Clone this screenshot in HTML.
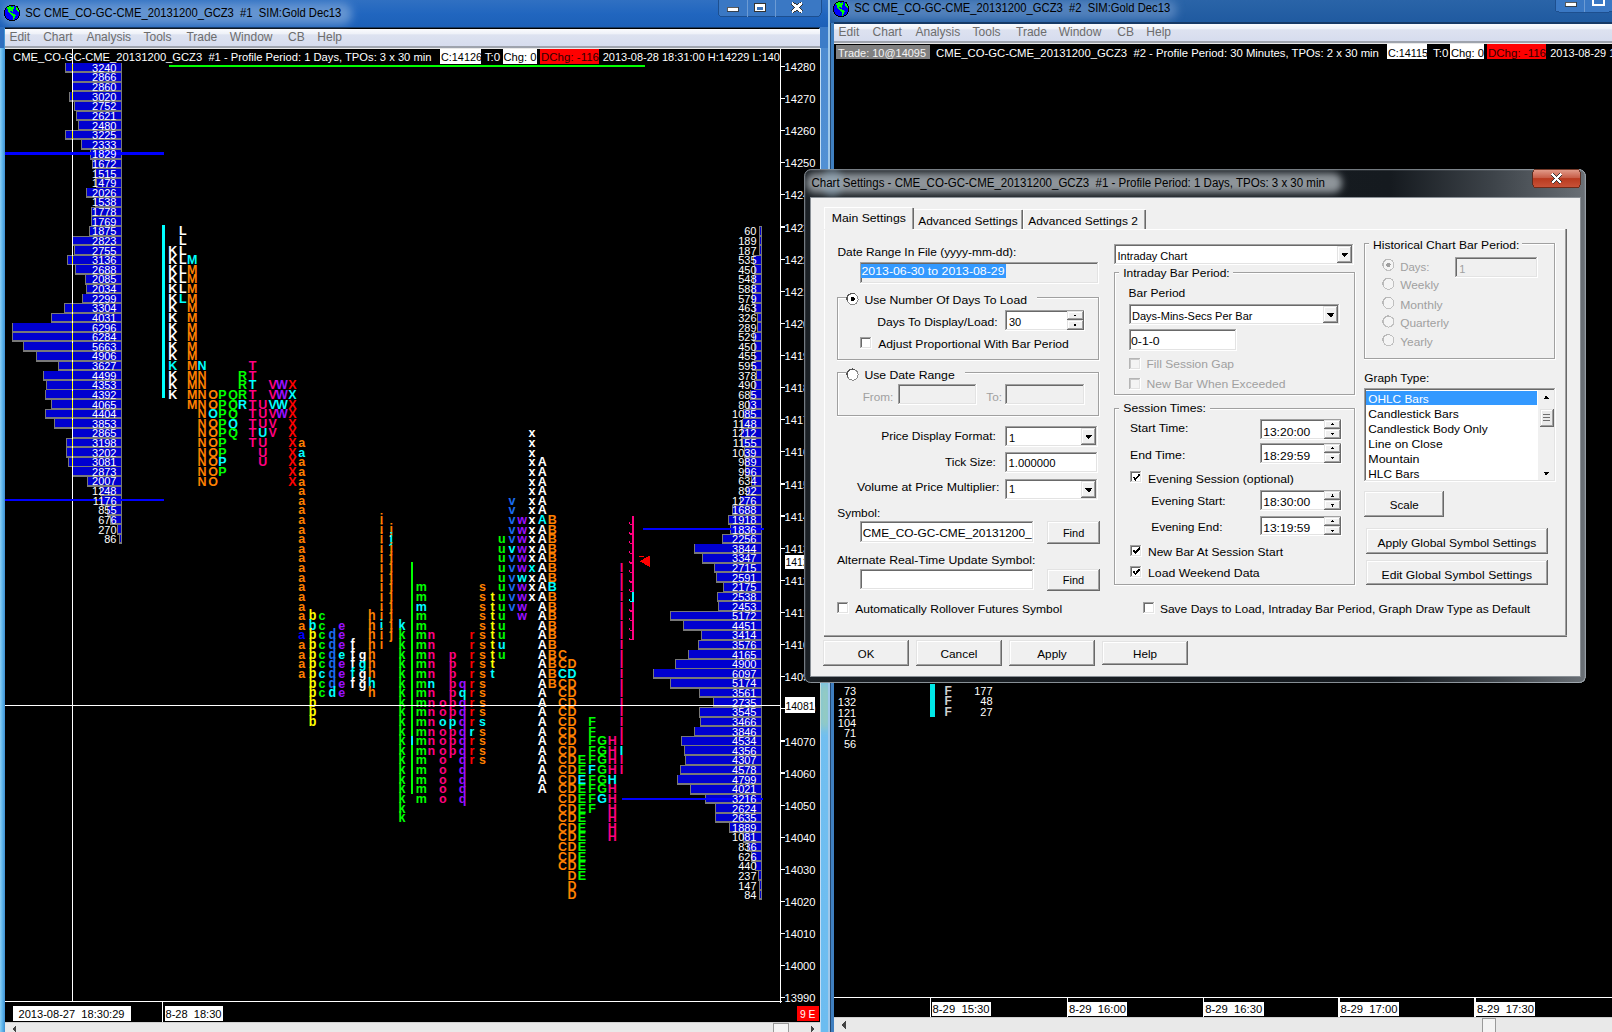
<!DOCTYPE html><html><head><meta charset="utf-8"><title>SC</title><style>
html,body{margin:0;padding:0;background:#000;overflow:hidden;width:1612px;height:1032px}
svg{display:block;font-family:"Liberation Sans",sans-serif}
</style></head><body>
<svg width="1612" height="1032" viewBox="0 0 1612 1032" shape-rendering="crispEdges">
<defs>
<linearGradient id="tb1" x1="0" y1="0" x2="0" y2="1"><stop offset="0" stop-color="#3070c2"/><stop offset="0.5" stop-color="#2166bf"/><stop offset="1" stop-color="#1c60b8"/></linearGradient>
<linearGradient id="tb2" x1="0" y1="0" x2="0" y2="1"><stop offset="0" stop-color="#2a64a8"/><stop offset="1" stop-color="#1f5aa0"/></linearGradient>
<radialGradient id="glow" cx="0.5" cy="0.5" r="0.5"><stop offset="0" stop-color="#9cc3ea" stop-opacity="0.9"/><stop offset="0.7" stop-color="#7fb0e4" stop-opacity="0.5"/><stop offset="1" stop-color="#6aa0dc" stop-opacity="0"/></radialGradient>
<linearGradient id="menu" x1="0" y1="0" x2="0" y2="1"><stop offset="0" stop-color="#fbfcfe"/><stop offset="0.3" stop-color="#eef1f8"/><stop offset="0.35" stop-color="#dde2f0"/><stop offset="1" stop-color="#d6dcee"/></linearGradient>
<linearGradient id="frameL" x1="0" y1="0" x2="1" y2="0"><stop offset="0" stop-color="#8ccff5"/><stop offset="0.5" stop-color="#5cb3ea"/><stop offset="1" stop-color="#3f8fd0"/></linearGradient>
<linearGradient id="frameM" x1="0" y1="0" x2="0" y2="1"><stop offset="0" stop-color="#4c8ad0"/><stop offset="0.45" stop-color="#5c9edc"/><stop offset="0.65" stop-color="#72bff0"/><stop offset="1" stop-color="#6cbcf0"/></linearGradient>
<linearGradient id="dlgframe" x1="0" y1="0" x2="0" y2="1"><stop offset="0" stop-color="#5d6369"/><stop offset="0.05" stop-color="#4b5157"/><stop offset="1" stop-color="#2f3439"/></linearGradient>
<linearGradient id="closebtn" x1="0" y1="0" x2="0" y2="1"><stop offset="0" stop-color="#e3a08f"/><stop offset="0.45" stop-color="#c85e48"/><stop offset="0.5" stop-color="#b93a1f"/><stop offset="1" stop-color="#c9543a"/></linearGradient>
<linearGradient id="globe" x1="0" y1="0" x2="1" y2="1"><stop offset="0" stop-color="#0000ff"/><stop offset="1" stop-color="#0000c0"/></linearGradient>
<filter id="blurT" x="-10%" y="-50%" width="120%" height="200%"><feGaussianBlur stdDeviation="4"/></filter>
</defs>
<rect x="0.00" y="0.00" width="1612.00" height="1032.00" fill="#000" />
<rect x="0.00" y="0.00" width="829.00" height="28.00" fill="url(#tb1)" />
<rect x="2" y="3" width="350" height="22" rx="10" fill="#7aa4d8" opacity="0.75" filter="url(#blurT)" shape-rendering="auto"/>
<rect x="0.00" y="28.00" width="5.00" height="1004.00" fill="url(#frameL)" />
<rect x="819.00" y="28.00" width="10.00" height="1004.00" fill="url(#frameM)" />
<rect x="820.00" y="28.00" width="1.00" height="1004.00" fill="#c0dcf4" />
<rect x="821" y="684" width="8" height="45" fill="#b8d890" opacity="0.7" filter="url(#blurT)" shape-rendering="auto"/>
<rect x="0.00" y="27.00" width="4.00" height="21.00" fill="#2f6fbf" />
<rect x="820.00" y="27.00" width="9.00" height="21.00" fill="#3c7cc8" />
<rect x="829.00" y="0.00" width="783.00" height="23.00" fill="url(#tb2)" />
<rect x="832" y="0" width="345" height="20" rx="9" fill="#6f98cc" opacity="0.6" filter="url(#blurT)" shape-rendering="auto"/>
<rect x="829.00" y="23.00" width="5.00" height="1009.00" fill="#3f7fc0" />
<rect x="828.00" y="0.00" width="1.50" height="1032.00" fill="#9fc8ea" />
<rect x="829.50" y="23.00" width="1.50" height="1009.00" fill="#23466d" />
<rect x="9.00" y="5.00" width="6.00" height="1.00" fill="#000" />
<rect x="7.00" y="6.00" width="2.00" height="1.00" fill="#000" />
<rect x="9.00" y="6.00" width="2.00" height="1.00" fill="#00ff00" />
<rect x="11.00" y="6.00" width="2.00" height="1.00" fill="#0000ff" />
<rect x="13.00" y="6.00" width="1.00" height="1.00" fill="#00ff00" />
<rect x="14.00" y="6.00" width="2.00" height="1.00" fill="#0000ff" />
<rect x="16.00" y="6.00" width="2.00" height="1.00" fill="#000" />
<rect x="6.00" y="7.00" width="1.00" height="1.00" fill="#000" />
<rect x="7.00" y="7.00" width="7.00" height="1.00" fill="#00ff00" />
<rect x="14.00" y="7.00" width="2.00" height="1.00" fill="#0000ff" />
<rect x="16.00" y="7.00" width="1.00" height="1.00" fill="#00ff00" />
<rect x="17.00" y="7.00" width="1.00" height="1.00" fill="#000" />
<rect x="5.00" y="8.00" width="1.00" height="1.00" fill="#000" />
<rect x="6.00" y="8.00" width="1.00" height="1.00" fill="#0000ff" />
<rect x="7.00" y="8.00" width="7.00" height="1.00" fill="#00ff00" />
<rect x="14.00" y="8.00" width="2.00" height="1.00" fill="#0000ff" />
<rect x="16.00" y="8.00" width="2.00" height="1.00" fill="#00ff00" />
<rect x="18.00" y="8.00" width="1.00" height="1.00" fill="#000" />
<rect x="5.00" y="9.00" width="1.00" height="1.00" fill="#000" />
<rect x="6.00" y="9.00" width="2.00" height="1.00" fill="#0000ff" />
<rect x="8.00" y="9.00" width="5.00" height="1.00" fill="#00ff00" />
<rect x="13.00" y="9.00" width="3.00" height="1.00" fill="#0000ff" />
<rect x="16.00" y="9.00" width="2.00" height="1.00" fill="#00ff00" />
<rect x="18.00" y="9.00" width="1.00" height="1.00" fill="#000" />
<rect x="4.00" y="10.00" width="1.00" height="1.00" fill="#000" />
<rect x="5.00" y="10.00" width="3.00" height="1.00" fill="#0000ff" />
<rect x="8.00" y="10.00" width="5.00" height="1.00" fill="#00ff00" />
<rect x="13.00" y="10.00" width="4.00" height="1.00" fill="#0000ff" />
<rect x="17.00" y="10.00" width="2.00" height="1.00" fill="#00ff00" />
<rect x="19.00" y="10.00" width="1.00" height="1.00" fill="#000" />
<rect x="4.00" y="11.00" width="1.00" height="1.00" fill="#000" />
<rect x="5.00" y="11.00" width="3.00" height="1.00" fill="#0000ff" />
<rect x="8.00" y="11.00" width="2.00" height="1.00" fill="#00ff00" />
<rect x="10.00" y="11.00" width="2.00" height="1.00" fill="#0000ff" />
<rect x="12.00" y="11.00" width="1.00" height="1.00" fill="#00ff00" />
<rect x="13.00" y="11.00" width="5.00" height="1.00" fill="#0000ff" />
<rect x="18.00" y="11.00" width="1.00" height="1.00" fill="#00ff00" />
<rect x="19.00" y="11.00" width="1.00" height="1.00" fill="#000" />
<rect x="4.00" y="12.00" width="1.00" height="1.00" fill="#000" />
<rect x="5.00" y="12.00" width="4.00" height="1.00" fill="#0000ff" />
<rect x="9.00" y="12.00" width="2.00" height="1.00" fill="#00ff00" />
<rect x="11.00" y="12.00" width="8.00" height="1.00" fill="#0000ff" />
<rect x="19.00" y="12.00" width="1.00" height="1.00" fill="#000" />
<rect x="4.00" y="13.00" width="1.00" height="1.00" fill="#000" />
<rect x="5.00" y="13.00" width="5.00" height="1.00" fill="#0000ff" />
<rect x="10.00" y="13.00" width="3.00" height="1.00" fill="#00ff00" />
<rect x="13.00" y="13.00" width="6.00" height="1.00" fill="#0000ff" />
<rect x="19.00" y="13.00" width="1.00" height="1.00" fill="#000" />
<rect x="4.00" y="14.00" width="1.00" height="1.00" fill="#000" />
<rect x="5.00" y="14.00" width="6.00" height="1.00" fill="#0000ff" />
<rect x="11.00" y="14.00" width="4.00" height="1.00" fill="#00ff00" />
<rect x="15.00" y="14.00" width="4.00" height="1.00" fill="#0000ff" />
<rect x="19.00" y="14.00" width="1.00" height="1.00" fill="#000" />
<rect x="4.00" y="15.00" width="1.00" height="1.00" fill="#000" />
<rect x="5.00" y="15.00" width="7.00" height="1.00" fill="#0000ff" />
<rect x="12.00" y="15.00" width="4.00" height="1.00" fill="#00ff00" />
<rect x="16.00" y="15.00" width="3.00" height="1.00" fill="#0000ff" />
<rect x="19.00" y="15.00" width="1.00" height="1.00" fill="#000" />
<rect x="5.00" y="16.00" width="1.00" height="1.00" fill="#000" />
<rect x="6.00" y="16.00" width="7.00" height="1.00" fill="#0000ff" />
<rect x="13.00" y="16.00" width="2.00" height="1.00" fill="#00ff00" />
<rect x="15.00" y="16.00" width="3.00" height="1.00" fill="#0000ff" />
<rect x="18.00" y="16.00" width="1.00" height="1.00" fill="#000" />
<rect x="5.00" y="17.00" width="1.00" height="1.00" fill="#000" />
<rect x="6.00" y="17.00" width="7.00" height="1.00" fill="#0000ff" />
<rect x="13.00" y="17.00" width="2.00" height="1.00" fill="#00ff00" />
<rect x="15.00" y="17.00" width="3.00" height="1.00" fill="#0000ff" />
<rect x="18.00" y="17.00" width="1.00" height="1.00" fill="#000" />
<rect x="6.00" y="18.00" width="1.00" height="1.00" fill="#000" />
<rect x="7.00" y="18.00" width="6.00" height="1.00" fill="#0000ff" />
<rect x="13.00" y="18.00" width="1.00" height="1.00" fill="#00ff00" />
<rect x="14.00" y="18.00" width="3.00" height="1.00" fill="#0000ff" />
<rect x="17.00" y="18.00" width="1.00" height="1.00" fill="#000" />
<rect x="7.00" y="19.00" width="2.00" height="1.00" fill="#000" />
<rect x="9.00" y="19.00" width="4.00" height="1.00" fill="#0000ff" />
<rect x="13.00" y="19.00" width="1.00" height="1.00" fill="#00ff00" />
<rect x="14.00" y="19.00" width="1.00" height="1.00" fill="#0000ff" />
<rect x="15.00" y="19.00" width="2.00" height="1.00" fill="#000" />
<rect x="9.00" y="20.00" width="6.00" height="1.00" fill="#000" />
<text x="25.30" y="16.60" font-size="12" fill="#000" textLength="316" lengthAdjust="spacingAndGlyphs" xml:space="preserve">SC CME_CO-GC-CME_20131200_GCZ3  #1  SIM:Gold Dec13</text>
<rect x="838.00" y="1.00" width="6.00" height="1.00" fill="#000" />
<rect x="836.00" y="2.00" width="2.00" height="1.00" fill="#000" />
<rect x="838.00" y="2.00" width="2.00" height="1.00" fill="#00ff00" />
<rect x="840.00" y="2.00" width="2.00" height="1.00" fill="#0000ff" />
<rect x="842.00" y="2.00" width="1.00" height="1.00" fill="#00ff00" />
<rect x="843.00" y="2.00" width="2.00" height="1.00" fill="#0000ff" />
<rect x="845.00" y="2.00" width="2.00" height="1.00" fill="#000" />
<rect x="835.00" y="3.00" width="1.00" height="1.00" fill="#000" />
<rect x="836.00" y="3.00" width="7.00" height="1.00" fill="#00ff00" />
<rect x="843.00" y="3.00" width="2.00" height="1.00" fill="#0000ff" />
<rect x="845.00" y="3.00" width="1.00" height="1.00" fill="#00ff00" />
<rect x="846.00" y="3.00" width="1.00" height="1.00" fill="#000" />
<rect x="834.00" y="4.00" width="1.00" height="1.00" fill="#000" />
<rect x="835.00" y="4.00" width="1.00" height="1.00" fill="#0000ff" />
<rect x="836.00" y="4.00" width="7.00" height="1.00" fill="#00ff00" />
<rect x="843.00" y="4.00" width="2.00" height="1.00" fill="#0000ff" />
<rect x="845.00" y="4.00" width="2.00" height="1.00" fill="#00ff00" />
<rect x="847.00" y="4.00" width="1.00" height="1.00" fill="#000" />
<rect x="834.00" y="5.00" width="1.00" height="1.00" fill="#000" />
<rect x="835.00" y="5.00" width="2.00" height="1.00" fill="#0000ff" />
<rect x="837.00" y="5.00" width="5.00" height="1.00" fill="#00ff00" />
<rect x="842.00" y="5.00" width="3.00" height="1.00" fill="#0000ff" />
<rect x="845.00" y="5.00" width="2.00" height="1.00" fill="#00ff00" />
<rect x="847.00" y="5.00" width="1.00" height="1.00" fill="#000" />
<rect x="833.00" y="6.00" width="1.00" height="1.00" fill="#000" />
<rect x="834.00" y="6.00" width="3.00" height="1.00" fill="#0000ff" />
<rect x="837.00" y="6.00" width="5.00" height="1.00" fill="#00ff00" />
<rect x="842.00" y="6.00" width="4.00" height="1.00" fill="#0000ff" />
<rect x="846.00" y="6.00" width="2.00" height="1.00" fill="#00ff00" />
<rect x="848.00" y="6.00" width="1.00" height="1.00" fill="#000" />
<rect x="833.00" y="7.00" width="1.00" height="1.00" fill="#000" />
<rect x="834.00" y="7.00" width="3.00" height="1.00" fill="#0000ff" />
<rect x="837.00" y="7.00" width="2.00" height="1.00" fill="#00ff00" />
<rect x="839.00" y="7.00" width="2.00" height="1.00" fill="#0000ff" />
<rect x="841.00" y="7.00" width="1.00" height="1.00" fill="#00ff00" />
<rect x="842.00" y="7.00" width="5.00" height="1.00" fill="#0000ff" />
<rect x="847.00" y="7.00" width="1.00" height="1.00" fill="#00ff00" />
<rect x="848.00" y="7.00" width="1.00" height="1.00" fill="#000" />
<rect x="833.00" y="8.00" width="1.00" height="1.00" fill="#000" />
<rect x="834.00" y="8.00" width="4.00" height="1.00" fill="#0000ff" />
<rect x="838.00" y="8.00" width="2.00" height="1.00" fill="#00ff00" />
<rect x="840.00" y="8.00" width="8.00" height="1.00" fill="#0000ff" />
<rect x="848.00" y="8.00" width="1.00" height="1.00" fill="#000" />
<rect x="833.00" y="9.00" width="1.00" height="1.00" fill="#000" />
<rect x="834.00" y="9.00" width="5.00" height="1.00" fill="#0000ff" />
<rect x="839.00" y="9.00" width="3.00" height="1.00" fill="#00ff00" />
<rect x="842.00" y="9.00" width="6.00" height="1.00" fill="#0000ff" />
<rect x="848.00" y="9.00" width="1.00" height="1.00" fill="#000" />
<rect x="833.00" y="10.00" width="1.00" height="1.00" fill="#000" />
<rect x="834.00" y="10.00" width="6.00" height="1.00" fill="#0000ff" />
<rect x="840.00" y="10.00" width="4.00" height="1.00" fill="#00ff00" />
<rect x="844.00" y="10.00" width="4.00" height="1.00" fill="#0000ff" />
<rect x="848.00" y="10.00" width="1.00" height="1.00" fill="#000" />
<rect x="833.00" y="11.00" width="1.00" height="1.00" fill="#000" />
<rect x="834.00" y="11.00" width="7.00" height="1.00" fill="#0000ff" />
<rect x="841.00" y="11.00" width="4.00" height="1.00" fill="#00ff00" />
<rect x="845.00" y="11.00" width="3.00" height="1.00" fill="#0000ff" />
<rect x="848.00" y="11.00" width="1.00" height="1.00" fill="#000" />
<rect x="834.00" y="12.00" width="1.00" height="1.00" fill="#000" />
<rect x="835.00" y="12.00" width="7.00" height="1.00" fill="#0000ff" />
<rect x="842.00" y="12.00" width="2.00" height="1.00" fill="#00ff00" />
<rect x="844.00" y="12.00" width="3.00" height="1.00" fill="#0000ff" />
<rect x="847.00" y="12.00" width="1.00" height="1.00" fill="#000" />
<rect x="834.00" y="13.00" width="1.00" height="1.00" fill="#000" />
<rect x="835.00" y="13.00" width="7.00" height="1.00" fill="#0000ff" />
<rect x="842.00" y="13.00" width="2.00" height="1.00" fill="#00ff00" />
<rect x="844.00" y="13.00" width="3.00" height="1.00" fill="#0000ff" />
<rect x="847.00" y="13.00" width="1.00" height="1.00" fill="#000" />
<rect x="835.00" y="14.00" width="1.00" height="1.00" fill="#000" />
<rect x="836.00" y="14.00" width="6.00" height="1.00" fill="#0000ff" />
<rect x="842.00" y="14.00" width="1.00" height="1.00" fill="#00ff00" />
<rect x="843.00" y="14.00" width="3.00" height="1.00" fill="#0000ff" />
<rect x="846.00" y="14.00" width="1.00" height="1.00" fill="#000" />
<rect x="836.00" y="15.00" width="2.00" height="1.00" fill="#000" />
<rect x="838.00" y="15.00" width="4.00" height="1.00" fill="#0000ff" />
<rect x="842.00" y="15.00" width="1.00" height="1.00" fill="#00ff00" />
<rect x="843.00" y="15.00" width="1.00" height="1.00" fill="#0000ff" />
<rect x="844.00" y="15.00" width="2.00" height="1.00" fill="#000" />
<rect x="838.00" y="16.00" width="6.00" height="1.00" fill="#000" />
<text x="854.20" y="12.40" font-size="12" fill="#000" textLength="316" lengthAdjust="spacingAndGlyphs" xml:space="preserve">SC CME_CO-GC-CME_20131200_GCZ3  #2  SIM:Gold Dec13</text>
<rect x="718" y="-4" width="103" height="20.5" rx="4" fill="#3a78c4" stroke="#1d4f8f" stroke-width="1"/>
<line x1="747" y1="0" x2="747" y2="16.5" stroke="#6c9bd4" stroke-width="1" />
<line x1="775" y1="0" x2="775" y2="16.5" stroke="#6c9bd4" stroke-width="1" />
<rect x="727.00" y="7.00" width="11.00" height="4.00" fill="#fff" stroke="#333" stroke-width="0.8"/>
<rect x="754.00" y="3.00" width="12.00" height="9.00" fill="#333" />
<rect x="755.00" y="4.00" width="10.00" height="7.00" fill="#fff" />
<rect x="757.00" y="7.00" width="6.00" height="2.50" fill="#3a72b8" />
<path d="M792 3 L802 12 M802 3 L792 12" stroke="#333" stroke-width="4"/><path d="M792 3 L802 12 M802 3 L792 12" stroke="#fff" stroke-width="2.6"/>
<rect x="1555" y="-4" width="58" height="16" rx="4" fill="#3a78c4" stroke="#1d4f8f" stroke-width="1"/>
<line x1="1584" y1="0" x2="1584" y2="12" stroke="#6c9bd4" stroke-width="1" />
<rect x="1565.00" y="2.00" width="11.00" height="4.00" fill="#fff" stroke="#333" stroke-width="0.8"/>
<rect x="1593" y="-2" width="11" height="7" fill="none" stroke="#fff" stroke-width="2.4"/>
<rect x="5.00" y="27.00" width="815.00" height="1.20" fill="#163a66" />
<rect x="5.00" y="28.50" width="815.00" height="18.00" fill="url(#menu)" />
<rect x="5.00" y="46.00" width="815.00" height="2.00" fill="#9ea3ad" />
<rect x="5.00" y="47.50" width="815.00" height="1.00" fill="#e8e8e8" />
<text x="9.40" y="40.80" font-size="12" fill="#6d6d6d" >Edit</text>
<text x="43.20" y="40.80" font-size="12" fill="#6d6d6d" >Chart</text>
<text x="86.40" y="40.80" font-size="12" fill="#6d6d6d" >Analysis</text>
<text x="143.50" y="40.80" font-size="12" fill="#6d6d6d" >Tools</text>
<text x="186.40" y="40.80" font-size="12" fill="#6d6d6d" >Trade</text>
<text x="229.80" y="40.80" font-size="12" fill="#6d6d6d" >Window</text>
<text x="288.00" y="40.80" font-size="12" fill="#6d6d6d" >CB</text>
<text x="317.30" y="40.80" font-size="12" fill="#6d6d6d" >Help</text>
<rect x="834.00" y="22.30" width="778.00" height="1.20" fill="#163a66" />
<rect x="834.00" y="23.50" width="778.00" height="18.00" fill="url(#menu)" />
<rect x="834.00" y="41.00" width="778.00" height="2.00" fill="#9ea3ad" />
<rect x="834.00" y="42.50" width="778.00" height="1.00" fill="#e8e8e8" />
<text x="838.60" y="36.00" font-size="12" fill="#6d6d6d" >Edit</text>
<text x="872.60" y="36.00" font-size="12" fill="#6d6d6d" >Chart</text>
<text x="915.50" y="36.00" font-size="12" fill="#6d6d6d" >Analysis</text>
<text x="972.60" y="36.00" font-size="12" fill="#6d6d6d" >Tools</text>
<text x="1016.00" y="36.00" font-size="12" fill="#6d6d6d" >Trade</text>
<text x="1058.70" y="36.00" font-size="12" fill="#6d6d6d" >Window</text>
<text x="1117.30" y="36.00" font-size="12" fill="#6d6d6d" >CB</text>
<text x="1146.30" y="36.00" font-size="12" fill="#6d6d6d" >Help</text>
<rect x="5.00" y="48.50" width="815.00" height="974.00" fill="#000" />
<rect x="834.00" y="43.50" width="778.00" height="974.00" fill="#000" />
<text x="13.10" y="61.00" font-size="11.5" fill="#fff" textLength="418.4" lengthAdjust="spacingAndGlyphs" xml:space="preserve">CME_CO-GC-CME_20131200_GCZ3  #1 - Profile Period: 1 Days, TPOs: 3 x 30 min</text>
<rect x="440.00" y="48.80" width="40.80" height="14.70" fill="#fff" />
<text x="441.00" y="61.00" font-size="11.5" fill="#000" textLength="41" lengthAdjust="spacingAndGlyphs" >C:14126</text>
<text x="484.80" y="61.00" font-size="11.5" fill="#fff" textLength="15.5" lengthAdjust="spacingAndGlyphs" >T:0</text>
<rect x="502.70" y="48.80" width="34.10" height="14.70" fill="#fff" />
<text x="503.50" y="61.00" font-size="11.5" fill="#000" textLength="33" lengthAdjust="spacingAndGlyphs" >Chg: 0</text>
<rect x="540.00" y="48.80" width="58.70" height="14.70" fill="#ff0000" />
<text x="541.00" y="61.00" font-size="11.5" fill="#300" textLength="58" lengthAdjust="spacingAndGlyphs" >DChg: -116</text>
<text x="602.70" y="61.00" font-size="11.5" fill="#fff" textLength="177.3" lengthAdjust="spacingAndGlyphs" >2013-08-28 18:31:00 H:14229 L:140</text>
<rect x="169.00" y="64.80" width="476.00" height="2.00" fill="#00ff00" />
<rect x="780.00" y="48.50" width="1.20" height="954.00" fill="#fff" />
<rect x="5.00" y="1001.30" width="776.50" height="1.10" fill="#fff" />
<rect x="781.00" y="65.80" width="3.50" height="1.20" fill="#fff" />
<text x="784.50" y="71.00" font-size="11.5" fill="#fff" textLength="31" lengthAdjust="spacingAndGlyphs" >14280</text>
<rect x="781.00" y="97.92" width="3.50" height="1.20" fill="#fff" />
<text x="784.50" y="103.12" font-size="11.5" fill="#fff" textLength="31" lengthAdjust="spacingAndGlyphs" >14270</text>
<rect x="781.00" y="130.04" width="3.50" height="1.20" fill="#fff" />
<text x="784.50" y="135.24" font-size="11.5" fill="#fff" textLength="31" lengthAdjust="spacingAndGlyphs" >14260</text>
<rect x="781.00" y="162.16" width="3.50" height="1.20" fill="#fff" />
<text x="784.50" y="167.36" font-size="11.5" fill="#fff" textLength="31" lengthAdjust="spacingAndGlyphs" >14250</text>
<rect x="781.00" y="194.28" width="3.50" height="1.20" fill="#fff" />
<text x="784.50" y="199.48" font-size="11.5" fill="#fff" textLength="31" lengthAdjust="spacingAndGlyphs" >14240</text>
<rect x="781.00" y="226.40" width="3.50" height="1.20" fill="#fff" />
<text x="784.50" y="231.60" font-size="11.5" fill="#fff" textLength="31" lengthAdjust="spacingAndGlyphs" >14230</text>
<rect x="781.00" y="258.52" width="3.50" height="1.20" fill="#fff" />
<text x="784.50" y="263.72" font-size="11.5" fill="#fff" textLength="31" lengthAdjust="spacingAndGlyphs" >14220</text>
<rect x="781.00" y="290.64" width="3.50" height="1.20" fill="#fff" />
<text x="784.50" y="295.84" font-size="11.5" fill="#fff" textLength="31" lengthAdjust="spacingAndGlyphs" >14210</text>
<rect x="781.00" y="322.76" width="3.50" height="1.20" fill="#fff" />
<text x="784.50" y="327.96" font-size="11.5" fill="#fff" textLength="31" lengthAdjust="spacingAndGlyphs" >14200</text>
<rect x="781.00" y="354.88" width="3.50" height="1.20" fill="#fff" />
<text x="784.50" y="360.08" font-size="11.5" fill="#fff" textLength="31" lengthAdjust="spacingAndGlyphs" >14190</text>
<rect x="781.00" y="387.00" width="3.50" height="1.20" fill="#fff" />
<text x="784.50" y="392.20" font-size="11.5" fill="#fff" textLength="31" lengthAdjust="spacingAndGlyphs" >14180</text>
<rect x="781.00" y="419.12" width="3.50" height="1.20" fill="#fff" />
<text x="784.50" y="424.32" font-size="11.5" fill="#fff" textLength="31" lengthAdjust="spacingAndGlyphs" >14170</text>
<rect x="781.00" y="451.24" width="3.50" height="1.20" fill="#fff" />
<text x="784.50" y="456.44" font-size="11.5" fill="#fff" textLength="31" lengthAdjust="spacingAndGlyphs" >14160</text>
<rect x="781.00" y="483.36" width="3.50" height="1.20" fill="#fff" />
<text x="784.50" y="488.56" font-size="11.5" fill="#fff" textLength="31" lengthAdjust="spacingAndGlyphs" >14150</text>
<rect x="781.00" y="515.48" width="3.50" height="1.20" fill="#fff" />
<text x="784.50" y="520.68" font-size="11.5" fill="#fff" textLength="31" lengthAdjust="spacingAndGlyphs" >14140</text>
<rect x="781.00" y="547.60" width="3.50" height="1.20" fill="#fff" />
<text x="784.50" y="552.80" font-size="11.5" fill="#fff" textLength="31" lengthAdjust="spacingAndGlyphs" >14130</text>
<rect x="781.00" y="579.72" width="3.50" height="1.20" fill="#fff" />
<text x="784.50" y="584.92" font-size="11.5" fill="#fff" textLength="31" lengthAdjust="spacingAndGlyphs" >14120</text>
<rect x="781.00" y="611.84" width="3.50" height="1.20" fill="#fff" />
<text x="784.50" y="617.04" font-size="11.5" fill="#fff" textLength="31" lengthAdjust="spacingAndGlyphs" >14110</text>
<rect x="781.00" y="643.96" width="3.50" height="1.20" fill="#fff" />
<text x="784.50" y="649.16" font-size="11.5" fill="#fff" textLength="31" lengthAdjust="spacingAndGlyphs" >14100</text>
<rect x="781.00" y="676.08" width="3.50" height="1.20" fill="#fff" />
<text x="784.50" y="681.28" font-size="11.5" fill="#fff" textLength="31" lengthAdjust="spacingAndGlyphs" >14090</text>
<rect x="781.00" y="708.20" width="3.50" height="1.20" fill="#fff" />
<text x="784.50" y="713.40" font-size="11.5" fill="#fff" textLength="31" lengthAdjust="spacingAndGlyphs" >14080</text>
<rect x="781.00" y="740.32" width="3.50" height="1.20" fill="#fff" />
<text x="784.50" y="745.52" font-size="11.5" fill="#fff" textLength="31" lengthAdjust="spacingAndGlyphs" >14070</text>
<rect x="781.00" y="772.44" width="3.50" height="1.20" fill="#fff" />
<text x="784.50" y="777.64" font-size="11.5" fill="#fff" textLength="31" lengthAdjust="spacingAndGlyphs" >14060</text>
<rect x="781.00" y="804.56" width="3.50" height="1.20" fill="#fff" />
<text x="784.50" y="809.76" font-size="11.5" fill="#fff" textLength="31" lengthAdjust="spacingAndGlyphs" >14050</text>
<rect x="781.00" y="836.68" width="3.50" height="1.20" fill="#fff" />
<text x="784.50" y="841.88" font-size="11.5" fill="#fff" textLength="31" lengthAdjust="spacingAndGlyphs" >14040</text>
<rect x="781.00" y="868.80" width="3.50" height="1.20" fill="#fff" />
<text x="784.50" y="874.00" font-size="11.5" fill="#fff" textLength="31" lengthAdjust="spacingAndGlyphs" >14030</text>
<rect x="781.00" y="900.92" width="3.50" height="1.20" fill="#fff" />
<text x="784.50" y="906.12" font-size="11.5" fill="#fff" textLength="31" lengthAdjust="spacingAndGlyphs" >14020</text>
<rect x="781.00" y="933.04" width="3.50" height="1.20" fill="#fff" />
<text x="784.50" y="938.24" font-size="11.5" fill="#fff" textLength="31" lengthAdjust="spacingAndGlyphs" >14010</text>
<rect x="781.00" y="965.16" width="3.50" height="1.20" fill="#fff" />
<text x="784.50" y="970.36" font-size="11.5" fill="#fff" textLength="31" lengthAdjust="spacingAndGlyphs" >14000</text>
<rect x="781.00" y="997.28" width="3.50" height="1.20" fill="#fff" />
<text x="784.50" y="1002.48" font-size="11.5" fill="#fff" textLength="31" lengthAdjust="spacingAndGlyphs" >13990</text>
<rect x="65.12" y="62.90" width="56.68" height="10.10" fill="#787878" />
<rect x="71.63" y="72.52" width="50.17" height="10.10" fill="#787878" />
<rect x="71.74" y="82.14" width="50.06" height="10.10" fill="#787878" />
<rect x="68.95" y="91.76" width="52.85" height="10.10" fill="#787878" />
<rect x="73.62" y="101.38" width="48.18" height="10.10" fill="#787878" />
<rect x="75.89" y="111.00" width="45.91" height="10.10" fill="#787878" />
<rect x="78.35" y="120.62" width="43.45" height="10.10" fill="#787878" />
<rect x="65.39" y="130.24" width="56.41" height="10.10" fill="#787878" />
<rect x="80.91" y="139.86" width="40.89" height="10.10" fill="#787878" />
<rect x="89.68" y="149.48" width="32.12" height="10.10" fill="#787878" />
<rect x="92.41" y="159.10" width="29.39" height="10.10" fill="#787878" />
<rect x="95.14" y="168.72" width="26.66" height="10.10" fill="#787878" />
<rect x="95.77" y="178.34" width="26.03" height="10.10" fill="#787878" />
<rect x="86.25" y="187.96" width="35.55" height="10.10" fill="#787878" />
<rect x="94.74" y="197.58" width="27.06" height="10.10" fill="#787878" />
<rect x="90.56" y="207.20" width="31.24" height="10.10" fill="#787878" />
<rect x="90.72" y="216.82" width="31.08" height="10.10" fill="#787878" />
<rect x="88.88" y="226.44" width="32.92" height="10.10" fill="#787878" />
<rect x="72.38" y="236.06" width="49.42" height="10.10" fill="#787878" />
<rect x="73.56" y="245.68" width="48.24" height="10.10" fill="#787878" />
<rect x="66.93" y="255.30" width="54.87" height="10.10" fill="#787878" />
<rect x="74.73" y="264.92" width="47.07" height="10.10" fill="#787878" />
<rect x="85.22" y="274.54" width="36.58" height="10.10" fill="#787878" />
<rect x="86.11" y="284.16" width="35.69" height="10.10" fill="#787878" />
<rect x="81.50" y="293.78" width="40.30" height="10.10" fill="#787878" />
<rect x="64.01" y="303.40" width="57.79" height="10.10" fill="#787878" />
<rect x="51.36" y="313.02" width="70.44" height="10.10" fill="#787878" />
<rect x="11.95" y="322.64" width="109.85" height="10.10" fill="#787878" />
<rect x="12.16" y="332.26" width="109.64" height="10.10" fill="#787878" />
<rect x="22.96" y="341.88" width="98.84" height="10.10" fill="#787878" />
<rect x="36.14" y="351.50" width="85.66" height="10.10" fill="#787878" />
<rect x="58.39" y="361.12" width="63.41" height="10.10" fill="#787878" />
<rect x="43.22" y="370.74" width="78.58" height="10.10" fill="#787878" />
<rect x="45.76" y="380.36" width="76.04" height="10.10" fill="#787878" />
<rect x="45.08" y="389.98" width="76.72" height="10.10" fill="#787878" />
<rect x="50.77" y="399.60" width="71.03" height="10.10" fill="#787878" />
<rect x="44.87" y="409.22" width="76.93" height="10.10" fill="#787878" />
<rect x="54.46" y="418.84" width="67.34" height="10.10" fill="#787878" />
<rect x="71.65" y="428.46" width="50.15" height="10.10" fill="#787878" />
<rect x="65.85" y="438.08" width="55.95" height="10.10" fill="#787878" />
<rect x="65.79" y="447.70" width="56.01" height="10.10" fill="#787878" />
<rect x="67.89" y="457.32" width="53.91" height="10.10" fill="#787878" />
<rect x="71.51" y="466.94" width="50.29" height="10.10" fill="#787878" />
<rect x="86.58" y="476.56" width="35.22" height="10.10" fill="#787878" />
<rect x="99.78" y="486.18" width="22.02" height="10.10" fill="#787878" />
<rect x="101.04" y="495.80" width="20.76" height="10.10" fill="#787878" />
<rect x="106.62" y="505.42" width="15.18" height="10.10" fill="#787878" />
<rect x="109.74" y="515.04" width="12.06" height="10.10" fill="#787878" />
<rect x="116.80" y="524.66" width="5.00" height="10.10" fill="#787878" />
<rect x="118.80" y="534.28" width="3.00" height="10.10" fill="#787878" />
<rect x="66.12" y="63.40" width="54.68" height="7.70" fill="#0000d0" />
<rect x="72.63" y="73.02" width="48.17" height="7.70" fill="#0000d0" />
<rect x="72.74" y="82.64" width="48.06" height="7.70" fill="#0000d0" />
<rect x="69.95" y="92.26" width="50.85" height="7.70" fill="#0000d0" />
<rect x="74.62" y="101.88" width="46.18" height="7.70" fill="#0000d0" />
<rect x="76.89" y="111.50" width="43.91" height="7.70" fill="#0000d0" />
<rect x="79.35" y="121.12" width="41.45" height="7.70" fill="#0000d0" />
<rect x="66.39" y="130.74" width="54.41" height="7.70" fill="#0000d0" />
<rect x="81.91" y="140.36" width="38.89" height="7.70" fill="#0000d0" />
<rect x="90.68" y="149.98" width="30.12" height="7.70" fill="#0000d0" />
<rect x="93.41" y="159.60" width="27.39" height="7.70" fill="#0000d0" />
<rect x="96.14" y="169.22" width="24.66" height="7.70" fill="#0000d0" />
<rect x="96.77" y="178.84" width="24.03" height="7.70" fill="#0000d0" />
<rect x="87.25" y="188.46" width="33.55" height="7.70" fill="#0000d0" />
<rect x="95.74" y="198.08" width="25.06" height="7.70" fill="#0000d0" />
<rect x="91.56" y="207.70" width="29.24" height="7.70" fill="#0000d0" />
<rect x="91.72" y="217.32" width="29.08" height="7.70" fill="#0000d0" />
<rect x="89.88" y="226.94" width="30.92" height="7.70" fill="#0000d0" />
<rect x="73.38" y="236.56" width="47.42" height="7.70" fill="#0000d0" />
<rect x="74.56" y="246.18" width="46.24" height="7.70" fill="#0000d0" />
<rect x="67.93" y="255.80" width="52.87" height="7.70" fill="#0000d0" />
<rect x="75.73" y="265.42" width="45.07" height="7.70" fill="#0000d0" />
<rect x="86.22" y="275.04" width="34.58" height="7.70" fill="#0000d0" />
<rect x="87.11" y="284.66" width="33.69" height="7.70" fill="#0000d0" />
<rect x="82.50" y="294.28" width="38.30" height="7.70" fill="#0000d0" />
<rect x="65.01" y="303.90" width="55.79" height="7.70" fill="#0000d0" />
<rect x="52.36" y="313.52" width="68.44" height="7.70" fill="#0000d0" />
<rect x="12.95" y="323.14" width="107.85" height="7.70" fill="#0000d0" />
<rect x="13.16" y="332.76" width="107.64" height="7.70" fill="#0000d0" />
<rect x="23.96" y="342.38" width="96.84" height="7.70" fill="#0000d0" />
<rect x="37.14" y="352.00" width="83.66" height="7.70" fill="#0000d0" />
<rect x="59.39" y="361.62" width="61.41" height="7.70" fill="#0000d0" />
<rect x="44.22" y="371.24" width="76.58" height="7.70" fill="#0000d0" />
<rect x="46.76" y="380.86" width="74.04" height="7.70" fill="#0000d0" />
<rect x="46.08" y="390.48" width="74.72" height="7.70" fill="#0000d0" />
<rect x="51.77" y="400.10" width="69.03" height="7.70" fill="#0000d0" />
<rect x="45.87" y="409.72" width="74.93" height="7.70" fill="#0000d0" />
<rect x="55.46" y="419.34" width="65.34" height="7.70" fill="#0000d0" />
<rect x="72.65" y="428.96" width="48.15" height="7.70" fill="#0000d0" />
<rect x="66.85" y="438.58" width="53.95" height="7.70" fill="#0000d0" />
<rect x="66.79" y="448.20" width="54.01" height="7.70" fill="#0000d0" />
<rect x="68.89" y="457.82" width="51.91" height="7.70" fill="#0000d0" />
<rect x="72.51" y="467.44" width="48.29" height="7.70" fill="#0000d0" />
<rect x="87.58" y="477.06" width="33.22" height="7.70" fill="#0000d0" />
<rect x="100.78" y="486.68" width="20.02" height="7.70" fill="#0000d0" />
<rect x="102.04" y="496.30" width="18.76" height="7.70" fill="#0000d0" />
<rect x="107.62" y="505.92" width="13.18" height="7.70" fill="#0000d0" />
<rect x="110.74" y="515.54" width="10.06" height="7.70" fill="#0000d0" />
<rect x="117.80" y="525.16" width="3.00" height="7.70" fill="#0000d0" />
<rect x="119.80" y="534.78" width="1.00" height="7.70" fill="#0000d0" />
<rect x="72.00" y="48.50" width="1.00" height="953.00" fill="#fff" />
<rect x="72.00" y="63.60" width="1.00" height="7.60" fill="#ffff00" />
<rect x="72.00" y="92.46" width="1.00" height="7.60" fill="#ffff00" />
<rect x="72.00" y="130.94" width="1.00" height="7.60" fill="#ffff00" />
<rect x="72.00" y="256.00" width="1.00" height="7.60" fill="#ffff00" />
<rect x="72.00" y="304.10" width="1.00" height="7.60" fill="#ffff00" />
<rect x="72.00" y="313.72" width="1.00" height="7.60" fill="#ffff00" />
<rect x="72.00" y="323.34" width="1.00" height="7.60" fill="#ffff00" />
<rect x="72.00" y="332.96" width="1.00" height="7.60" fill="#ffff00" />
<rect x="72.00" y="342.58" width="1.00" height="7.60" fill="#ffff00" />
<rect x="72.00" y="352.20" width="1.00" height="7.60" fill="#ffff00" />
<rect x="72.00" y="361.82" width="1.00" height="7.60" fill="#ffff00" />
<rect x="72.00" y="371.44" width="1.00" height="7.60" fill="#ffff00" />
<rect x="72.00" y="381.06" width="1.00" height="7.60" fill="#ffff00" />
<rect x="72.00" y="390.68" width="1.00" height="7.60" fill="#ffff00" />
<rect x="72.00" y="400.30" width="1.00" height="7.60" fill="#ffff00" />
<rect x="72.00" y="409.92" width="1.00" height="7.60" fill="#ffff00" />
<rect x="72.00" y="419.54" width="1.00" height="7.60" fill="#ffff00" />
<rect x="72.00" y="438.78" width="1.00" height="7.60" fill="#ffff00" />
<rect x="72.00" y="448.40" width="1.00" height="7.60" fill="#ffff00" />
<rect x="72.00" y="458.02" width="1.00" height="7.60" fill="#ffff00" />
<rect x="5.00" y="152.30" width="159.00" height="2.20" fill="#0000ff" />
<rect x="5.00" y="498.80" width="159.00" height="2.20" fill="#0000ff" />
<text x="116.50" y="71.80" font-size="11" fill="#fff" text-anchor="end" >3240</text>
<text x="116.50" y="81.42" font-size="11" fill="#fff" text-anchor="end" >2866</text>
<text x="116.50" y="91.04" font-size="11" fill="#fff" text-anchor="end" >2860</text>
<text x="116.50" y="100.66" font-size="11" fill="#fff" text-anchor="end" >3020</text>
<text x="116.50" y="110.28" font-size="11" fill="#fff" text-anchor="end" >2752</text>
<text x="116.50" y="119.90" font-size="11" fill="#fff" text-anchor="end" >2621</text>
<text x="116.50" y="129.52" font-size="11" fill="#fff" text-anchor="end" >2480</text>
<text x="116.50" y="139.14" font-size="11" fill="#fff" text-anchor="end" >3225</text>
<text x="116.50" y="148.76" font-size="11" fill="#fff" text-anchor="end" >2333</text>
<text x="116.50" y="158.38" font-size="11" fill="#fff" text-anchor="end" >1829</text>
<text x="116.50" y="168.00" font-size="11" fill="#fff" text-anchor="end" >1672</text>
<text x="116.50" y="177.62" font-size="11" fill="#fff" text-anchor="end" >1515</text>
<text x="116.50" y="187.24" font-size="11" fill="#fff" text-anchor="end" >1479</text>
<text x="116.50" y="196.86" font-size="11" fill="#fff" text-anchor="end" >2026</text>
<text x="116.50" y="206.48" font-size="11" fill="#fff" text-anchor="end" >1538</text>
<text x="116.50" y="216.10" font-size="11" fill="#fff" text-anchor="end" >1778</text>
<text x="116.50" y="225.72" font-size="11" fill="#fff" text-anchor="end" >1769</text>
<text x="116.50" y="235.34" font-size="11" fill="#fff" text-anchor="end" >1875</text>
<text x="116.50" y="244.96" font-size="11" fill="#fff" text-anchor="end" >2823</text>
<text x="116.50" y="254.58" font-size="11" fill="#fff" text-anchor="end" >2755</text>
<text x="116.50" y="264.20" font-size="11" fill="#fff" text-anchor="end" >3136</text>
<text x="116.50" y="273.82" font-size="11" fill="#fff" text-anchor="end" >2688</text>
<text x="116.50" y="283.44" font-size="11" fill="#fff" text-anchor="end" >2085</text>
<text x="116.50" y="293.06" font-size="11" fill="#fff" text-anchor="end" >2034</text>
<text x="116.50" y="302.68" font-size="11" fill="#fff" text-anchor="end" >2299</text>
<text x="116.50" y="312.30" font-size="11" fill="#fff" text-anchor="end" >3304</text>
<text x="116.50" y="321.92" font-size="11" fill="#fff" text-anchor="end" >4031</text>
<text x="116.50" y="331.54" font-size="11" fill="#fff" text-anchor="end" >6296</text>
<text x="116.50" y="341.16" font-size="11" fill="#fff" text-anchor="end" >6284</text>
<text x="116.50" y="350.78" font-size="11" fill="#fff" text-anchor="end" >5663</text>
<text x="116.50" y="360.40" font-size="11" fill="#fff" text-anchor="end" >4906</text>
<text x="116.50" y="370.02" font-size="11" fill="#fff" text-anchor="end" >3627</text>
<text x="116.50" y="379.64" font-size="11" fill="#fff" text-anchor="end" >4499</text>
<text x="116.50" y="389.26" font-size="11" fill="#fff" text-anchor="end" >4353</text>
<text x="116.50" y="398.88" font-size="11" fill="#fff" text-anchor="end" >4392</text>
<text x="116.50" y="408.50" font-size="11" fill="#fff" text-anchor="end" >4065</text>
<text x="116.50" y="418.12" font-size="11" fill="#fff" text-anchor="end" >4404</text>
<text x="116.50" y="427.74" font-size="11" fill="#fff" text-anchor="end" >3853</text>
<text x="116.50" y="437.36" font-size="11" fill="#fff" text-anchor="end" >2865</text>
<text x="116.50" y="446.98" font-size="11" fill="#fff" text-anchor="end" >3198</text>
<text x="116.50" y="456.60" font-size="11" fill="#fff" text-anchor="end" >3202</text>
<text x="116.50" y="466.22" font-size="11" fill="#fff" text-anchor="end" >3081</text>
<text x="116.50" y="475.84" font-size="11" fill="#fff" text-anchor="end" >2873</text>
<text x="116.50" y="485.46" font-size="11" fill="#fff" text-anchor="end" >2007</text>
<text x="116.50" y="495.08" font-size="11" fill="#fff" text-anchor="end" >1248</text>
<text x="116.50" y="504.70" font-size="11" fill="#fff" text-anchor="end" >1176</text>
<text x="116.50" y="514.32" font-size="11" fill="#fff" text-anchor="end" >855</text>
<text x="116.50" y="523.94" font-size="11" fill="#fff" text-anchor="end" >676</text>
<text x="116.50" y="533.56" font-size="11" fill="#fff" text-anchor="end" >270</text>
<text x="116.50" y="543.18" font-size="11" fill="#fff" text-anchor="end" >86</text>
<rect x="632.20" y="515.94" width="2.10" height="9.90" fill="#ff0080" />
<rect x="629.60" y="523.74" width="3.00" height="1.30" fill="#ff0080" />
<rect x="629.20" y="522.14" width="1.20" height="2.00" fill="#ff0080" />
<rect x="632.20" y="524.76" width="2.10" height="9.90" fill="#ff0080" />
<rect x="629.60" y="533.36" width="3.00" height="1.30" fill="#ff0080" />
<rect x="629.20" y="531.76" width="1.20" height="2.00" fill="#ff0080" />
<rect x="632.20" y="534.38" width="2.10" height="9.90" fill="#ff0080" />
<rect x="629.60" y="542.98" width="3.00" height="1.30" fill="#ff0080" />
<rect x="629.20" y="541.38" width="1.20" height="2.00" fill="#ff0080" />
<rect x="632.20" y="544.00" width="2.10" height="9.90" fill="#ff0080" />
<rect x="629.60" y="552.60" width="3.00" height="1.30" fill="#ff0080" />
<rect x="629.20" y="551.00" width="1.20" height="2.00" fill="#ff0080" />
<rect x="632.20" y="553.62" width="2.10" height="9.90" fill="#ff0080" />
<rect x="629.60" y="562.22" width="3.00" height="1.30" fill="#ff0080" />
<rect x="629.20" y="560.62" width="1.20" height="2.00" fill="#ff0080" />
<rect x="632.20" y="563.24" width="2.10" height="9.90" fill="#ff0080" />
<rect x="629.60" y="571.84" width="3.00" height="1.30" fill="#ff0080" />
<rect x="629.20" y="570.24" width="1.20" height="2.00" fill="#ff0080" />
<rect x="632.20" y="572.86" width="2.10" height="9.90" fill="#ff0080" />
<rect x="629.60" y="581.46" width="3.00" height="1.30" fill="#ff0080" />
<rect x="629.20" y="579.86" width="1.20" height="2.00" fill="#ff0080" />
<rect x="632.20" y="582.48" width="2.10" height="9.90" fill="#ff0080" />
<rect x="629.60" y="591.08" width="3.00" height="1.30" fill="#ff0080" />
<rect x="629.20" y="589.48" width="1.20" height="2.00" fill="#ff0080" />
<rect x="632.20" y="592.10" width="2.10" height="9.90" fill="#00ffff" />
<rect x="629.60" y="600.70" width="3.00" height="1.30" fill="#00ffff" />
<rect x="629.20" y="599.10" width="1.20" height="2.00" fill="#00ffff" />
<rect x="632.20" y="601.72" width="2.10" height="9.90" fill="#ff0080" />
<rect x="629.60" y="610.32" width="3.00" height="1.30" fill="#ff0080" />
<rect x="629.20" y="608.72" width="1.20" height="2.00" fill="#ff0080" />
<rect x="632.20" y="611.34" width="2.10" height="9.90" fill="#ff0080" />
<rect x="629.60" y="619.94" width="3.00" height="1.30" fill="#ff0080" />
<rect x="629.20" y="618.34" width="1.20" height="2.00" fill="#ff0080" />
<rect x="632.20" y="620.96" width="2.10" height="9.90" fill="#ff0080" />
<rect x="629.60" y="629.56" width="3.00" height="1.30" fill="#ff0080" />
<rect x="629.20" y="627.96" width="1.20" height="2.00" fill="#ff0080" />
<rect x="632.20" y="630.58" width="2.10" height="9.90" fill="#ff0080" />
<rect x="629.60" y="639.18" width="3.00" height="1.30" fill="#ff0080" />
<rect x="629.20" y="637.58" width="1.20" height="2.00" fill="#ff0080" />
<rect x="162.00" y="225.00" width="3.00" height="173.00" fill="#00ffff" />
<rect x="411.00" y="562.00" width="2.20" height="231.50" fill="#00ff00" />
<rect x="411.00" y="735.50" width="2.20" height="9.00" fill="#00ffff" />
<g font-size="12.5" font-weight="bold" text-anchor="middle">
<text transform="translate(172.7,254.6) scale(1,1.04)" fill="#ffffff">K</text>
<text transform="translate(172.7,264.2) scale(1,1.04)" fill="#ffffff">K</text>
<text transform="translate(172.7,273.8) scale(1,1.04)" fill="#ffffff">K</text>
<text transform="translate(172.7,283.4) scale(1,1.04)" fill="#ffffff">K</text>
<text transform="translate(172.7,293.1) scale(1,1.04)" fill="#ffffff">K</text>
<text transform="translate(172.7,302.7) scale(1,1.04)" fill="#ffffff">K</text>
<text transform="translate(172.7,312.3) scale(1,1.04)" fill="#ffffff">K</text>
<text transform="translate(172.7,321.9) scale(1,1.04)" fill="#ffffff">K</text>
<text transform="translate(172.7,331.5) scale(1,1.04)" fill="#ffffff">K</text>
<text transform="translate(172.7,341.2) scale(1,1.04)" fill="#ffffff">K</text>
<text transform="translate(172.7,350.8) scale(1,1.04)" fill="#ffffff">K</text>
<text transform="translate(172.7,360.4) scale(1,1.04)" fill="#ffffff">K</text>
<text transform="translate(172.7,370.0) scale(1,1.04)" fill="#00ffff">K</text>
<text transform="translate(172.7,379.6) scale(1,1.04)" fill="#ffffff">K</text>
<text transform="translate(172.7,389.3) scale(1,1.04)" fill="#ffffff">K</text>
<text transform="translate(172.7,398.9) scale(1,1.04)" fill="#ffffff">K</text>
<text transform="translate(182.7,235.3) scale(1,1.04)" fill="#ffffff">L</text>
<text transform="translate(182.7,245.0) scale(1,1.04)" fill="#ffffff">L</text>
<text transform="translate(182.7,254.6) scale(1,1.04)" fill="#ffffff">L</text>
<text transform="translate(182.7,264.2) scale(1,1.04)" fill="#ffffff">L</text>
<text transform="translate(182.7,273.8) scale(1,1.04)" fill="#ffffff">L</text>
<text transform="translate(182.7,283.4) scale(1,1.04)" fill="#ffffff">L</text>
<text transform="translate(182.7,293.1) scale(1,1.04)" fill="#ffffff">L</text>
<text transform="translate(182.7,302.7) scale(1,1.04)" fill="#00ffff">L</text>
<text transform="translate(192.2,264.2) scale(1,1.04)" fill="#00ffff">M</text>
<text transform="translate(192.2,273.8) scale(1,1.04)" fill="#ff8000">M</text>
<text transform="translate(192.2,283.4) scale(1,1.04)" fill="#ff8000">M</text>
<text transform="translate(192.2,293.1) scale(1,1.04)" fill="#ff8000">M</text>
<text transform="translate(192.2,302.7) scale(1,1.04)" fill="#ff8000">M</text>
<text transform="translate(192.2,312.3) scale(1,1.04)" fill="#ff8000">M</text>
<text transform="translate(192.2,321.9) scale(1,1.04)" fill="#ff8000">M</text>
<text transform="translate(192.2,331.5) scale(1,1.04)" fill="#ff8000">M</text>
<text transform="translate(192.2,341.2) scale(1,1.04)" fill="#ff8000">M</text>
<text transform="translate(192.2,350.8) scale(1,1.04)" fill="#ff8000">M</text>
<text transform="translate(192.2,360.4) scale(1,1.04)" fill="#ff8000">M</text>
<text transform="translate(192.2,370.0) scale(1,1.04)" fill="#ff8000">M</text>
<text transform="translate(192.2,379.6) scale(1,1.04)" fill="#ff8000">M</text>
<text transform="translate(192.2,389.3) scale(1,1.04)" fill="#ff8000">M</text>
<text transform="translate(192.2,398.9) scale(1,1.04)" fill="#ff8000">M</text>
<text transform="translate(192.2,408.5) scale(1,1.04)" fill="#ff8000">M</text>
<text transform="translate(202.0,370.0) scale(1,1.04)" fill="#00ffff">N</text>
<text transform="translate(202.0,379.6) scale(1,1.04)" fill="#ff8000">N</text>
<text transform="translate(202.0,389.3) scale(1,1.04)" fill="#ff8000">N</text>
<text transform="translate(202.0,398.9) scale(1,1.04)" fill="#ff8000">N</text>
<text transform="translate(202.0,408.5) scale(1,1.04)" fill="#ff8000">N</text>
<text transform="translate(202.0,418.1) scale(1,1.04)" fill="#ff8000">N</text>
<text transform="translate(202.0,427.7) scale(1,1.04)" fill="#ff8000">N</text>
<text transform="translate(202.0,437.4) scale(1,1.04)" fill="#ff8000">N</text>
<text transform="translate(202.0,447.0) scale(1,1.04)" fill="#ff8000">N</text>
<text transform="translate(202.0,456.6) scale(1,1.04)" fill="#ff8000">N</text>
<text transform="translate(202.0,466.2) scale(1,1.04)" fill="#ff8000">N</text>
<text transform="translate(202.0,475.8) scale(1,1.04)" fill="#ff8000">N</text>
<text transform="translate(202.0,485.5) scale(1,1.04)" fill="#ff8000">N</text>
<text transform="translate(213.0,398.9) scale(1,1.04)" fill="#ff8000">O</text>
<text transform="translate(213.0,408.5) scale(1,1.04)" fill="#ff8000">O</text>
<text transform="translate(213.0,418.1) scale(1,1.04)" fill="#00ffff">O</text>
<text transform="translate(213.0,427.7) scale(1,1.04)" fill="#ff8000">O</text>
<text transform="translate(213.0,437.4) scale(1,1.04)" fill="#ff8000">O</text>
<text transform="translate(213.0,447.0) scale(1,1.04)" fill="#ff8000">O</text>
<text transform="translate(213.0,456.6) scale(1,1.04)" fill="#ff8000">O</text>
<text transform="translate(213.0,466.2) scale(1,1.04)" fill="#ff8000">O</text>
<text transform="translate(213.0,475.8) scale(1,1.04)" fill="#ff8000">O</text>
<text transform="translate(213.0,485.5) scale(1,1.04)" fill="#ff8000">O</text>
<text transform="translate(222.4,398.9) scale(1,1.04)" fill="#00ff00">P</text>
<text transform="translate(222.4,408.5) scale(1,1.04)" fill="#00ff00">P</text>
<text transform="translate(222.4,418.1) scale(1,1.04)" fill="#00ff00">P</text>
<text transform="translate(222.4,427.7) scale(1,1.04)" fill="#00ff00">P</text>
<text transform="translate(222.4,437.4) scale(1,1.04)" fill="#00ff00">P</text>
<text transform="translate(222.4,447.0) scale(1,1.04)" fill="#00ff00">P</text>
<text transform="translate(222.4,456.6) scale(1,1.04)" fill="#00ff00">P</text>
<text transform="translate(222.4,466.2) scale(1,1.04)" fill="#00ffff">P</text>
<text transform="translate(222.4,475.8) scale(1,1.04)" fill="#00ff00">P</text>
<text transform="translate(233.0,398.9) scale(1,1.04)" fill="#00ff00">Q</text>
<text transform="translate(233.0,408.5) scale(1,1.04)" fill="#00ff00">Q</text>
<text transform="translate(233.0,418.1) scale(1,1.04)" fill="#00ff00">Q</text>
<text transform="translate(233.0,427.7) scale(1,1.04)" fill="#00ffff">Q</text>
<text transform="translate(233.0,437.4) scale(1,1.04)" fill="#00ff00">Q</text>
<text transform="translate(242.4,379.6) scale(1,1.04)" fill="#00ff00">R</text>
<text transform="translate(242.4,389.3) scale(1,1.04)" fill="#00ff00">R</text>
<text transform="translate(242.4,398.9) scale(1,1.04)" fill="#00ff00">R</text>
<text transform="translate(242.4,408.5) scale(1,1.04)" fill="#00ffff">R</text>
<text transform="translate(252.6,370.0) scale(1,1.04)" fill="#ff0080">T</text>
<text transform="translate(252.6,379.6) scale(1,1.04)" fill="#ff0080">T</text>
<text transform="translate(252.6,389.3) scale(1,1.04)" fill="#00ffff">T</text>
<text transform="translate(252.6,398.9) scale(1,1.04)" fill="#ff0080">T</text>
<text transform="translate(252.6,408.5) scale(1,1.04)" fill="#ff0080">T</text>
<text transform="translate(252.6,418.1) scale(1,1.04)" fill="#ff0080">T</text>
<text transform="translate(252.6,427.7) scale(1,1.04)" fill="#ff0080">T</text>
<text transform="translate(252.6,437.4) scale(1,1.04)" fill="#ff0080">T</text>
<text transform="translate(252.6,447.0) scale(1,1.04)" fill="#ff0080">T</text>
<text transform="translate(262.8,408.5) scale(1,1.04)" fill="#ff0080">U</text>
<text transform="translate(262.8,418.1) scale(1,1.04)" fill="#ff0080">U</text>
<text transform="translate(262.8,427.7) scale(1,1.04)" fill="#ff0080">U</text>
<text transform="translate(262.8,437.4) scale(1,1.04)" fill="#00ffff">U</text>
<text transform="translate(262.8,447.0) scale(1,1.04)" fill="#ff0080">U</text>
<text transform="translate(262.8,456.6) scale(1,1.04)" fill="#ff0080">U</text>
<text transform="translate(262.8,466.2) scale(1,1.04)" fill="#ff0080">U</text>
<text transform="translate(272.6,389.3) scale(1,1.04)" fill="#ff0080">V</text>
<text transform="translate(272.6,398.9) scale(1,1.04)" fill="#ff0080">V</text>
<text transform="translate(272.6,408.5) scale(1,1.04)" fill="#00ffff">V</text>
<text transform="translate(272.6,418.1) scale(1,1.04)" fill="#ff0080">V</text>
<text transform="translate(272.6,427.7) scale(1,1.04)" fill="#ff0080">V</text>
<text transform="translate(272.6,437.4) scale(1,1.04)" fill="#ff0080">V</text>
<text transform="translate(281.8,389.3) scale(1,1.04)" fill="#9a10ff">W</text>
<text transform="translate(281.8,398.9) scale(1,1.04)" fill="#9a10ff">W</text>
<text transform="translate(281.8,408.5) scale(1,1.04)" fill="#00ffff">W</text>
<text transform="translate(281.8,418.1) scale(1,1.04)" fill="#9a10ff">W</text>
<text transform="translate(292.3,389.3) scale(1,1.04)" fill="#ff0000">X</text>
<text transform="translate(292.3,398.9) scale(1,1.04)" fill="#00ffff">X</text>
<text transform="translate(292.3,408.5) scale(1,1.04)" fill="#ff0000">X</text>
<text transform="translate(292.3,418.1) scale(1,1.04)" fill="#ff0000">X</text>
<text transform="translate(292.3,427.7) scale(1,1.04)" fill="#ff0000">X</text>
<text transform="translate(292.3,437.4) scale(1,1.04)" fill="#ff0000">X</text>
<text transform="translate(292.3,447.0) scale(1,1.04)" fill="#ff0000">X</text>
<text transform="translate(292.3,456.6) scale(1,1.04)" fill="#ff0000">X</text>
<text transform="translate(292.3,466.2) scale(1,1.04)" fill="#ff0000">X</text>
<text transform="translate(292.3,475.8) scale(1,1.04)" fill="#ff0000">X</text>
<text transform="translate(292.3,485.5) scale(1,1.04)" fill="#ff0000">X</text>
<text transform="translate(301.8,447.0) scale(1,1.02)" fill="#ff8000">a</text>
<text transform="translate(301.8,456.6) scale(1,1.02)" fill="#00ffff">a</text>
<text transform="translate(301.8,466.2) scale(1,1.02)" fill="#ff8000">a</text>
<text transform="translate(301.8,475.8) scale(1,1.02)" fill="#ff8000">a</text>
<text transform="translate(301.8,485.5) scale(1,1.02)" fill="#ff8000">a</text>
<text transform="translate(301.8,495.1) scale(1,1.02)" fill="#ff8000">a</text>
<text transform="translate(301.8,504.7) scale(1,1.02)" fill="#ff8000">a</text>
<text transform="translate(301.8,514.3) scale(1,1.02)" fill="#ff8000">a</text>
<text transform="translate(301.8,523.9) scale(1,1.02)" fill="#ff8000">a</text>
<text transform="translate(301.8,533.6) scale(1,1.02)" fill="#ff8000">a</text>
<text transform="translate(301.8,543.2) scale(1,1.02)" fill="#ff8000">a</text>
<text transform="translate(301.8,552.8) scale(1,1.02)" fill="#ff8000">a</text>
<text transform="translate(301.8,562.4) scale(1,1.02)" fill="#ff8000">a</text>
<text transform="translate(301.8,572.0) scale(1,1.02)" fill="#ff8000">a</text>
<text transform="translate(301.8,581.7) scale(1,1.02)" fill="#ff8000">a</text>
<text transform="translate(301.8,591.3) scale(1,1.02)" fill="#ff8000">a</text>
<text transform="translate(301.8,600.9) scale(1,1.02)" fill="#ff8000">a</text>
<text transform="translate(301.8,610.5) scale(1,1.02)" fill="#ff8000">a</text>
<text transform="translate(301.8,620.1) scale(1,1.02)" fill="#ff8000">a</text>
<text transform="translate(301.8,629.8) scale(1,1.02)" fill="#ff8000">a</text>
<text transform="translate(301.8,639.4) scale(1,1.02)" fill="#0000ff">a</text>
<text transform="translate(301.8,649.0) scale(1,1.02)" fill="#ff8000">a</text>
<text transform="translate(301.8,658.6) scale(1,1.02)" fill="#ff8000">a</text>
<text transform="translate(301.8,668.2) scale(1,1.02)" fill="#ff8000">a</text>
<text transform="translate(301.8,677.9) scale(1,1.02)" fill="#ff8000">a</text>
<text transform="translate(312.6,620.1) scale(1,1.1)" fill="#ffff00">b</text>
<text transform="translate(312.6,629.8) scale(1,1.1)" fill="#00ffff">b</text>
<text transform="translate(312.6,639.4) scale(1,1.1)" fill="#ffff00">b</text>
<text transform="translate(312.6,649.0) scale(1,1.1)" fill="#ffff00">b</text>
<text transform="translate(312.6,658.6) scale(1,1.1)" fill="#ffff00">b</text>
<text transform="translate(312.6,668.2) scale(1,1.1)" fill="#ffff00">b</text>
<text transform="translate(312.6,677.9) scale(1,1.1)" fill="#ffff00">b</text>
<text transform="translate(312.6,687.5) scale(1,1.1)" fill="#ffff00">b</text>
<text transform="translate(312.6,697.1) scale(1,1.1)" fill="#ffff00">b</text>
<text transform="translate(312.6,706.7) scale(1,1.1)" fill="#ffff00">b</text>
<text transform="translate(312.6,716.3) scale(1,1.1)" fill="#ffff00">b</text>
<text transform="translate(312.6,726.0) scale(1,1.1)" fill="#ffff00">b</text>
<text transform="translate(322.0,620.1) scale(1,1.02)" fill="#00ff00">c</text>
<text transform="translate(322.0,629.8) scale(1,1.02)" fill="#00ff00">c</text>
<text transform="translate(322.0,639.4) scale(1,1.02)" fill="#00ff00">c</text>
<text transform="translate(322.0,649.0) scale(1,1.02)" fill="#00ff00">c</text>
<text transform="translate(322.0,658.6) scale(1,1.02)" fill="#00ff00">c</text>
<text transform="translate(322.0,668.2) scale(1,1.02)" fill="#00ff00">c</text>
<text transform="translate(322.0,677.9) scale(1,1.02)" fill="#00ffff">c</text>
<text transform="translate(322.0,687.5) scale(1,1.02)" fill="#00ff00">c</text>
<text transform="translate(322.0,697.1) scale(1,1.02)" fill="#00ff00">c</text>
<text transform="translate(332.3,639.4) scale(1,1.1)" fill="#1a6cf0">d</text>
<text transform="translate(332.3,649.0) scale(1,1.1)" fill="#1a6cf0">d</text>
<text transform="translate(332.3,658.6) scale(1,1.1)" fill="#1a6cf0">d</text>
<text transform="translate(332.3,668.2) scale(1,1.1)" fill="#1a6cf0">d</text>
<text transform="translate(332.3,677.9) scale(1,1.1)" fill="#1a6cf0">d</text>
<text transform="translate(332.3,687.5) scale(1,1.1)" fill="#1a6cf0">d</text>
<text transform="translate(332.3,697.1) scale(1,1.1)" fill="#00ffff">d</text>
<text transform="translate(341.6,629.8) scale(1,1.02)" fill="#9a10ff">e</text>
<text transform="translate(341.6,639.4) scale(1,1.02)" fill="#9a10ff">e</text>
<text transform="translate(341.6,649.0) scale(1,1.02)" fill="#9a10ff">e</text>
<text transform="translate(341.6,658.6) scale(1,1.02)" fill="#00ffff">e</text>
<text transform="translate(341.6,668.2) scale(1,1.02)" fill="#9a10ff">e</text>
<text transform="translate(341.6,677.9) scale(1,1.02)" fill="#9a10ff">e</text>
<text transform="translate(341.6,687.5) scale(1,1.02)" fill="#9a10ff">e</text>
<text transform="translate(341.6,697.1) scale(1,1.02)" fill="#9a10ff">e</text>
<text transform="translate(352.6,649.0) scale(1,1.1)" fill="#ffffff">f</text>
<text transform="translate(352.6,658.6) scale(1,1.1)" fill="#ffffff">f</text>
<text transform="translate(352.6,668.2) scale(1,1.1)" fill="#ffffff">f</text>
<text transform="translate(352.6,677.9) scale(1,1.1)" fill="#00ffff">f</text>
<text transform="translate(352.6,687.5) scale(1,1.1)" fill="#ffffff">f</text>
<text transform="translate(362.6,658.6) scale(1,1.05)" fill="#ffffff">g</text>
<text transform="translate(362.6,668.2) scale(1,1.05)" fill="#00ffff">g</text>
<text transform="translate(362.6,677.9) scale(1,1.05)" fill="#ffffff">g</text>
<text transform="translate(362.6,687.5) scale(1,1.05)" fill="#ffffff">g</text>
<text transform="translate(371.9,620.1) scale(1,1.1)" fill="#ff8000">h</text>
<text transform="translate(371.9,629.8) scale(1,1.1)" fill="#ff8000">h</text>
<text transform="translate(371.9,639.4) scale(1,1.1)" fill="#ff8000">h</text>
<text transform="translate(371.9,649.0) scale(1,1.1)" fill="#ff8000">h</text>
<text transform="translate(371.9,658.6) scale(1,1.1)" fill="#ff8000">h</text>
<text transform="translate(371.9,668.2) scale(1,1.1)" fill="#ff8000">h</text>
<text transform="translate(371.9,677.9) scale(1,1.1)" fill="#ff8000">h</text>
<text transform="translate(371.9,687.5) scale(1,1.1)" fill="#00ffff">h</text>
<text transform="translate(371.9,697.1) scale(1,1.1)" fill="#ff8000">h</text>
<text transform="translate(381.6,523.9) scale(1,1.1)" fill="#ff8000">i</text>
<text transform="translate(381.6,533.6) scale(1,1.1)" fill="#ff8000">i</text>
<text transform="translate(381.6,543.2) scale(1,1.1)" fill="#ff8000">i</text>
<text transform="translate(381.6,552.8) scale(1,1.1)" fill="#ff8000">i</text>
<text transform="translate(381.6,562.4) scale(1,1.1)" fill="#ff8000">i</text>
<text transform="translate(381.6,572.0) scale(1,1.1)" fill="#ff8000">i</text>
<text transform="translate(381.6,581.7) scale(1,1.1)" fill="#ff8000">i</text>
<text transform="translate(381.6,591.3) scale(1,1.1)" fill="#ff8000">i</text>
<text transform="translate(381.6,600.9) scale(1,1.1)" fill="#ff8000">i</text>
<text transform="translate(381.6,610.5) scale(1,1.1)" fill="#ff8000">i</text>
<text transform="translate(381.6,620.1) scale(1,1.1)" fill="#ff8000">i</text>
<text transform="translate(381.6,629.8) scale(1,1.1)" fill="#00ffff">i</text>
<text transform="translate(381.6,639.4) scale(1,1.1)" fill="#ff8000">i</text>
<text transform="translate(381.6,649.0) scale(1,1.1)" fill="#ff8000">i</text>
<text transform="translate(391.2,533.6) scale(1,1.1)" fill="#ff8000">j</text>
<text transform="translate(391.2,543.2) scale(1,1.1)" fill="#00ffff">j</text>
<text transform="translate(391.2,552.8) scale(1,1.1)" fill="#ff8000">j</text>
<text transform="translate(391.2,562.4) scale(1,1.1)" fill="#ff8000">j</text>
<text transform="translate(391.2,572.0) scale(1,1.1)" fill="#ff8000">j</text>
<text transform="translate(391.2,581.7) scale(1,1.1)" fill="#ff8000">j</text>
<text transform="translate(391.2,591.3) scale(1,1.1)" fill="#ff8000">j</text>
<text transform="translate(391.2,600.9) scale(1,1.1)" fill="#ff8000">j</text>
<text transform="translate(391.2,610.5) scale(1,1.1)" fill="#ff8000">j</text>
<text transform="translate(391.2,620.1) scale(1,1.1)" fill="#ff8000">j</text>
<text transform="translate(391.2,629.8) scale(1,1.1)" fill="#ff8000">j</text>
<text transform="translate(391.2,639.4) scale(1,1.1)" fill="#ff8000">j</text>
<text transform="translate(402.0,629.8) scale(1,1.1)" fill="#00ffff">k</text>
<text transform="translate(402.0,639.4) scale(1,1.1)" fill="#00ff00">k</text>
<text transform="translate(402.0,649.0) scale(1,1.1)" fill="#00ff00">k</text>
<text transform="translate(402.0,658.6) scale(1,1.1)" fill="#00ff00">k</text>
<text transform="translate(402.0,668.2) scale(1,1.1)" fill="#00ff00">k</text>
<text transform="translate(402.0,677.9) scale(1,1.1)" fill="#00ff00">k</text>
<text transform="translate(402.0,687.5) scale(1,1.1)" fill="#00ff00">k</text>
<text transform="translate(402.0,697.1) scale(1,1.1)" fill="#00ff00">k</text>
<text transform="translate(402.0,706.7) scale(1,1.1)" fill="#00ff00">k</text>
<text transform="translate(402.0,716.3) scale(1,1.1)" fill="#00ff00">k</text>
<text transform="translate(402.0,726.0) scale(1,1.1)" fill="#00ff00">k</text>
<text transform="translate(402.0,735.6) scale(1,1.1)" fill="#00ff00">k</text>
<text transform="translate(402.0,745.2) scale(1,1.1)" fill="#00ff00">k</text>
<text transform="translate(402.0,754.8) scale(1,1.1)" fill="#00ff00">k</text>
<text transform="translate(402.0,764.4) scale(1,1.1)" fill="#00ff00">k</text>
<text transform="translate(402.0,774.1) scale(1,1.1)" fill="#00ff00">k</text>
<text transform="translate(402.0,783.7) scale(1,1.1)" fill="#00ff00">k</text>
<text transform="translate(402.0,793.3) scale(1,1.1)" fill="#00ff00">k</text>
<text transform="translate(402.0,802.9) scale(1,1.1)" fill="#00ff00">k</text>
<text transform="translate(402.0,812.5) scale(1,1.1)" fill="#00ff00">k</text>
<text transform="translate(402.0,822.2) scale(1,1.1)" fill="#00ff00">k</text>
<text transform="translate(421.2,591.3) scale(1,1.02)" fill="#00ff00">m</text>
<text transform="translate(421.2,600.9) scale(1,1.02)" fill="#00ff00">m</text>
<text transform="translate(421.2,610.5) scale(1,1.02)" fill="#00ffff">m</text>
<text transform="translate(421.2,620.1) scale(1,1.02)" fill="#00ff00">m</text>
<text transform="translate(421.2,629.8) scale(1,1.02)" fill="#00ff00">m</text>
<text transform="translate(421.2,639.4) scale(1,1.02)" fill="#00ff00">m</text>
<text transform="translate(421.2,649.0) scale(1,1.02)" fill="#00ff00">m</text>
<text transform="translate(421.2,658.6) scale(1,1.02)" fill="#00ff00">m</text>
<text transform="translate(421.2,668.2) scale(1,1.02)" fill="#00ff00">m</text>
<text transform="translate(421.2,677.9) scale(1,1.02)" fill="#00ff00">m</text>
<text transform="translate(421.2,687.5) scale(1,1.02)" fill="#00ff00">m</text>
<text transform="translate(421.2,697.1) scale(1,1.02)" fill="#00ff00">m</text>
<text transform="translate(421.2,706.7) scale(1,1.02)" fill="#00ff00">m</text>
<text transform="translate(421.2,716.3) scale(1,1.02)" fill="#00ff00">m</text>
<text transform="translate(421.2,726.0) scale(1,1.02)" fill="#00ff00">m</text>
<text transform="translate(421.2,735.6) scale(1,1.02)" fill="#00ff00">m</text>
<text transform="translate(421.2,745.2) scale(1,1.02)" fill="#00ff00">m</text>
<text transform="translate(421.2,754.8) scale(1,1.02)" fill="#00ff00">m</text>
<text transform="translate(421.2,764.4) scale(1,1.02)" fill="#00ff00">m</text>
<text transform="translate(421.2,774.1) scale(1,1.02)" fill="#00ff00">m</text>
<text transform="translate(421.2,783.7) scale(1,1.02)" fill="#00ff00">m</text>
<text transform="translate(421.2,793.3) scale(1,1.02)" fill="#00ff00">m</text>
<text transform="translate(421.2,802.9) scale(1,1.02)" fill="#00ff00">m</text>
<text transform="translate(431.2,639.4) scale(1,1.02)" fill="#ff0080">n</text>
<text transform="translate(431.2,649.0) scale(1,1.02)" fill="#ff0080">n</text>
<text transform="translate(431.2,658.6) scale(1,1.02)" fill="#ff0080">n</text>
<text transform="translate(431.2,668.2) scale(1,1.02)" fill="#ff0080">n</text>
<text transform="translate(431.2,677.9) scale(1,1.02)" fill="#ff0080">n</text>
<text transform="translate(431.2,687.5) scale(1,1.02)" fill="#00ffff">n</text>
<text transform="translate(431.2,697.1) scale(1,1.02)" fill="#ff0080">n</text>
<text transform="translate(431.2,706.7) scale(1,1.02)" fill="#ff0080">n</text>
<text transform="translate(431.2,716.3) scale(1,1.02)" fill="#ff0080">n</text>
<text transform="translate(431.2,726.0) scale(1,1.02)" fill="#ff0080">n</text>
<text transform="translate(431.2,735.6) scale(1,1.02)" fill="#ff0080">n</text>
<text transform="translate(431.2,745.2) scale(1,1.02)" fill="#ff0080">n</text>
<text transform="translate(431.2,754.8) scale(1,1.02)" fill="#ff0080">n</text>
<text transform="translate(442.8,706.7) scale(1,1.02)" fill="#ff0080">o</text>
<text transform="translate(442.8,716.3) scale(1,1.02)" fill="#ff0080">o</text>
<text transform="translate(442.8,726.0) scale(1,1.02)" fill="#00ffff">o</text>
<text transform="translate(442.8,735.6) scale(1,1.02)" fill="#ff0080">o</text>
<text transform="translate(442.8,745.2) scale(1,1.02)" fill="#ff0080">o</text>
<text transform="translate(442.8,754.8) scale(1,1.02)" fill="#ff0080">o</text>
<text transform="translate(442.8,764.4) scale(1,1.02)" fill="#ff0080">o</text>
<text transform="translate(442.8,774.1) scale(1,1.02)" fill="#ff0080">o</text>
<text transform="translate(442.8,783.7) scale(1,1.02)" fill="#ff0080">o</text>
<text transform="translate(442.8,793.3) scale(1,1.02)" fill="#ff0080">o</text>
<text transform="translate(442.8,802.9) scale(1,1.02)" fill="#ff0080">o</text>
<text transform="translate(452.6,658.6) scale(1,1.05)" fill="#ff0080">p</text>
<text transform="translate(452.6,668.2) scale(1,1.05)" fill="#ff0080">p</text>
<text transform="translate(452.6,677.9) scale(1,1.05)" fill="#ff0080">p</text>
<text transform="translate(452.6,687.5) scale(1,1.05)" fill="#ff0080">p</text>
<text transform="translate(452.6,697.1) scale(1,1.05)" fill="#ff0080">p</text>
<text transform="translate(452.6,706.7) scale(1,1.05)" fill="#ff0080">p</text>
<text transform="translate(452.6,716.3) scale(1,1.05)" fill="#ff0080">p</text>
<text transform="translate(452.6,726.0) scale(1,1.05)" fill="#00ffff">p</text>
<text transform="translate(452.6,735.6) scale(1,1.05)" fill="#ff0080">p</text>
<text transform="translate(452.6,745.2) scale(1,1.05)" fill="#ff0080">p</text>
<text transform="translate(452.6,754.8) scale(1,1.05)" fill="#ff0080">p</text>
<text transform="translate(462.6,687.5) scale(1,1.05)" fill="#9a10ff">q</text>
<text transform="translate(462.6,697.1) scale(1,1.05)" fill="#00ffff">q</text>
<text transform="translate(462.6,706.7) scale(1,1.05)" fill="#9a10ff">q</text>
<text transform="translate(462.6,716.3) scale(1,1.05)" fill="#9a10ff">q</text>
<text transform="translate(462.6,726.0) scale(1,1.05)" fill="#9a10ff">q</text>
<text transform="translate(462.6,735.6) scale(1,1.05)" fill="#9a10ff">q</text>
<text transform="translate(462.6,745.2) scale(1,1.05)" fill="#9a10ff">q</text>
<text transform="translate(462.6,754.8) scale(1,1.05)" fill="#9a10ff">q</text>
<text transform="translate(462.6,764.4) scale(1,1.05)" fill="#9a10ff">q</text>
<text transform="translate(462.6,774.1) scale(1,1.05)" fill="#9a10ff">q</text>
<text transform="translate(462.6,783.7) scale(1,1.05)" fill="#9a10ff">q</text>
<text transform="translate(462.6,793.3) scale(1,1.05)" fill="#9a10ff">q</text>
<text transform="translate(462.6,802.9) scale(1,1.05)" fill="#9a10ff">q</text>
<text transform="translate(471.9,639.4) scale(1,1.02)" fill="#ff0000">r</text>
<text transform="translate(471.9,649.0) scale(1,1.02)" fill="#ff0000">r</text>
<text transform="translate(471.9,658.6) scale(1,1.02)" fill="#ff0000">r</text>
<text transform="translate(471.9,668.2) scale(1,1.02)" fill="#ff0000">r</text>
<text transform="translate(471.9,677.9) scale(1,1.02)" fill="#ff0000">r</text>
<text transform="translate(471.9,687.5) scale(1,1.02)" fill="#ff0000">r</text>
<text transform="translate(471.9,697.1) scale(1,1.02)" fill="#ff0000">r</text>
<text transform="translate(471.9,706.7) scale(1,1.02)" fill="#ff0000">r</text>
<text transform="translate(471.9,716.3) scale(1,1.02)" fill="#ff0000">r</text>
<text transform="translate(471.9,726.0) scale(1,1.02)" fill="#ff0000">r</text>
<text transform="translate(471.9,735.6) scale(1,1.02)" fill="#00ffff">r</text>
<text transform="translate(471.9,745.2) scale(1,1.02)" fill="#ff0000">r</text>
<text transform="translate(471.9,754.8) scale(1,1.02)" fill="#ff0000">r</text>
<text transform="translate(471.9,764.4) scale(1,1.02)" fill="#ff0000">r</text>
<text transform="translate(482.5,591.3) scale(1,1.02)" fill="#ff8000">s</text>
<text transform="translate(482.5,600.9) scale(1,1.02)" fill="#ff8000">s</text>
<text transform="translate(482.5,610.5) scale(1,1.02)" fill="#ff8000">s</text>
<text transform="translate(482.5,620.1) scale(1,1.02)" fill="#ff8000">s</text>
<text transform="translate(482.5,629.8) scale(1,1.02)" fill="#ff8000">s</text>
<text transform="translate(482.5,639.4) scale(1,1.02)" fill="#ff8000">s</text>
<text transform="translate(482.5,649.0) scale(1,1.02)" fill="#ff8000">s</text>
<text transform="translate(482.5,658.6) scale(1,1.02)" fill="#ff8000">s</text>
<text transform="translate(482.5,668.2) scale(1,1.02)" fill="#ff8000">s</text>
<text transform="translate(482.5,677.9) scale(1,1.02)" fill="#ff8000">s</text>
<text transform="translate(482.5,687.5) scale(1,1.02)" fill="#ff8000">s</text>
<text transform="translate(482.5,697.1) scale(1,1.02)" fill="#ff8000">s</text>
<text transform="translate(482.5,706.7) scale(1,1.02)" fill="#ff8000">s</text>
<text transform="translate(482.5,716.3) scale(1,1.02)" fill="#ff8000">s</text>
<text transform="translate(482.5,726.0) scale(1,1.02)" fill="#00ffff">s</text>
<text transform="translate(482.5,735.6) scale(1,1.02)" fill="#ff8000">s</text>
<text transform="translate(482.5,745.2) scale(1,1.02)" fill="#ff8000">s</text>
<text transform="translate(482.5,754.8) scale(1,1.02)" fill="#ff8000">s</text>
<text transform="translate(482.5,764.4) scale(1,1.02)" fill="#ff8000">s</text>
<text transform="translate(492.5,600.9) scale(1,1.02)" fill="#ffff00">t</text>
<text transform="translate(492.5,610.5) scale(1,1.02)" fill="#ffff00">t</text>
<text transform="translate(492.5,620.1) scale(1,1.02)" fill="#ffff00">t</text>
<text transform="translate(492.5,629.8) scale(1,1.02)" fill="#ffff00">t</text>
<text transform="translate(492.5,639.4) scale(1,1.02)" fill="#ffff00">t</text>
<text transform="translate(492.5,649.0) scale(1,1.02)" fill="#ffff00">t</text>
<text transform="translate(492.5,658.6) scale(1,1.02)" fill="#ffff00">t</text>
<text transform="translate(492.5,668.2) scale(1,1.02)" fill="#ffff00">t</text>
<text transform="translate(492.5,677.9) scale(1,1.02)" fill="#00ffff">t</text>
<text transform="translate(501.9,543.2) scale(1,1.02)" fill="#00ff00">u</text>
<text transform="translate(501.9,552.8) scale(1,1.02)" fill="#00ff00">u</text>
<text transform="translate(501.9,562.4) scale(1,1.02)" fill="#00ff00">u</text>
<text transform="translate(501.9,572.0) scale(1,1.02)" fill="#00ff00">u</text>
<text transform="translate(501.9,581.7) scale(1,1.02)" fill="#00ff00">u</text>
<text transform="translate(501.9,591.3) scale(1,1.02)" fill="#00ff00">u</text>
<text transform="translate(501.9,600.9) scale(1,1.02)" fill="#00ff00">u</text>
<text transform="translate(501.9,610.5) scale(1,1.02)" fill="#00ff00">u</text>
<text transform="translate(501.9,620.1) scale(1,1.02)" fill="#00ff00">u</text>
<text transform="translate(501.9,629.8) scale(1,1.02)" fill="#00ff00">u</text>
<text transform="translate(501.9,639.4) scale(1,1.02)" fill="#00ff00">u</text>
<text transform="translate(501.9,649.0) scale(1,1.02)" fill="#00ffff">u</text>
<text transform="translate(501.9,658.6) scale(1,1.02)" fill="#00ff00">u</text>
<text transform="translate(512.0,504.7) scale(1,1.02)" fill="#1a6cf0">v</text>
<text transform="translate(512.0,514.3) scale(1,1.02)" fill="#1a6cf0">v</text>
<text transform="translate(512.0,523.9) scale(1,1.02)" fill="#1a6cf0">v</text>
<text transform="translate(512.0,533.6) scale(1,1.02)" fill="#1a6cf0">v</text>
<text transform="translate(512.0,543.2) scale(1,1.02)" fill="#1a6cf0">v</text>
<text transform="translate(512.0,552.8) scale(1,1.02)" fill="#00ffff">v</text>
<text transform="translate(512.0,562.4) scale(1,1.02)" fill="#1a6cf0">v</text>
<text transform="translate(512.0,572.0) scale(1,1.02)" fill="#1a6cf0">v</text>
<text transform="translate(512.0,581.7) scale(1,1.02)" fill="#1a6cf0">v</text>
<text transform="translate(512.0,591.3) scale(1,1.02)" fill="#1a6cf0">v</text>
<text transform="translate(512.0,600.9) scale(1,1.02)" fill="#1a6cf0">v</text>
<text transform="translate(512.0,610.5) scale(1,1.02)" fill="#1a6cf0">v</text>
<text transform="translate(522.0,523.9) scale(1,1.02)" fill="#9a10ff">w</text>
<text transform="translate(522.0,533.6) scale(1,1.02)" fill="#9a10ff">w</text>
<text transform="translate(522.0,543.2) scale(1,1.02)" fill="#9a10ff">w</text>
<text transform="translate(522.0,552.8) scale(1,1.02)" fill="#9a10ff">w</text>
<text transform="translate(522.0,562.4) scale(1,1.02)" fill="#9a10ff">w</text>
<text transform="translate(522.0,572.0) scale(1,1.02)" fill="#9a10ff">w</text>
<text transform="translate(522.0,581.7) scale(1,1.02)" fill="#00ffff">w</text>
<text transform="translate(522.0,591.3) scale(1,1.02)" fill="#9a10ff">w</text>
<text transform="translate(522.0,600.9) scale(1,1.02)" fill="#9a10ff">w</text>
<text transform="translate(522.0,610.5) scale(1,1.02)" fill="#9a10ff">w</text>
<text transform="translate(522.0,620.1) scale(1,1.02)" fill="#9a10ff">w</text>
<text transform="translate(532.0,437.4) scale(1,1.02)" fill="#ffffff">x</text>
<text transform="translate(532.0,447.0) scale(1,1.02)" fill="#ffffff">x</text>
<text transform="translate(532.0,456.6) scale(1,1.02)" fill="#ffffff">x</text>
<text transform="translate(532.0,466.2) scale(1,1.02)" fill="#ffffff">x</text>
<text transform="translate(532.0,475.8) scale(1,1.02)" fill="#ffffff">x</text>
<text transform="translate(532.0,485.5) scale(1,1.02)" fill="#ffffff">x</text>
<text transform="translate(532.0,495.1) scale(1,1.02)" fill="#ffffff">x</text>
<text transform="translate(532.0,504.7) scale(1,1.02)" fill="#ffffff">x</text>
<text transform="translate(532.0,514.3) scale(1,1.02)" fill="#ffffff">x</text>
<text transform="translate(532.0,523.9) scale(1,1.02)" fill="#ffffff">x</text>
<text transform="translate(532.0,533.6) scale(1,1.02)" fill="#ffffff">x</text>
<text transform="translate(532.0,543.2) scale(1,1.02)" fill="#ffffff">x</text>
<text transform="translate(532.0,552.8) scale(1,1.02)" fill="#ffffff">x</text>
<text transform="translate(532.0,562.4) scale(1,1.02)" fill="#ffffff">x</text>
<text transform="translate(532.0,572.0) scale(1,1.02)" fill="#00ffff">x</text>
<text transform="translate(532.0,581.7) scale(1,1.02)" fill="#ffffff">x</text>
<text transform="translate(532.0,591.3) scale(1,1.02)" fill="#ffffff">x</text>
<text transform="translate(532.0,600.9) scale(1,1.02)" fill="#ffffff">x</text>
<text transform="translate(542.3,466.2) scale(1,1.04)" fill="#ffffff">A</text>
<text transform="translate(542.3,475.8) scale(1,1.04)" fill="#ffffff">A</text>
<text transform="translate(542.3,485.5) scale(1,1.04)" fill="#ffffff">A</text>
<text transform="translate(542.3,495.1) scale(1,1.04)" fill="#ffffff">A</text>
<text transform="translate(542.3,504.7) scale(1,1.04)" fill="#ffffff">A</text>
<text transform="translate(542.3,514.3) scale(1,1.04)" fill="#ffffff">A</text>
<text transform="translate(542.3,523.9) scale(1,1.04)" fill="#00ffff">A</text>
<text transform="translate(542.3,533.6) scale(1,1.04)" fill="#ffffff">A</text>
<text transform="translate(542.3,543.2) scale(1,1.04)" fill="#ffffff">A</text>
<text transform="translate(542.3,552.8) scale(1,1.04)" fill="#ffffff">A</text>
<text transform="translate(542.3,562.4) scale(1,1.04)" fill="#ffffff">A</text>
<text transform="translate(542.3,572.0) scale(1,1.04)" fill="#ffffff">A</text>
<text transform="translate(542.3,581.7) scale(1,1.04)" fill="#ffffff">A</text>
<text transform="translate(542.3,591.3) scale(1,1.04)" fill="#ffffff">A</text>
<text transform="translate(542.3,600.9) scale(1,1.04)" fill="#ffffff">A</text>
<text transform="translate(542.3,610.5) scale(1,1.04)" fill="#ffffff">A</text>
<text transform="translate(542.3,620.1) scale(1,1.04)" fill="#ffffff">A</text>
<text transform="translate(542.3,629.8) scale(1,1.04)" fill="#ffffff">A</text>
<text transform="translate(542.3,639.4) scale(1,1.04)" fill="#ffffff">A</text>
<text transform="translate(542.3,649.0) scale(1,1.04)" fill="#ffffff">A</text>
<text transform="translate(542.3,658.6) scale(1,1.04)" fill="#ffffff">A</text>
<text transform="translate(542.3,668.2) scale(1,1.04)" fill="#ffffff">A</text>
<text transform="translate(542.3,677.9) scale(1,1.04)" fill="#ffffff">A</text>
<text transform="translate(542.3,687.5) scale(1,1.04)" fill="#ffffff">A</text>
<text transform="translate(542.3,697.1) scale(1,1.04)" fill="#ffffff">A</text>
<text transform="translate(542.3,706.7) scale(1,1.04)" fill="#ffffff">A</text>
<text transform="translate(542.3,716.3) scale(1,1.04)" fill="#ffffff">A</text>
<text transform="translate(542.3,726.0) scale(1,1.04)" fill="#ffffff">A</text>
<text transform="translate(542.3,735.6) scale(1,1.04)" fill="#ffffff">A</text>
<text transform="translate(542.3,745.2) scale(1,1.04)" fill="#ffffff">A</text>
<text transform="translate(542.3,754.8) scale(1,1.04)" fill="#ffffff">A</text>
<text transform="translate(542.3,764.4) scale(1,1.04)" fill="#ffffff">A</text>
<text transform="translate(542.3,774.1) scale(1,1.04)" fill="#ffffff">A</text>
<text transform="translate(542.3,783.7) scale(1,1.04)" fill="#ffffff">A</text>
<text transform="translate(542.3,793.3) scale(1,1.04)" fill="#ffffff">A</text>
<text transform="translate(552.3,523.9) scale(1,1.04)" fill="#ff8000">B</text>
<text transform="translate(552.3,533.6) scale(1,1.04)" fill="#ff8000">B</text>
<text transform="translate(552.3,543.2) scale(1,1.04)" fill="#ff8000">B</text>
<text transform="translate(552.3,552.8) scale(1,1.04)" fill="#ff8000">B</text>
<text transform="translate(552.3,562.4) scale(1,1.04)" fill="#ff8000">B</text>
<text transform="translate(552.3,572.0) scale(1,1.04)" fill="#ff8000">B</text>
<text transform="translate(552.3,581.7) scale(1,1.04)" fill="#ff8000">B</text>
<text transform="translate(552.3,591.3) scale(1,1.04)" fill="#00ffff">B</text>
<text transform="translate(552.3,600.9) scale(1,1.04)" fill="#ff8000">B</text>
<text transform="translate(552.3,610.5) scale(1,1.04)" fill="#ff8000">B</text>
<text transform="translate(552.3,620.1) scale(1,1.04)" fill="#ff8000">B</text>
<text transform="translate(552.3,629.8) scale(1,1.04)" fill="#ff8000">B</text>
<text transform="translate(552.3,639.4) scale(1,1.04)" fill="#ff8000">B</text>
<text transform="translate(552.3,649.0) scale(1,1.04)" fill="#ff8000">B</text>
<text transform="translate(552.3,658.6) scale(1,1.04)" fill="#ff8000">B</text>
<text transform="translate(552.3,668.2) scale(1,1.04)" fill="#ff8000">B</text>
<text transform="translate(552.3,677.9) scale(1,1.04)" fill="#ff8000">B</text>
<text transform="translate(552.3,687.5) scale(1,1.04)" fill="#ff8000">B</text>
<text transform="translate(562.6,658.6) scale(1,1.04)" fill="#ff8000">C</text>
<text transform="translate(562.6,668.2) scale(1,1.04)" fill="#ff8000">C</text>
<text transform="translate(562.6,677.9) scale(1,1.04)" fill="#00ffff">C</text>
<text transform="translate(562.6,687.5) scale(1,1.04)" fill="#ff8000">C</text>
<text transform="translate(562.6,697.1) scale(1,1.04)" fill="#ff8000">C</text>
<text transform="translate(562.6,706.7) scale(1,1.04)" fill="#ff8000">C</text>
<text transform="translate(562.6,716.3) scale(1,1.04)" fill="#ff8000">C</text>
<text transform="translate(562.6,726.0) scale(1,1.04)" fill="#ff8000">C</text>
<text transform="translate(562.6,735.6) scale(1,1.04)" fill="#ff8000">C</text>
<text transform="translate(562.6,745.2) scale(1,1.04)" fill="#ff8000">C</text>
<text transform="translate(562.6,754.8) scale(1,1.04)" fill="#ff8000">C</text>
<text transform="translate(562.6,764.4) scale(1,1.04)" fill="#ff8000">C</text>
<text transform="translate(562.6,774.1) scale(1,1.04)" fill="#ff8000">C</text>
<text transform="translate(562.6,783.7) scale(1,1.04)" fill="#ff8000">C</text>
<text transform="translate(562.6,793.3) scale(1,1.04)" fill="#ff8000">C</text>
<text transform="translate(562.6,802.9) scale(1,1.04)" fill="#ff8000">C</text>
<text transform="translate(562.6,812.5) scale(1,1.04)" fill="#ff8000">C</text>
<text transform="translate(562.6,822.2) scale(1,1.04)" fill="#ff8000">C</text>
<text transform="translate(562.6,831.8) scale(1,1.04)" fill="#ff8000">C</text>
<text transform="translate(562.6,841.4) scale(1,1.04)" fill="#ff8000">C</text>
<text transform="translate(562.6,851.0) scale(1,1.04)" fill="#ff8000">C</text>
<text transform="translate(562.6,860.6) scale(1,1.04)" fill="#ff8000">C</text>
<text transform="translate(562.6,870.3) scale(1,1.04)" fill="#ff8000">C</text>
<text transform="translate(572.0,668.2) scale(1,1.04)" fill="#ff8000">D</text>
<text transform="translate(572.0,677.9) scale(1,1.04)" fill="#00ffff">D</text>
<text transform="translate(572.0,687.5) scale(1,1.04)" fill="#ff8000">D</text>
<text transform="translate(572.0,697.1) scale(1,1.04)" fill="#ff8000">D</text>
<text transform="translate(572.0,706.7) scale(1,1.04)" fill="#ff8000">D</text>
<text transform="translate(572.0,716.3) scale(1,1.04)" fill="#ff8000">D</text>
<text transform="translate(572.0,726.0) scale(1,1.04)" fill="#ff8000">D</text>
<text transform="translate(572.0,735.6) scale(1,1.04)" fill="#ff8000">D</text>
<text transform="translate(572.0,745.2) scale(1,1.04)" fill="#ff8000">D</text>
<text transform="translate(572.0,754.8) scale(1,1.04)" fill="#ff8000">D</text>
<text transform="translate(572.0,764.4) scale(1,1.04)" fill="#ff8000">D</text>
<text transform="translate(572.0,774.1) scale(1,1.04)" fill="#ff8000">D</text>
<text transform="translate(572.0,783.7) scale(1,1.04)" fill="#ff8000">D</text>
<text transform="translate(572.0,793.3) scale(1,1.04)" fill="#ff8000">D</text>
<text transform="translate(572.0,802.9) scale(1,1.04)" fill="#ff8000">D</text>
<text transform="translate(572.0,812.5) scale(1,1.04)" fill="#ff8000">D</text>
<text transform="translate(572.0,822.2) scale(1,1.04)" fill="#ff8000">D</text>
<text transform="translate(572.0,831.8) scale(1,1.04)" fill="#ff8000">D</text>
<text transform="translate(572.0,841.4) scale(1,1.04)" fill="#ff8000">D</text>
<text transform="translate(572.0,851.0) scale(1,1.04)" fill="#ff8000">D</text>
<text transform="translate(572.0,860.6) scale(1,1.04)" fill="#ff8000">D</text>
<text transform="translate(572.0,870.3) scale(1,1.04)" fill="#ff8000">D</text>
<text transform="translate(572.0,879.9) scale(1,1.04)" fill="#ff8000">D</text>
<text transform="translate(572.0,889.5) scale(1,1.04)" fill="#ff8000">D</text>
<text transform="translate(572.0,899.1) scale(1,1.04)" fill="#ff8000">D</text>
<text transform="translate(582.0,764.4) scale(1,1.04)" fill="#00ff00">E</text>
<text transform="translate(582.0,774.1) scale(1,1.04)" fill="#00ff00">E</text>
<text transform="translate(582.0,783.7) scale(1,1.04)" fill="#00ffff">E</text>
<text transform="translate(582.0,793.3) scale(1,1.04)" fill="#00ff00">E</text>
<text transform="translate(582.0,802.9) scale(1,1.04)" fill="#00ff00">E</text>
<text transform="translate(582.0,812.5) scale(1,1.04)" fill="#00ff00">E</text>
<text transform="translate(582.0,822.2) scale(1,1.04)" fill="#00ff00">E</text>
<text transform="translate(582.0,831.8) scale(1,1.04)" fill="#00ff00">E</text>
<text transform="translate(582.0,841.4) scale(1,1.04)" fill="#00ff00">E</text>
<text transform="translate(582.0,851.0) scale(1,1.04)" fill="#00ff00">E</text>
<text transform="translate(582.0,860.6) scale(1,1.04)" fill="#00ff00">E</text>
<text transform="translate(582.0,870.3) scale(1,1.04)" fill="#00ff00">E</text>
<text transform="translate(582.0,879.9) scale(1,1.04)" fill="#00ff00">E</text>
<text transform="translate(592.1,726.0) scale(1,1.04)" fill="#00ff00">F</text>
<text transform="translate(592.1,735.6) scale(1,1.04)" fill="#00ff00">F</text>
<text transform="translate(592.1,745.2) scale(1,1.04)" fill="#00ff00">F</text>
<text transform="translate(592.1,754.8) scale(1,1.04)" fill="#00ff00">F</text>
<text transform="translate(592.1,764.4) scale(1,1.04)" fill="#00ff00">F</text>
<text transform="translate(592.1,774.1) scale(1,1.04)" fill="#00ffff">F</text>
<text transform="translate(592.1,783.7) scale(1,1.04)" fill="#00ff00">F</text>
<text transform="translate(592.1,793.3) scale(1,1.04)" fill="#00ff00">F</text>
<text transform="translate(592.1,802.9) scale(1,1.04)" fill="#00ff00">F</text>
<text transform="translate(592.1,812.5) scale(1,1.04)" fill="#00ff00">F</text>
<text transform="translate(602.2,745.2) scale(1,1.04)" fill="#00ff00">G</text>
<text transform="translate(602.2,754.8) scale(1,1.04)" fill="#00ff00">G</text>
<text transform="translate(602.2,764.4) scale(1,1.04)" fill="#00ff00">G</text>
<text transform="translate(602.2,774.1) scale(1,1.04)" fill="#00ff00">G</text>
<text transform="translate(602.2,783.7) scale(1,1.04)" fill="#00ff00">G</text>
<text transform="translate(602.2,793.3) scale(1,1.04)" fill="#00ff00">G</text>
<text transform="translate(602.2,802.9) scale(1,1.04)" fill="#00ffff">G</text>
<text transform="translate(612.2,745.2) scale(1,1.04)" fill="#ff0080">H</text>
<text transform="translate(612.2,754.8) scale(1,1.04)" fill="#ff0080">H</text>
<text transform="translate(612.2,764.4) scale(1,1.04)" fill="#ff0080">H</text>
<text transform="translate(612.2,774.1) scale(1,1.04)" fill="#ff0080">H</text>
<text transform="translate(612.2,783.7) scale(1,1.04)" fill="#00ffff">H</text>
<text transform="translate(612.2,793.3) scale(1,1.04)" fill="#ff0080">H</text>
<text transform="translate(612.2,802.9) scale(1,1.04)" fill="#ff0080">H</text>
<text transform="translate(612.2,812.5) scale(1,1.04)" fill="#ff0080">H</text>
<text transform="translate(612.2,822.2) scale(1,1.04)" fill="#ff0080">H</text>
<text transform="translate(612.2,831.8) scale(1,1.04)" fill="#ff0080">H</text>
<text transform="translate(612.2,841.4) scale(1,1.04)" fill="#ff0080">H</text>
<text transform="translate(621.6,572.0) scale(1,1.0)" fill="#ff0080">I</text>
<text transform="translate(621.6,581.7) scale(1,1.0)" fill="#ff0080">I</text>
<text transform="translate(621.6,591.3) scale(1,1.0)" fill="#ff0080">I</text>
<text transform="translate(621.6,600.9) scale(1,1.0)" fill="#ff0080">I</text>
<text transform="translate(621.6,610.5) scale(1,1.0)" fill="#ff0080">I</text>
<text transform="translate(621.6,620.1) scale(1,1.0)" fill="#ff0080">I</text>
<text transform="translate(621.6,629.8) scale(1,1.0)" fill="#ff0080">I</text>
<text transform="translate(621.6,639.4) scale(1,1.0)" fill="#ff0080">I</text>
<text transform="translate(621.6,649.0) scale(1,1.0)" fill="#ff0080">I</text>
<text transform="translate(621.6,658.6) scale(1,1.0)" fill="#ff0080">I</text>
<text transform="translate(621.6,668.2) scale(1,1.0)" fill="#ff0080">I</text>
<text transform="translate(621.6,677.9) scale(1,1.0)" fill="#ff0080">I</text>
<text transform="translate(621.6,687.5) scale(1,1.0)" fill="#ff0080">I</text>
<text transform="translate(621.6,697.1) scale(1,1.0)" fill="#ff0080">I</text>
<text transform="translate(621.6,706.7) scale(1,1.0)" fill="#ff0080">I</text>
<text transform="translate(621.6,716.3) scale(1,1.0)" fill="#ff0080">I</text>
<text transform="translate(621.6,726.0) scale(1,1.0)" fill="#ff0080">I</text>
<text transform="translate(621.6,735.6) scale(1,1.0)" fill="#ff0080">I</text>
<text transform="translate(621.6,745.2) scale(1,1.0)" fill="#ff0080">I</text>
<text transform="translate(621.6,754.8) scale(1,1.0)" fill="#00ffff">I</text>
<text transform="translate(621.6,764.4) scale(1,1.0)" fill="#ff0080">I</text>
<text transform="translate(621.6,774.1) scale(1,1.0)" fill="#ff0080">I</text>
</g>
<rect x="758.90" y="226.44" width="3.00" height="10.10" fill="#787878" />
<rect x="758.90" y="236.06" width="3.00" height="10.10" fill="#787878" />
<rect x="758.90" y="245.68" width="3.00" height="10.10" fill="#787878" />
<rect x="752.82" y="255.30" width="9.08" height="10.10" fill="#787878" />
<rect x="754.35" y="264.92" width="7.55" height="10.10" fill="#787878" />
<rect x="752.59" y="274.54" width="9.31" height="10.10" fill="#787878" />
<rect x="751.87" y="284.16" width="10.03" height="10.10" fill="#787878" />
<rect x="752.04" y="293.78" width="9.86" height="10.10" fill="#787878" />
<rect x="754.11" y="303.40" width="7.79" height="10.10" fill="#787878" />
<rect x="756.56" y="313.02" width="5.34" height="10.10" fill="#787878" />
<rect x="757.23" y="322.64" width="4.67" height="10.10" fill="#787878" />
<rect x="752.93" y="332.26" width="8.97" height="10.10" fill="#787878" />
<rect x="754.35" y="341.88" width="7.55" height="10.10" fill="#787878" />
<rect x="754.26" y="351.50" width="7.64" height="10.10" fill="#787878" />
<rect x="751.75" y="361.12" width="10.15" height="10.10" fill="#787878" />
<rect x="755.63" y="370.74" width="6.27" height="10.10" fill="#787878" />
<rect x="753.63" y="380.36" width="8.27" height="10.10" fill="#787878" />
<rect x="750.14" y="389.98" width="11.76" height="10.10" fill="#787878" />
<rect x="748.03" y="399.60" width="13.87" height="10.10" fill="#787878" />
<rect x="742.98" y="409.22" width="18.92" height="10.10" fill="#787878" />
<rect x="741.85" y="418.84" width="20.05" height="10.10" fill="#787878" />
<rect x="740.71" y="428.46" width="21.19" height="10.10" fill="#787878" />
<rect x="741.73" y="438.08" width="20.17" height="10.10" fill="#787878" />
<rect x="743.80" y="447.70" width="18.10" height="10.10" fill="#787878" />
<rect x="744.70" y="457.32" width="17.20" height="10.10" fill="#787878" />
<rect x="744.57" y="466.94" width="17.33" height="10.10" fill="#787878" />
<rect x="751.05" y="476.56" width="10.85" height="10.10" fill="#787878" />
<rect x="746.43" y="486.18" width="15.47" height="10.10" fill="#787878" />
<rect x="739.56" y="495.80" width="22.34" height="10.10" fill="#787878" />
<rect x="732.18" y="505.42" width="29.72" height="10.10" fill="#787878" />
<rect x="728.07" y="515.04" width="33.83" height="10.10" fill="#787878" />
<rect x="729.54" y="524.66" width="32.36" height="10.10" fill="#787878" />
<rect x="722.02" y="534.28" width="39.88" height="10.10" fill="#787878" />
<rect x="693.59" y="543.90" width="68.31" height="10.10" fill="#787878" />
<rect x="702.49" y="553.52" width="59.41" height="10.10" fill="#787878" />
<rect x="713.80" y="563.14" width="48.10" height="10.10" fill="#787878" />
<rect x="716.02" y="572.76" width="45.88" height="10.10" fill="#787878" />
<rect x="723.47" y="582.38" width="38.43" height="10.10" fill="#787878" />
<rect x="716.97" y="592.00" width="44.93" height="10.10" fill="#787878" />
<rect x="718.49" y="601.62" width="43.41" height="10.10" fill="#787878" />
<rect x="669.82" y="611.24" width="92.08" height="10.10" fill="#787878" />
<rect x="682.73" y="620.86" width="79.17" height="10.10" fill="#787878" />
<rect x="701.29" y="630.48" width="60.61" height="10.10" fill="#787878" />
<rect x="698.39" y="640.10" width="63.51" height="10.10" fill="#787878" />
<rect x="687.85" y="649.72" width="74.05" height="10.10" fill="#787878" />
<rect x="674.69" y="659.34" width="87.21" height="10.10" fill="#787878" />
<rect x="653.26" y="668.96" width="108.64" height="10.10" fill="#787878" />
<rect x="669.79" y="678.58" width="92.11" height="10.10" fill="#787878" />
<rect x="698.66" y="688.20" width="63.24" height="10.10" fill="#787878" />
<rect x="713.44" y="697.82" width="48.46" height="10.10" fill="#787878" />
<rect x="698.94" y="707.44" width="62.96" height="10.10" fill="#787878" />
<rect x="700.36" y="717.06" width="61.54" height="10.10" fill="#787878" />
<rect x="693.56" y="726.68" width="68.34" height="10.10" fill="#787878" />
<rect x="681.24" y="736.30" width="80.66" height="10.10" fill="#787878" />
<rect x="684.43" y="745.92" width="77.47" height="10.10" fill="#787878" />
<rect x="685.30" y="755.54" width="76.60" height="10.10" fill="#787878" />
<rect x="680.45" y="765.16" width="81.45" height="10.10" fill="#787878" />
<rect x="676.50" y="774.78" width="85.40" height="10.10" fill="#787878" />
<rect x="690.42" y="784.40" width="71.48" height="10.10" fill="#787878" />
<rect x="704.83" y="794.02" width="57.07" height="10.10" fill="#787878" />
<rect x="715.43" y="803.64" width="46.47" height="10.10" fill="#787878" />
<rect x="715.23" y="813.26" width="46.67" height="10.10" fill="#787878" />
<rect x="728.59" y="822.88" width="33.31" height="10.10" fill="#787878" />
<rect x="743.05" y="832.50" width="18.85" height="10.10" fill="#787878" />
<rect x="747.44" y="842.12" width="14.46" height="10.10" fill="#787878" />
<rect x="751.19" y="851.74" width="10.71" height="10.10" fill="#787878" />
<rect x="754.52" y="861.36" width="7.38" height="10.10" fill="#787878" />
<rect x="758.16" y="870.98" width="3.74" height="10.10" fill="#787878" />
<rect x="758.90" y="880.60" width="3.00" height="10.10" fill="#787878" />
<rect x="758.90" y="890.22" width="3.00" height="10.10" fill="#787878" />
<rect x="759.90" y="226.94" width="1.00" height="7.70" fill="#0000d0" />
<rect x="759.90" y="236.56" width="1.00" height="7.70" fill="#0000d0" />
<rect x="759.90" y="246.18" width="1.00" height="7.70" fill="#0000d0" />
<rect x="753.82" y="255.80" width="7.08" height="7.70" fill="#0000d0" />
<rect x="755.35" y="265.42" width="5.55" height="7.70" fill="#0000d0" />
<rect x="753.59" y="275.04" width="7.31" height="7.70" fill="#0000d0" />
<rect x="752.87" y="284.66" width="8.03" height="7.70" fill="#0000d0" />
<rect x="753.04" y="294.28" width="7.86" height="7.70" fill="#0000d0" />
<rect x="755.11" y="303.90" width="5.79" height="7.70" fill="#0000d0" />
<rect x="757.56" y="313.52" width="3.34" height="7.70" fill="#0000d0" />
<rect x="758.23" y="323.14" width="2.67" height="7.70" fill="#0000d0" />
<rect x="753.93" y="332.76" width="6.97" height="7.70" fill="#0000d0" />
<rect x="755.35" y="342.38" width="5.55" height="7.70" fill="#0000d0" />
<rect x="755.26" y="352.00" width="5.64" height="7.70" fill="#0000d0" />
<rect x="752.75" y="361.62" width="8.15" height="7.70" fill="#0000d0" />
<rect x="756.63" y="371.24" width="4.27" height="7.70" fill="#0000d0" />
<rect x="754.63" y="380.86" width="6.27" height="7.70" fill="#0000d0" />
<rect x="751.14" y="390.48" width="9.76" height="7.70" fill="#0000d0" />
<rect x="749.03" y="400.10" width="11.87" height="7.70" fill="#0000d0" />
<rect x="743.98" y="409.72" width="16.92" height="7.70" fill="#0000d0" />
<rect x="742.85" y="419.34" width="18.05" height="7.70" fill="#0000d0" />
<rect x="741.71" y="428.96" width="19.19" height="7.70" fill="#0000d0" />
<rect x="742.73" y="438.58" width="18.17" height="7.70" fill="#0000d0" />
<rect x="744.80" y="448.20" width="16.10" height="7.70" fill="#0000d0" />
<rect x="745.70" y="457.82" width="15.20" height="7.70" fill="#0000d0" />
<rect x="745.57" y="467.44" width="15.33" height="7.70" fill="#0000d0" />
<rect x="752.05" y="477.06" width="8.85" height="7.70" fill="#0000d0" />
<rect x="747.43" y="486.68" width="13.47" height="7.70" fill="#0000d0" />
<rect x="740.56" y="496.30" width="20.34" height="7.70" fill="#0000d0" />
<rect x="733.18" y="505.92" width="27.72" height="7.70" fill="#0000d0" />
<rect x="729.07" y="515.54" width="31.83" height="7.70" fill="#0000d0" />
<rect x="730.54" y="525.16" width="30.36" height="7.70" fill="#0000d0" />
<rect x="723.02" y="534.78" width="37.88" height="7.70" fill="#0000d0" />
<rect x="694.59" y="544.40" width="66.31" height="7.70" fill="#0000d0" />
<rect x="703.49" y="554.02" width="57.41" height="7.70" fill="#0000d0" />
<rect x="714.80" y="563.64" width="46.10" height="7.70" fill="#0000d0" />
<rect x="717.02" y="573.26" width="43.88" height="7.70" fill="#0000d0" />
<rect x="724.47" y="582.88" width="36.43" height="7.70" fill="#0000d0" />
<rect x="717.97" y="592.50" width="42.93" height="7.70" fill="#0000d0" />
<rect x="719.49" y="602.12" width="41.41" height="7.70" fill="#0000d0" />
<rect x="670.82" y="611.74" width="90.08" height="7.70" fill="#0000d0" />
<rect x="683.73" y="621.36" width="77.17" height="7.70" fill="#0000d0" />
<rect x="702.29" y="630.98" width="58.61" height="7.70" fill="#0000d0" />
<rect x="699.39" y="640.60" width="61.51" height="7.70" fill="#0000d0" />
<rect x="688.85" y="650.22" width="72.05" height="7.70" fill="#0000d0" />
<rect x="675.69" y="659.84" width="85.21" height="7.70" fill="#0000d0" />
<rect x="654.26" y="669.46" width="106.64" height="7.70" fill="#0000d0" />
<rect x="670.79" y="679.08" width="90.11" height="7.70" fill="#0000d0" />
<rect x="699.66" y="688.70" width="61.24" height="7.70" fill="#0000d0" />
<rect x="714.44" y="698.32" width="46.46" height="7.70" fill="#0000d0" />
<rect x="699.94" y="707.94" width="60.96" height="7.70" fill="#0000d0" />
<rect x="701.36" y="717.56" width="59.54" height="7.70" fill="#0000d0" />
<rect x="694.56" y="727.18" width="66.34" height="7.70" fill="#0000d0" />
<rect x="682.24" y="736.80" width="78.66" height="7.70" fill="#0000d0" />
<rect x="685.43" y="746.42" width="75.47" height="7.70" fill="#0000d0" />
<rect x="686.30" y="756.04" width="74.60" height="7.70" fill="#0000d0" />
<rect x="681.45" y="765.66" width="79.45" height="7.70" fill="#0000d0" />
<rect x="677.50" y="775.28" width="83.40" height="7.70" fill="#0000d0" />
<rect x="691.42" y="784.90" width="69.48" height="7.70" fill="#0000d0" />
<rect x="705.83" y="794.52" width="55.07" height="7.70" fill="#0000d0" />
<rect x="716.43" y="804.14" width="44.47" height="7.70" fill="#0000d0" />
<rect x="716.23" y="813.76" width="44.67" height="7.70" fill="#0000d0" />
<rect x="729.59" y="823.38" width="31.31" height="7.70" fill="#0000d0" />
<rect x="744.05" y="833.00" width="16.85" height="7.70" fill="#0000d0" />
<rect x="748.44" y="842.62" width="12.46" height="7.70" fill="#0000d0" />
<rect x="752.19" y="852.24" width="8.71" height="7.70" fill="#0000d0" />
<rect x="755.52" y="861.86" width="5.38" height="7.70" fill="#0000d0" />
<rect x="759.16" y="871.48" width="1.74" height="7.70" fill="#0000d0" />
<rect x="759.90" y="881.10" width="1.00" height="7.70" fill="#0000d0" />
<rect x="759.90" y="890.72" width="1.00" height="7.70" fill="#0000d0" />
<rect x="642.50" y="528.20" width="121.00" height="2.20" fill="#0000ff" />
<rect x="622.00" y="797.50" width="141.00" height="2.20" fill="#0000ff" />
<text x="756.50" y="235.34" font-size="11" fill="#fff" text-anchor="end" >60</text>
<text x="756.50" y="244.96" font-size="11" fill="#fff" text-anchor="end" >189</text>
<text x="756.50" y="254.58" font-size="11" fill="#fff" text-anchor="end" >187</text>
<text x="756.50" y="264.20" font-size="11" fill="#fff" text-anchor="end" >535</text>
<text x="756.50" y="273.82" font-size="11" fill="#fff" text-anchor="end" >450</text>
<text x="756.50" y="283.44" font-size="11" fill="#fff" text-anchor="end" >548</text>
<text x="756.50" y="293.06" font-size="11" fill="#fff" text-anchor="end" >588</text>
<text x="756.50" y="302.68" font-size="11" fill="#fff" text-anchor="end" >579</text>
<text x="756.50" y="312.30" font-size="11" fill="#fff" text-anchor="end" >463</text>
<text x="756.50" y="321.92" font-size="11" fill="#fff" text-anchor="end" >326</text>
<text x="756.50" y="331.54" font-size="11" fill="#fff" text-anchor="end" >289</text>
<text x="756.50" y="341.16" font-size="11" fill="#fff" text-anchor="end" >529</text>
<text x="756.50" y="350.78" font-size="11" fill="#fff" text-anchor="end" >450</text>
<text x="756.50" y="360.40" font-size="11" fill="#fff" text-anchor="end" >455</text>
<text x="756.50" y="370.02" font-size="11" fill="#fff" text-anchor="end" >595</text>
<text x="756.50" y="379.64" font-size="11" fill="#fff" text-anchor="end" >378</text>
<text x="756.50" y="389.26" font-size="11" fill="#fff" text-anchor="end" >490</text>
<text x="756.50" y="398.88" font-size="11" fill="#fff" text-anchor="end" >685</text>
<text x="756.50" y="408.50" font-size="11" fill="#fff" text-anchor="end" >803</text>
<text x="756.50" y="418.12" font-size="11" fill="#fff" text-anchor="end" >1085</text>
<text x="756.50" y="427.74" font-size="11" fill="#fff" text-anchor="end" >1148</text>
<text x="756.50" y="437.36" font-size="11" fill="#fff" text-anchor="end" >1212</text>
<text x="756.50" y="446.98" font-size="11" fill="#fff" text-anchor="end" >1155</text>
<text x="756.50" y="456.60" font-size="11" fill="#fff" text-anchor="end" >1039</text>
<text x="756.50" y="466.22" font-size="11" fill="#fff" text-anchor="end" >989</text>
<text x="756.50" y="475.84" font-size="11" fill="#fff" text-anchor="end" >996</text>
<text x="756.50" y="485.46" font-size="11" fill="#fff" text-anchor="end" >634</text>
<text x="756.50" y="495.08" font-size="11" fill="#fff" text-anchor="end" >892</text>
<text x="756.50" y="504.70" font-size="11" fill="#fff" text-anchor="end" >1276</text>
<text x="756.50" y="514.32" font-size="11" fill="#fff" text-anchor="end" >1688</text>
<text x="756.50" y="523.94" font-size="11" fill="#fff" text-anchor="end" >1918</text>
<text x="756.50" y="533.56" font-size="11" fill="#fff" text-anchor="end" >1836</text>
<text x="756.50" y="543.18" font-size="11" fill="#fff" text-anchor="end" >2256</text>
<text x="756.50" y="552.80" font-size="11" fill="#fff" text-anchor="end" >3844</text>
<text x="756.50" y="562.42" font-size="11" fill="#fff" text-anchor="end" >3347</text>
<text x="756.50" y="572.04" font-size="11" fill="#fff" text-anchor="end" >2715</text>
<text x="756.50" y="581.66" font-size="11" fill="#fff" text-anchor="end" >2591</text>
<text x="756.50" y="591.28" font-size="11" fill="#fff" text-anchor="end" >2175</text>
<text x="756.50" y="600.90" font-size="11" fill="#fff" text-anchor="end" >2538</text>
<text x="756.50" y="610.52" font-size="11" fill="#fff" text-anchor="end" >2453</text>
<text x="756.50" y="620.14" font-size="11" fill="#fff" text-anchor="end" >5172</text>
<text x="756.50" y="629.76" font-size="11" fill="#fff" text-anchor="end" >4451</text>
<text x="756.50" y="639.38" font-size="11" fill="#fff" text-anchor="end" >3414</text>
<text x="756.50" y="649.00" font-size="11" fill="#fff" text-anchor="end" >3576</text>
<text x="756.50" y="658.62" font-size="11" fill="#fff" text-anchor="end" >4165</text>
<text x="756.50" y="668.24" font-size="11" fill="#fff" text-anchor="end" >4900</text>
<text x="756.50" y="677.86" font-size="11" fill="#fff" text-anchor="end" >6097</text>
<text x="756.50" y="687.48" font-size="11" fill="#fff" text-anchor="end" >5174</text>
<text x="756.50" y="697.10" font-size="11" fill="#fff" text-anchor="end" >3561</text>
<text x="756.50" y="706.72" font-size="11" fill="#fff" text-anchor="end" >2735</text>
<text x="756.50" y="716.34" font-size="11" fill="#fff" text-anchor="end" >3545</text>
<text x="756.50" y="725.96" font-size="11" fill="#fff" text-anchor="end" >3466</text>
<text x="756.50" y="735.58" font-size="11" fill="#fff" text-anchor="end" >3846</text>
<text x="756.50" y="745.20" font-size="11" fill="#fff" text-anchor="end" >4534</text>
<text x="756.50" y="754.82" font-size="11" fill="#fff" text-anchor="end" >4356</text>
<text x="756.50" y="764.44" font-size="11" fill="#fff" text-anchor="end" >4307</text>
<text x="756.50" y="774.06" font-size="11" fill="#fff" text-anchor="end" >4578</text>
<text x="756.50" y="783.68" font-size="11" fill="#fff" text-anchor="end" >4799</text>
<text x="756.50" y="793.30" font-size="11" fill="#fff" text-anchor="end" >4021</text>
<text x="756.50" y="802.92" font-size="11" fill="#fff" text-anchor="end" >3216</text>
<text x="756.50" y="812.54" font-size="11" fill="#fff" text-anchor="end" >2624</text>
<text x="756.50" y="822.16" font-size="11" fill="#fff" text-anchor="end" >2635</text>
<text x="756.50" y="831.78" font-size="11" fill="#fff" text-anchor="end" >1889</text>
<text x="756.50" y="841.40" font-size="11" fill="#fff" text-anchor="end" >1081</text>
<text x="756.50" y="851.02" font-size="11" fill="#fff" text-anchor="end" >836</text>
<text x="756.50" y="860.64" font-size="11" fill="#fff" text-anchor="end" >626</text>
<text x="756.50" y="870.26" font-size="11" fill="#fff" text-anchor="end" >440</text>
<text x="756.50" y="879.88" font-size="11" fill="#fff" text-anchor="end" >237</text>
<text x="756.50" y="889.50" font-size="11" fill="#fff" text-anchor="end" >147</text>
<text x="756.50" y="899.12" font-size="11" fill="#fff" text-anchor="end" >84</text>
<path d="M650 555.5 L650 567 L639.5 561.2 Z" fill="#ff0000"/>
<rect x="639.00" y="555.50" width="5.00" height="1.60" fill="#ff0000" />
<rect x="5.00" y="704.60" width="776.00" height="1.00" fill="#fff" />
<rect x="784.70" y="555.00" width="30.20" height="13.50" fill="#fff" />
<text x="785.50" y="566.30" font-size="11.5" fill="#000" textLength="29" lengthAdjust="spacingAndGlyphs" >14126</text>
<rect x="784.70" y="697.00" width="30.20" height="15.70" fill="#fff" />
<text x="785.50" y="709.50" font-size="11.5" fill="#000" textLength="29" lengthAdjust="spacingAndGlyphs" >14081</text>
<rect x="162.00" y="1002.00" width="1.30" height="20.00" fill="#fff" />
<rect x="12.90" y="1006.00" width="118.10" height="15.00" fill="#fff" />
<text x="18.50" y="1018.30" font-size="11.5" fill="#000" textLength="106" lengthAdjust="spacingAndGlyphs" xml:space="preserve">2013-08-27  18:30:29</text>
<rect x="164.80" y="1006.00" width="58.00" height="15.00" fill="#fff" />
<text x="165.50" y="1018.30" font-size="11.5" fill="#000" textLength="56" lengthAdjust="spacingAndGlyphs" xml:space="preserve">8-28  18:30</text>
<rect x="797.00" y="1006.00" width="22.00" height="14.50" fill="#ff0000" />
<text x="800.00" y="1017.80" font-size="11.5" fill="#fff" textLength="15.5" lengthAdjust="spacingAndGlyphs" xml:space="preserve">9 E</text>
<rect x="5.00" y="1022.00" width="815.00" height="10.00" fill="#e9e9e9" />
<rect x="5.00" y="1022.00" width="815.00" height="1.00" fill="#d0d0d0" />
<path d="M16 1026 L12 1029 L16 1032Z" fill="#444"/>
<rect x="773.50" y="1023.50" width="15.00" height="9.00" fill="#f4f4f4" stroke="#9a9a9a" stroke-width="1"/>
<path d="M811 1026 L815 1029 L811 1032Z" fill="#444"/>
<rect x="836.00" y="44.70" width="93.70" height="14.10" fill="#808080" />
<text x="838.00" y="56.50" font-size="11.5" fill="#f4f4f4" textLength="88" lengthAdjust="spacingAndGlyphs" >Trade: 10@14095</text>
<text x="936.10" y="56.50" font-size="11.5" fill="#fff" textLength="442.8" lengthAdjust="spacingAndGlyphs" xml:space="preserve">CME_CO-GC-CME_20131200_GCZ3  #2 - Profile Period: 30 Minutes, TPOs: 2 x 30 min</text>
<rect x="1387.00" y="44.20" width="40.40" height="14.60" fill="#fff" />
<text x="1388.00" y="56.50" font-size="11.5" fill="#000" textLength="40" lengthAdjust="spacingAndGlyphs" >C:14115</text>
<text x="1433.00" y="56.50" font-size="11.5" fill="#fff" textLength="15.5" lengthAdjust="spacingAndGlyphs" >T:0</text>
<rect x="1450.00" y="44.20" width="33.70" height="14.60" fill="#fff" />
<text x="1451.00" y="56.50" font-size="11.5" fill="#000" textLength="33" lengthAdjust="spacingAndGlyphs" >Chg: 0</text>
<rect x="1487.00" y="44.20" width="59.20" height="14.60" fill="#ff0000" />
<text x="1488.00" y="56.50" font-size="11.5" fill="#300" textLength="58" lengthAdjust="spacingAndGlyphs" >DChg: -116</text>
<text x="1550.30" y="56.50" font-size="11.5" fill="#fff" textLength="65" lengthAdjust="spacingAndGlyphs" >2013-08-29 1</text>
<text x="856.20" y="695.20" font-size="11" fill="#fff" text-anchor="end" >73</text>
<text x="856.20" y="706.20" font-size="11" fill="#fff" text-anchor="end" >132</text>
<text x="856.20" y="716.70" font-size="11" fill="#fff" text-anchor="end" >121</text>
<text x="856.20" y="726.80" font-size="11" fill="#fff" text-anchor="end" >104</text>
<text x="856.20" y="737.30" font-size="11" fill="#fff" text-anchor="end" >71</text>
<text x="856.20" y="748.00" font-size="11" fill="#fff" text-anchor="end" >56</text>
<rect x="930.00" y="684.00" width="5.00" height="33.00" fill="#00e8e8" />
<text x="944.40" y="694.60" font-size="12" fill="#d0d0d0" font-weight="bold" >F</text>
<text x="992.60" y="694.60" font-size="11" fill="#fff" text-anchor="end" >177</text>
<text x="944.40" y="704.80" font-size="12" fill="#d0d0d0" font-weight="bold" >F</text>
<text x="992.60" y="704.80" font-size="11" fill="#fff" text-anchor="end" >48</text>
<text x="944.40" y="715.70" font-size="12" fill="#d0d0d0" font-weight="bold" >F</text>
<text x="992.60" y="715.70" font-size="11" fill="#fff" text-anchor="end" >27</text>
<rect x="834.00" y="996.80" width="778.00" height="1.30" fill="#fff" />
<rect x="929.80" y="997.00" width="1.30" height="20.00" fill="#fff" />
<rect x="1066.70" y="997.00" width="1.30" height="20.00" fill="#fff" />
<rect x="1202.80" y="997.00" width="1.30" height="20.00" fill="#fff" />
<rect x="1338.40" y="997.00" width="1.30" height="20.00" fill="#fff" />
<rect x="1474.30" y="997.00" width="1.30" height="20.00" fill="#fff" />
<rect x="931.60" y="1001.60" width="59.30" height="14.00" fill="#fff" />
<text x="932.60" y="1013.40" font-size="11.5" fill="#000" textLength="57" lengthAdjust="spacingAndGlyphs" xml:space="preserve">8-29  15:30</text>
<rect x="1068.00" y="1001.60" width="59.30" height="14.00" fill="#fff" />
<text x="1069.00" y="1013.40" font-size="11.5" fill="#000" textLength="57" lengthAdjust="spacingAndGlyphs" xml:space="preserve">8-29  16:00</text>
<rect x="1204.20" y="1001.60" width="59.30" height="14.00" fill="#fff" />
<text x="1205.20" y="1013.40" font-size="11.5" fill="#000" textLength="57" lengthAdjust="spacingAndGlyphs" xml:space="preserve">8-29  16:30</text>
<rect x="1339.50" y="1001.60" width="59.30" height="14.00" fill="#fff" />
<text x="1340.50" y="1013.40" font-size="11.5" fill="#000" textLength="57" lengthAdjust="spacingAndGlyphs" xml:space="preserve">8-29  17:00</text>
<rect x="1476.00" y="1001.60" width="59.30" height="14.00" fill="#fff" />
<text x="1477.00" y="1013.40" font-size="11.5" fill="#000" textLength="57" lengthAdjust="spacingAndGlyphs" xml:space="preserve">8-29  17:30</text>
<rect x="834.00" y="1017.40" width="778.00" height="14.60" fill="#e9e9e9" />
<rect x="834.00" y="1017.40" width="778.00" height="1.00" fill="#d0d0d0" />
<path d="M846 1021 L841 1025 L846 1029Z" fill="#444"/>
<rect x="1482.00" y="1018.50" width="13.50" height="14.00" fill="#f4f4f4" stroke="#9a9a9a" stroke-width="1"/>
<clipPath id="dclip"><rect x="804.2" y="169.2" width="781.6" height="513.8" rx="6"/></clipPath>
<linearGradient id="dlgH" x1="0" y1="0" x2="1" y2="0"><stop offset="0" stop-color="#1b2025"/><stop offset="0.75" stop-color="#151a1f"/><stop offset="0.88" stop-color="#3d4349"/><stop offset="1" stop-color="#6a7076"/></linearGradient>
<filter id="blur3" x="-20%" y="-50%" width="140%" height="200%"><feGaussianBlur stdDeviation="3.5"/></filter>
<rect x="804.2" y="169.2" width="781.6" height="513.8" rx="6" fill="url(#dlgH)"/>
<rect x="804.7" y="169.7" width="780.6" height="512.8" rx="6" fill="none" stroke="#b8c0c8" stroke-opacity="0.7" stroke-width="1" shape-rendering="auto"/>
<g clip-path="url(#dclip)" shape-rendering="auto"><rect x="806" y="173" width="536" height="20" rx="9" fill="#8e949a" filter="url(#blur3)"/><ellipse cx="832" cy="182" rx="10" ry="16" fill="#9fc0d8" opacity="0.35" filter="url(#blur3)"/></g>
<text x="811.50" y="186.60" font-size="12" fill="#000" textLength="513.4" lengthAdjust="spacingAndGlyphs" xml:space="preserve">Chart Settings - CME_CO-GC-CME_20131200_GCZ3  #1 - Profile Period: 1 Days, TPOs: 3 x 30 min</text>
<rect x="1532.9" y="169.3" width="47.3" height="18.6" rx="3" fill="url(#closebtn)" stroke="#5a2010" stroke-width="0.8"/>
<path d="M1552 174 L1561 183 M1561 174 L1552 183" stroke="#3a3a3a" stroke-width="4.2"/><path d="M1552 174 L1561 183 M1561 174 L1552 183" stroke="#fff" stroke-width="2.6"/>
<rect x="809.60" y="196.60" width="771.40" height="480.00" fill="#8a9096" />
<rect x="810.50" y="197.50" width="769.50" height="478.30" fill="#f0f0f0" />
<rect x="824.40" y="228.70" width="742.40" height="407.80" fill="#f0f0f0" />
<rect x="824.40" y="228.70" width="742.40" height="1.00" fill="#fff" />
<rect x="824.40" y="228.70" width="1.00" height="407.80" fill="#fff" />
<rect x="1564.80" y="228.70" width="1.00" height="407.80" fill="#a0a0a0" />
<rect x="1565.80" y="228.70" width="1.00" height="407.80" fill="#696969" />
<rect x="824.40" y="634.50" width="742.40" height="1.00" fill="#a0a0a0" />
<rect x="824.40" y="635.50" width="742.40" height="1.00" fill="#696969" />
<rect x="913.20" y="209.40" width="110.00" height="19.30" fill="#f0f0f0" />
<rect x="913.20" y="209.40" width="109.00" height="1.00" fill="#fff" />
<rect x="913.20" y="209.40" width="1.00" height="19.30" fill="#fff" />
<rect x="1021.20" y="210.40" width="1.00" height="18.30" fill="#a0a0a0" />
<rect x="1022.20" y="210.40" width="1.00" height="18.30" fill="#696969" />
<text x="918.20" y="224.70" font-size="11" fill="#000" textLength="99.5" lengthAdjust="spacingAndGlyphs" >Advanced Settings</text>
<rect x="1023.20" y="209.40" width="122.80" height="19.30" fill="#f0f0f0" />
<rect x="1023.20" y="209.40" width="121.80" height="1.00" fill="#fff" />
<rect x="1023.20" y="209.40" width="1.00" height="19.30" fill="#fff" />
<rect x="1144.00" y="210.40" width="1.00" height="18.30" fill="#a0a0a0" />
<rect x="1145.00" y="210.40" width="1.00" height="18.30" fill="#696969" />
<text x="1028.20" y="224.70" font-size="11" fill="#000" textLength="109.7" lengthAdjust="spacingAndGlyphs" >Advanced Settings 2</text>
<rect x="824.40" y="207.00" width="89.00" height="23.00" fill="#f0f0f0" />
<rect x="825.00" y="207.00" width="87.00" height="1.00" fill="#fff" />
<rect x="824.40" y="207.00" width="1.00" height="22.00" fill="#fff" />
<rect x="911.50" y="208.00" width="1.00" height="21.00" fill="#a0a0a0" />
<rect x="912.50" y="208.00" width="1.00" height="21.00" fill="#696969" />
<text x="831.80" y="222.40" font-size="11" fill="#000" textLength="74" lengthAdjust="spacingAndGlyphs" >Main Settings</text>
<text x="837.40" y="256.00" font-size="11" fill="#000" textLength="179" lengthAdjust="spacingAndGlyphs" >Date Range In File (yyyy-mm-dd):</text>
<rect x="860.40" y="262.40" width="238.80" height="21.60" fill="#f0f0f0" />
<rect x="860.40" y="262.40" width="238.80" height="1.00" fill="#a0a0a0" />
<rect x="860.40" y="262.40" width="1.00" height="21.60" fill="#a0a0a0" />
<rect x="861.40" y="263.40" width="236.80" height="1.00" fill="#696969" />
<rect x="861.40" y="263.40" width="1.00" height="19.60" fill="#696969" />
<rect x="860.40" y="283.00" width="238.80" height="1.00" fill="#ffffff" />
<rect x="1098.20" y="262.40" width="1.00" height="21.60" fill="#ffffff" />
<rect x="861.40" y="282.00" width="236.80" height="1.00" fill="#e3e3e3" />
<rect x="1097.20" y="263.40" width="1.00" height="19.60" fill="#e3e3e3" />
<rect x="860.80" y="263.60" width="145.20" height="14.20" fill="#3399ff" />
<text x="861.50" y="275.20" font-size="11" fill="#fff" textLength="143" lengthAdjust="spacingAndGlyphs" >2013-06-30 to 2013-08-29</text>
<rect x="837.30" y="297.40" width="9.70" height="1.00" fill="#a0a0a0" />
<rect x="838.30" y="298.40" width="8.70" height="1.00" fill="#fff" />
<rect x="1036.70" y="297.40" width="62.20" height="1.00" fill="#a0a0a0" />
<rect x="1036.70" y="298.40" width="62.20" height="1.00" fill="#fff" />
<rect x="837.30" y="297.40" width="1.00" height="62.20" fill="#a0a0a0" />
<rect x="838.30" y="298.40" width="1.00" height="60.20" fill="#fff" />
<rect x="1097.90" y="297.40" width="1.00" height="62.20" fill="#a0a0a0" />
<rect x="1098.90" y="297.40" width="1.00" height="63.20" fill="#fff" />
<rect x="837.30" y="358.60" width="261.60" height="1.00" fill="#a0a0a0" />
<rect x="837.30" y="359.60" width="262.60" height="1.00" fill="#fff" />
<circle cx="852.6" cy="299.1" r="5.5" fill="#fff" stroke="#8a8a8a" stroke-width="1"/>
<path d="M847.6 301.1 A5.2 5.2 0 0 1 854.6 294.1" stroke="#555" stroke-width="1.2" fill="none"/>
<circle cx="852.6" cy="299.1" r="2.2" fill="#000"/>
<text x="864.40" y="304.00" font-size="11" fill="#000" textLength="162.6" lengthAdjust="spacingAndGlyphs" >Use Number Of Days To Load</text>
<text x="877.20" y="326.00" font-size="11" fill="#000" textLength="120.4" lengthAdjust="spacingAndGlyphs" >Days To Display/Load:</text>
<rect x="1005.40" y="309.50" width="79.10" height="21.20" fill="#fff" />
<rect x="1005.40" y="309.50" width="79.10" height="1.00" fill="#a0a0a0" />
<rect x="1005.40" y="309.50" width="1.00" height="21.20" fill="#a0a0a0" />
<rect x="1006.40" y="310.50" width="77.10" height="1.00" fill="#696969" />
<rect x="1006.40" y="310.50" width="1.00" height="19.20" fill="#696969" />
<rect x="1005.40" y="329.70" width="79.10" height="1.00" fill="#ffffff" />
<rect x="1083.50" y="309.50" width="1.00" height="21.20" fill="#ffffff" />
<rect x="1006.40" y="328.70" width="77.10" height="1.00" fill="#e3e3e3" />
<rect x="1082.50" y="310.50" width="1.00" height="19.20" fill="#e3e3e3" />
<rect x="1066.50" y="310.50" width="17.00" height="9.60" fill="#f0f0f0" />
<rect x="1066.50" y="310.50" width="17.00" height="1.00" fill="#e3e3e3" />
<rect x="1066.50" y="310.50" width="1.00" height="9.60" fill="#e3e3e3" />
<rect x="1067.50" y="311.50" width="15.00" height="1.00" fill="#ffffff" />
<rect x="1067.50" y="311.50" width="1.00" height="7.60" fill="#ffffff" />
<rect x="1066.50" y="319.10" width="17.00" height="1.00" fill="#696969" />
<rect x="1082.50" y="310.50" width="1.00" height="9.60" fill="#696969" />
<rect x="1067.50" y="318.10" width="15.00" height="1.00" fill="#a0a0a0" />
<rect x="1081.50" y="311.50" width="1.00" height="7.60" fill="#a0a0a0" />
<rect x="1066.50" y="320.10" width="17.00" height="9.60" fill="#f0f0f0" />
<rect x="1066.50" y="320.10" width="17.00" height="1.00" fill="#e3e3e3" />
<rect x="1066.50" y="320.10" width="1.00" height="9.60" fill="#e3e3e3" />
<rect x="1067.50" y="321.10" width="15.00" height="1.00" fill="#ffffff" />
<rect x="1067.50" y="321.10" width="1.00" height="7.60" fill="#ffffff" />
<rect x="1066.50" y="328.70" width="17.00" height="1.00" fill="#696969" />
<rect x="1082.50" y="320.10" width="1.00" height="9.60" fill="#696969" />
<rect x="1067.50" y="327.70" width="15.00" height="1.00" fill="#a0a0a0" />
<rect x="1081.50" y="321.10" width="1.00" height="7.60" fill="#a0a0a0" />
<path d="M1073.2 316.2 L1076.8 316.2 L1075.0 313.90000000000003Z" fill="#000"/>
<path d="M1073.2 324.0 L1076.8 324.0 L1075.0 326.29999999999995Z" fill="#000"/>
<text x="1008.90" y="325.50" font-size="11" fill="#000" >30</text>
<rect x="860.40" y="336.50" width="12.00" height="12.00" fill="#fff" />
<rect x="860.40" y="336.50" width="12.00" height="1.00" fill="#a0a0a0" />
<rect x="860.40" y="336.50" width="1.00" height="12.00" fill="#a0a0a0" />
<rect x="861.40" y="337.50" width="10.00" height="1.00" fill="#696969" />
<rect x="861.40" y="337.50" width="1.00" height="10.00" fill="#696969" />
<rect x="860.40" y="347.50" width="12.00" height="1.00" fill="#fff" />
<rect x="871.40" y="336.50" width="1.00" height="12.00" fill="#fff" />
<rect x="861.40" y="346.50" width="10.00" height="1.00" fill="#e3e3e3" />
<rect x="870.40" y="337.50" width="1.00" height="10.00" fill="#e3e3e3" />
<text x="878.30" y="347.70" font-size="11" fill="#000" textLength="190.5" lengthAdjust="spacingAndGlyphs" >Adjust Proportional With Bar Period</text>
<rect x="837.30" y="372.40" width="9.70" height="1.00" fill="#a0a0a0" />
<rect x="838.30" y="373.40" width="8.70" height="1.00" fill="#fff" />
<rect x="965.10" y="372.40" width="133.80" height="1.00" fill="#a0a0a0" />
<rect x="965.10" y="373.40" width="133.80" height="1.00" fill="#fff" />
<rect x="837.30" y="372.40" width="1.00" height="44.00" fill="#a0a0a0" />
<rect x="838.30" y="373.40" width="1.00" height="42.00" fill="#fff" />
<rect x="1097.90" y="372.40" width="1.00" height="44.00" fill="#a0a0a0" />
<rect x="1098.90" y="372.40" width="1.00" height="45.00" fill="#fff" />
<rect x="837.30" y="415.40" width="261.60" height="1.00" fill="#a0a0a0" />
<rect x="837.30" y="416.40" width="262.60" height="1.00" fill="#fff" />
<circle cx="852.6" cy="374.7" r="5.5" fill="#fff" stroke="#8a8a8a" stroke-width="1"/>
<path d="M847.6 376.7 A5.2 5.2 0 0 1 854.6 369.7" stroke="#555" stroke-width="1.2" fill="none"/>
<text x="864.40" y="379.00" font-size="11" fill="#000" textLength="90.3" lengthAdjust="spacingAndGlyphs" >Use Date Range</text>
<text x="862.70" y="400.70" font-size="11" fill="#a0a0a0" textLength="30.7" lengthAdjust="spacingAndGlyphs" >From:</text>
<rect x="897.70" y="384.20" width="79.60" height="21.20" fill="#f0f0f0" />
<rect x="897.70" y="384.20" width="79.60" height="1.00" fill="#a0a0a0" />
<rect x="897.70" y="384.20" width="1.00" height="21.20" fill="#a0a0a0" />
<rect x="898.70" y="385.20" width="77.60" height="1.00" fill="#696969" />
<rect x="898.70" y="385.20" width="1.00" height="19.20" fill="#696969" />
<rect x="897.70" y="404.40" width="79.60" height="1.00" fill="#ffffff" />
<rect x="976.30" y="384.20" width="1.00" height="21.20" fill="#ffffff" />
<rect x="898.70" y="403.40" width="77.60" height="1.00" fill="#e3e3e3" />
<rect x="975.30" y="385.20" width="1.00" height="19.20" fill="#e3e3e3" />
<text x="986.30" y="400.70" font-size="11" fill="#a0a0a0" textLength="15.7" lengthAdjust="spacingAndGlyphs" >To:</text>
<rect x="1005.40" y="384.20" width="79.60" height="21.20" fill="#f0f0f0" />
<rect x="1005.40" y="384.20" width="79.60" height="1.00" fill="#a0a0a0" />
<rect x="1005.40" y="384.20" width="1.00" height="21.20" fill="#a0a0a0" />
<rect x="1006.40" y="385.20" width="77.60" height="1.00" fill="#696969" />
<rect x="1006.40" y="385.20" width="1.00" height="19.20" fill="#696969" />
<rect x="1005.40" y="404.40" width="79.60" height="1.00" fill="#ffffff" />
<rect x="1084.00" y="384.20" width="1.00" height="21.20" fill="#ffffff" />
<rect x="1006.40" y="403.40" width="77.60" height="1.00" fill="#e3e3e3" />
<rect x="1083.00" y="385.20" width="1.00" height="19.20" fill="#e3e3e3" />
<text x="995.90" y="440.20" font-size="11" fill="#000" text-anchor="end" textLength="114.7" lengthAdjust="spacingAndGlyphs" >Price Display Format:</text>
<rect x="1005.40" y="425.80" width="93.00" height="20.80" fill="#fff" />
<rect x="1005.40" y="425.80" width="93.00" height="1.00" fill="#a0a0a0" />
<rect x="1005.40" y="425.80" width="1.00" height="20.80" fill="#a0a0a0" />
<rect x="1006.40" y="426.80" width="91.00" height="1.00" fill="#696969" />
<rect x="1006.40" y="426.80" width="1.00" height="18.80" fill="#696969" />
<rect x="1005.40" y="445.60" width="93.00" height="1.00" fill="#ffffff" />
<rect x="1097.40" y="425.80" width="1.00" height="20.80" fill="#ffffff" />
<rect x="1006.40" y="444.60" width="91.00" height="1.00" fill="#e3e3e3" />
<rect x="1096.40" y="426.80" width="1.00" height="18.80" fill="#e3e3e3" />
<rect x="1081.40" y="427.80" width="15.00" height="16.80" fill="#f0f0f0" />
<rect x="1081.40" y="427.80" width="15.00" height="1.00" fill="#e3e3e3" />
<rect x="1081.40" y="427.80" width="1.00" height="16.80" fill="#e3e3e3" />
<rect x="1082.40" y="428.80" width="13.00" height="1.00" fill="#ffffff" />
<rect x="1082.40" y="428.80" width="1.00" height="14.80" fill="#ffffff" />
<rect x="1081.40" y="443.60" width="15.00" height="1.00" fill="#696969" />
<rect x="1095.40" y="427.80" width="1.00" height="16.80" fill="#696969" />
<rect x="1082.40" y="442.60" width="13.00" height="1.00" fill="#a0a0a0" />
<rect x="1094.40" y="428.80" width="1.00" height="14.80" fill="#a0a0a0" />
<path d="M1084.9 434.70000000000005 L1092.9 434.70000000000005 L1088.9 439.20000000000005Z" fill="#000"/>
<text x="1008.90" y="441.90" font-size="11" fill="#000" >1</text>
<text x="995.90" y="465.70" font-size="11" fill="#000" text-anchor="end" textLength="50.9" lengthAdjust="spacingAndGlyphs" >Tick Size:</text>
<rect x="1005.40" y="451.50" width="93.00" height="21.20" fill="#fff" />
<rect x="1005.40" y="451.50" width="93.00" height="1.00" fill="#a0a0a0" />
<rect x="1005.40" y="451.50" width="1.00" height="21.20" fill="#a0a0a0" />
<rect x="1006.40" y="452.50" width="91.00" height="1.00" fill="#696969" />
<rect x="1006.40" y="452.50" width="1.00" height="19.20" fill="#696969" />
<rect x="1005.40" y="471.70" width="93.00" height="1.00" fill="#ffffff" />
<rect x="1097.40" y="451.50" width="1.00" height="21.20" fill="#ffffff" />
<rect x="1006.40" y="470.70" width="91.00" height="1.00" fill="#e3e3e3" />
<rect x="1096.40" y="452.50" width="1.00" height="19.20" fill="#e3e3e3" />
<text x="1008.50" y="466.80" font-size="11" fill="#000" textLength="47" lengthAdjust="spacingAndGlyphs" >1.000000</text>
<text x="999.40" y="491.40" font-size="11" fill="#000" text-anchor="end" textLength="142.5" lengthAdjust="spacingAndGlyphs" >Volume at Price Multiplier:</text>
<rect x="1005.40" y="478.90" width="93.00" height="20.90" fill="#fff" />
<rect x="1005.40" y="478.90" width="93.00" height="1.00" fill="#a0a0a0" />
<rect x="1005.40" y="478.90" width="1.00" height="20.90" fill="#a0a0a0" />
<rect x="1006.40" y="479.90" width="91.00" height="1.00" fill="#696969" />
<rect x="1006.40" y="479.90" width="1.00" height="18.90" fill="#696969" />
<rect x="1005.40" y="498.80" width="93.00" height="1.00" fill="#ffffff" />
<rect x="1097.40" y="478.90" width="1.00" height="20.90" fill="#ffffff" />
<rect x="1006.40" y="497.80" width="91.00" height="1.00" fill="#e3e3e3" />
<rect x="1096.40" y="479.90" width="1.00" height="18.90" fill="#e3e3e3" />
<rect x="1081.40" y="480.90" width="15.00" height="16.90" fill="#f0f0f0" />
<rect x="1081.40" y="480.90" width="15.00" height="1.00" fill="#e3e3e3" />
<rect x="1081.40" y="480.90" width="1.00" height="16.90" fill="#e3e3e3" />
<rect x="1082.40" y="481.90" width="13.00" height="1.00" fill="#ffffff" />
<rect x="1082.40" y="481.90" width="1.00" height="14.90" fill="#ffffff" />
<rect x="1081.40" y="496.80" width="15.00" height="1.00" fill="#696969" />
<rect x="1095.40" y="480.90" width="1.00" height="16.90" fill="#696969" />
<rect x="1082.40" y="495.80" width="13.00" height="1.00" fill="#a0a0a0" />
<rect x="1094.40" y="481.90" width="1.00" height="14.90" fill="#a0a0a0" />
<path d="M1084.9 487.85 L1092.9 487.85 L1088.9 492.35Z" fill="#000"/>
<text x="1008.90" y="493.20" font-size="11" fill="#000" >1</text>
<text x="837.30" y="516.60" font-size="11" fill="#000" textLength="43" lengthAdjust="spacingAndGlyphs" >Symbol:</text>
<rect x="860.40" y="521.30" width="173.70" height="21.90" fill="#fff" />
<rect x="860.40" y="521.30" width="173.70" height="1.00" fill="#a0a0a0" />
<rect x="860.40" y="521.30" width="1.00" height="21.90" fill="#a0a0a0" />
<rect x="861.40" y="522.30" width="171.70" height="1.00" fill="#696969" />
<rect x="861.40" y="522.30" width="1.00" height="19.90" fill="#696969" />
<rect x="860.40" y="542.20" width="173.70" height="1.00" fill="#ffffff" />
<rect x="1033.10" y="521.30" width="1.00" height="21.90" fill="#ffffff" />
<rect x="861.40" y="541.20" width="171.70" height="1.00" fill="#e3e3e3" />
<rect x="1032.10" y="522.30" width="1.00" height="19.90" fill="#e3e3e3" />
<text x="862.70" y="536.60" font-size="11" fill="#000" textLength="169" lengthAdjust="spacingAndGlyphs" >CME_CO-GC-CME_20131200_</text>
<rect x="1047.10" y="521.30" width="53.00" height="22.60" fill="#f0f0f0" />
<rect x="1047.10" y="521.30" width="53.00" height="1.00" fill="#e3e3e3" />
<rect x="1047.10" y="521.30" width="1.00" height="22.60" fill="#e3e3e3" />
<rect x="1048.10" y="522.30" width="51.00" height="1.00" fill="#ffffff" />
<rect x="1048.10" y="522.30" width="1.00" height="20.60" fill="#ffffff" />
<rect x="1047.10" y="542.90" width="53.00" height="1.00" fill="#696969" />
<rect x="1099.10" y="521.30" width="1.00" height="22.60" fill="#696969" />
<rect x="1048.10" y="541.90" width="51.00" height="1.00" fill="#a0a0a0" />
<rect x="1098.10" y="522.30" width="1.00" height="20.60" fill="#a0a0a0" />
<text x="1073.60" y="536.80" font-size="11" fill="#000" text-anchor="middle" >Find</text>
<text x="836.90" y="563.80" font-size="11" fill="#000" textLength="198.5" lengthAdjust="spacingAndGlyphs" >Alternate Real-Time Update Symbol:</text>
<rect x="860.40" y="569.00" width="173.60" height="21.20" fill="#fff" />
<rect x="860.40" y="569.00" width="173.60" height="1.00" fill="#a0a0a0" />
<rect x="860.40" y="569.00" width="1.00" height="21.20" fill="#a0a0a0" />
<rect x="861.40" y="570.00" width="171.60" height="1.00" fill="#696969" />
<rect x="861.40" y="570.00" width="1.00" height="19.20" fill="#696969" />
<rect x="860.40" y="589.20" width="173.60" height="1.00" fill="#ffffff" />
<rect x="1033.00" y="569.00" width="1.00" height="21.20" fill="#ffffff" />
<rect x="861.40" y="588.20" width="171.60" height="1.00" fill="#e3e3e3" />
<rect x="1032.00" y="570.00" width="1.00" height="19.20" fill="#e3e3e3" />
<rect x="1046.90" y="568.50" width="53.10" height="22.30" fill="#f0f0f0" />
<rect x="1046.90" y="568.50" width="53.10" height="1.00" fill="#e3e3e3" />
<rect x="1046.90" y="568.50" width="1.00" height="22.30" fill="#e3e3e3" />
<rect x="1047.90" y="569.50" width="51.10" height="1.00" fill="#ffffff" />
<rect x="1047.90" y="569.50" width="1.00" height="20.30" fill="#ffffff" />
<rect x="1046.90" y="589.80" width="53.10" height="1.00" fill="#696969" />
<rect x="1099.00" y="568.50" width="1.00" height="22.30" fill="#696969" />
<rect x="1047.90" y="588.80" width="51.10" height="1.00" fill="#a0a0a0" />
<rect x="1098.00" y="569.50" width="1.00" height="20.30" fill="#a0a0a0" />
<text x="1073.45" y="584.20" font-size="11" fill="#000" text-anchor="middle" >Find</text>
<rect x="837.30" y="602.30" width="12.00" height="12.00" fill="#fff" />
<rect x="837.30" y="602.30" width="12.00" height="1.00" fill="#a0a0a0" />
<rect x="837.30" y="602.30" width="1.00" height="12.00" fill="#a0a0a0" />
<rect x="838.30" y="603.30" width="10.00" height="1.00" fill="#696969" />
<rect x="838.30" y="603.30" width="1.00" height="10.00" fill="#696969" />
<rect x="837.30" y="613.30" width="12.00" height="1.00" fill="#fff" />
<rect x="848.30" y="602.30" width="1.00" height="12.00" fill="#fff" />
<rect x="838.30" y="612.30" width="10.00" height="1.00" fill="#e3e3e3" />
<rect x="847.30" y="603.30" width="1.00" height="10.00" fill="#e3e3e3" />
<text x="855.20" y="612.70" font-size="11" fill="#000" textLength="207" lengthAdjust="spacingAndGlyphs" >Automatically Rollover Futures Symbol</text>
<rect x="1114.00" y="243.50" width="240.30" height="21.40" fill="#fff" />
<rect x="1114.00" y="243.50" width="240.30" height="1.00" fill="#a0a0a0" />
<rect x="1114.00" y="243.50" width="1.00" height="21.40" fill="#a0a0a0" />
<rect x="1115.00" y="244.50" width="238.30" height="1.00" fill="#696969" />
<rect x="1115.00" y="244.50" width="1.00" height="19.40" fill="#696969" />
<rect x="1114.00" y="263.90" width="240.30" height="1.00" fill="#ffffff" />
<rect x="1353.30" y="243.50" width="1.00" height="21.40" fill="#ffffff" />
<rect x="1115.00" y="262.90" width="238.30" height="1.00" fill="#e3e3e3" />
<rect x="1352.30" y="244.50" width="1.00" height="19.40" fill="#e3e3e3" />
<rect x="1337.30" y="245.50" width="15.00" height="17.40" fill="#f0f0f0" />
<rect x="1337.30" y="245.50" width="15.00" height="1.00" fill="#e3e3e3" />
<rect x="1337.30" y="245.50" width="1.00" height="17.40" fill="#e3e3e3" />
<rect x="1338.30" y="246.50" width="13.00" height="1.00" fill="#ffffff" />
<rect x="1338.30" y="246.50" width="1.00" height="15.40" fill="#ffffff" />
<rect x="1337.30" y="261.90" width="15.00" height="1.00" fill="#696969" />
<rect x="1351.30" y="245.50" width="1.00" height="17.40" fill="#696969" />
<rect x="1338.30" y="260.90" width="13.00" height="1.00" fill="#a0a0a0" />
<rect x="1350.30" y="246.50" width="1.00" height="15.40" fill="#a0a0a0" />
<path d="M1340.8 252.7 L1348.8 252.7 L1344.8 257.2Z" fill="#000"/>
<text x="1117.50" y="259.60" font-size="11" fill="#000" >Intraday Chart</text>
<rect x="1114.00" y="272.00" width="5.00" height="1.00" fill="#a0a0a0" />
<rect x="1115.00" y="273.00" width="4.00" height="1.00" fill="#fff" />
<rect x="1233.00" y="272.00" width="121.60" height="1.00" fill="#a0a0a0" />
<rect x="1233.00" y="273.00" width="121.60" height="1.00" fill="#fff" />
<rect x="1114.00" y="272.00" width="1.00" height="123.10" fill="#a0a0a0" />
<rect x="1115.00" y="273.00" width="1.00" height="121.10" fill="#fff" />
<rect x="1353.60" y="272.00" width="1.00" height="123.10" fill="#a0a0a0" />
<rect x="1354.60" y="272.00" width="1.00" height="124.10" fill="#fff" />
<rect x="1114.00" y="394.10" width="240.60" height="1.00" fill="#a0a0a0" />
<rect x="1114.00" y="395.10" width="241.60" height="1.00" fill="#fff" />
<text x="1123.30" y="276.70" font-size="11" fill="#000" textLength="106.4" lengthAdjust="spacingAndGlyphs" >Intraday Bar Period:</text>
<text x="1128.50" y="296.80" font-size="11" fill="#000" textLength="56.8" lengthAdjust="spacingAndGlyphs" >Bar Period</text>
<rect x="1128.50" y="304.00" width="211.90" height="20.70" fill="#fff" />
<rect x="1128.50" y="304.00" width="211.90" height="1.00" fill="#a0a0a0" />
<rect x="1128.50" y="304.00" width="1.00" height="20.70" fill="#a0a0a0" />
<rect x="1129.50" y="305.00" width="209.90" height="1.00" fill="#696969" />
<rect x="1129.50" y="305.00" width="1.00" height="18.70" fill="#696969" />
<rect x="1128.50" y="323.70" width="211.90" height="1.00" fill="#ffffff" />
<rect x="1339.40" y="304.00" width="1.00" height="20.70" fill="#ffffff" />
<rect x="1129.50" y="322.70" width="209.90" height="1.00" fill="#e3e3e3" />
<rect x="1338.40" y="305.00" width="1.00" height="18.70" fill="#e3e3e3" />
<rect x="1323.40" y="306.00" width="15.00" height="16.70" fill="#f0f0f0" />
<rect x="1323.40" y="306.00" width="15.00" height="1.00" fill="#e3e3e3" />
<rect x="1323.40" y="306.00" width="1.00" height="16.70" fill="#e3e3e3" />
<rect x="1324.40" y="307.00" width="13.00" height="1.00" fill="#ffffff" />
<rect x="1324.40" y="307.00" width="1.00" height="14.70" fill="#ffffff" />
<rect x="1323.40" y="321.70" width="15.00" height="1.00" fill="#696969" />
<rect x="1337.40" y="306.00" width="1.00" height="16.70" fill="#696969" />
<rect x="1324.40" y="320.70" width="13.00" height="1.00" fill="#a0a0a0" />
<rect x="1336.40" y="307.00" width="1.00" height="14.70" fill="#a0a0a0" />
<path d="M1326.9 312.85 L1334.9 312.85 L1330.9 317.35Z" fill="#000"/>
<text x="1132.00" y="320.10" font-size="11" fill="#000" >Days-Mins-Secs Per Bar</text>
<rect x="1128.50" y="329.40" width="108.00" height="21.10" fill="#fff" />
<rect x="1128.50" y="329.40" width="108.00" height="1.00" fill="#a0a0a0" />
<rect x="1128.50" y="329.40" width="1.00" height="21.10" fill="#a0a0a0" />
<rect x="1129.50" y="330.40" width="106.00" height="1.00" fill="#696969" />
<rect x="1129.50" y="330.40" width="1.00" height="19.10" fill="#696969" />
<rect x="1128.50" y="349.50" width="108.00" height="1.00" fill="#ffffff" />
<rect x="1235.50" y="329.40" width="1.00" height="21.10" fill="#ffffff" />
<rect x="1129.50" y="348.50" width="106.00" height="1.00" fill="#e3e3e3" />
<rect x="1234.50" y="330.40" width="1.00" height="19.10" fill="#e3e3e3" />
<text x="1131.00" y="344.90" font-size="11" fill="#000" textLength="28.6" lengthAdjust="spacingAndGlyphs" >0-1-0</text>
<rect x="1128.50" y="357.50" width="12.00" height="12.00" fill="#f4f4f4" />
<rect x="1128.50" y="357.50" width="12.00" height="1.00" fill="#b5b5b5" />
<rect x="1128.50" y="357.50" width="1.00" height="12.00" fill="#b5b5b5" />
<rect x="1129.50" y="358.50" width="10.00" height="1.00" fill="#c8c8c8" />
<rect x="1129.50" y="358.50" width="1.00" height="10.00" fill="#c8c8c8" />
<rect x="1128.50" y="368.50" width="12.00" height="1.00" fill="#fff" />
<rect x="1139.50" y="357.50" width="1.00" height="12.00" fill="#fff" />
<rect x="1129.50" y="367.50" width="10.00" height="1.00" fill="#e3e3e3" />
<rect x="1138.50" y="358.50" width="1.00" height="10.00" fill="#e3e3e3" />
<text x="1146.50" y="368.20" font-size="11" fill="#a0a0a0" textLength="87.5" lengthAdjust="spacingAndGlyphs" >Fill Session Gap</text>
<rect x="1128.50" y="378.00" width="12.00" height="12.00" fill="#f4f4f4" />
<rect x="1128.50" y="378.00" width="12.00" height="1.00" fill="#b5b5b5" />
<rect x="1128.50" y="378.00" width="1.00" height="12.00" fill="#b5b5b5" />
<rect x="1129.50" y="379.00" width="10.00" height="1.00" fill="#c8c8c8" />
<rect x="1129.50" y="379.00" width="1.00" height="10.00" fill="#c8c8c8" />
<rect x="1128.50" y="389.00" width="12.00" height="1.00" fill="#fff" />
<rect x="1139.50" y="378.00" width="1.00" height="12.00" fill="#fff" />
<rect x="1129.50" y="388.00" width="10.00" height="1.00" fill="#e3e3e3" />
<rect x="1138.50" y="379.00" width="1.00" height="10.00" fill="#e3e3e3" />
<text x="1146.50" y="388.30" font-size="11" fill="#a0a0a0" textLength="139" lengthAdjust="spacingAndGlyphs" >New Bar When Exceeded</text>
<rect x="1114.00" y="407.70" width="5.00" height="1.00" fill="#a0a0a0" />
<rect x="1115.00" y="408.70" width="4.00" height="1.00" fill="#fff" />
<rect x="1210.00" y="407.70" width="145.00" height="1.00" fill="#a0a0a0" />
<rect x="1210.00" y="408.70" width="145.00" height="1.00" fill="#fff" />
<rect x="1114.00" y="407.70" width="1.00" height="177.70" fill="#a0a0a0" />
<rect x="1115.00" y="408.70" width="1.00" height="175.70" fill="#fff" />
<rect x="1354.00" y="407.70" width="1.00" height="177.70" fill="#a0a0a0" />
<rect x="1355.00" y="407.70" width="1.00" height="178.70" fill="#fff" />
<rect x="1114.00" y="584.40" width="241.00" height="1.00" fill="#a0a0a0" />
<rect x="1114.00" y="585.40" width="242.00" height="1.00" fill="#fff" />
<text x="1123.30" y="411.70" font-size="11" fill="#000" textLength="82.7" lengthAdjust="spacingAndGlyphs" >Session Times:</text>
<text x="1130.00" y="431.90" font-size="11" fill="#000" textLength="58.4" lengthAdjust="spacingAndGlyphs" >Start Time:</text>
<rect x="1259.70" y="418.80" width="82.30" height="20.80" fill="#fff" />
<rect x="1259.70" y="418.80" width="82.30" height="1.00" fill="#a0a0a0" />
<rect x="1259.70" y="418.80" width="1.00" height="20.80" fill="#a0a0a0" />
<rect x="1260.70" y="419.80" width="80.30" height="1.00" fill="#696969" />
<rect x="1260.70" y="419.80" width="1.00" height="18.80" fill="#696969" />
<rect x="1259.70" y="438.60" width="82.30" height="1.00" fill="#ffffff" />
<rect x="1341.00" y="418.80" width="1.00" height="20.80" fill="#ffffff" />
<rect x="1260.70" y="437.60" width="80.30" height="1.00" fill="#e3e3e3" />
<rect x="1340.00" y="419.80" width="1.00" height="18.80" fill="#e3e3e3" />
<rect x="1324.00" y="419.80" width="17.00" height="9.40" fill="#f0f0f0" />
<rect x="1324.00" y="419.80" width="17.00" height="1.00" fill="#e3e3e3" />
<rect x="1324.00" y="419.80" width="1.00" height="9.40" fill="#e3e3e3" />
<rect x="1325.00" y="420.80" width="15.00" height="1.00" fill="#ffffff" />
<rect x="1325.00" y="420.80" width="1.00" height="7.40" fill="#ffffff" />
<rect x="1324.00" y="428.20" width="17.00" height="1.00" fill="#696969" />
<rect x="1340.00" y="419.80" width="1.00" height="9.40" fill="#696969" />
<rect x="1325.00" y="427.20" width="15.00" height="1.00" fill="#a0a0a0" />
<rect x="1339.00" y="420.80" width="1.00" height="7.40" fill="#a0a0a0" />
<rect x="1324.00" y="429.20" width="17.00" height="9.40" fill="#f0f0f0" />
<rect x="1324.00" y="429.20" width="17.00" height="1.00" fill="#e3e3e3" />
<rect x="1324.00" y="429.20" width="1.00" height="9.40" fill="#e3e3e3" />
<rect x="1325.00" y="430.20" width="15.00" height="1.00" fill="#ffffff" />
<rect x="1325.00" y="430.20" width="1.00" height="7.40" fill="#ffffff" />
<rect x="1324.00" y="437.60" width="17.00" height="1.00" fill="#696969" />
<rect x="1340.00" y="429.20" width="1.00" height="9.40" fill="#696969" />
<rect x="1325.00" y="436.60" width="15.00" height="1.00" fill="#a0a0a0" />
<rect x="1339.00" y="430.20" width="1.00" height="7.40" fill="#a0a0a0" />
<path d="M1330.7 425.4 L1334.3 425.4 L1332.5 423.1Z" fill="#000"/>
<path d="M1330.7 433.00000000000006 L1334.3 433.00000000000006 L1332.5 435.3Z" fill="#000"/>
<text x="1263.20" y="435.90" font-size="11" fill="#000" textLength="47" lengthAdjust="spacingAndGlyphs" >13:20:00</text>
<text x="1130.00" y="458.90" font-size="11" fill="#000" textLength="55.3" lengthAdjust="spacingAndGlyphs" >End Time:</text>
<rect x="1259.70" y="442.70" width="82.30" height="21.10" fill="#fff" />
<rect x="1259.70" y="442.70" width="82.30" height="1.00" fill="#a0a0a0" />
<rect x="1259.70" y="442.70" width="1.00" height="21.10" fill="#a0a0a0" />
<rect x="1260.70" y="443.70" width="80.30" height="1.00" fill="#696969" />
<rect x="1260.70" y="443.70" width="1.00" height="19.10" fill="#696969" />
<rect x="1259.70" y="462.80" width="82.30" height="1.00" fill="#ffffff" />
<rect x="1341.00" y="442.70" width="1.00" height="21.10" fill="#ffffff" />
<rect x="1260.70" y="461.80" width="80.30" height="1.00" fill="#e3e3e3" />
<rect x="1340.00" y="443.70" width="1.00" height="19.10" fill="#e3e3e3" />
<rect x="1324.00" y="443.70" width="17.00" height="9.55" fill="#f0f0f0" />
<rect x="1324.00" y="443.70" width="17.00" height="1.00" fill="#e3e3e3" />
<rect x="1324.00" y="443.70" width="1.00" height="9.55" fill="#e3e3e3" />
<rect x="1325.00" y="444.70" width="15.00" height="1.00" fill="#ffffff" />
<rect x="1325.00" y="444.70" width="1.00" height="7.55" fill="#ffffff" />
<rect x="1324.00" y="452.25" width="17.00" height="1.00" fill="#696969" />
<rect x="1340.00" y="443.70" width="1.00" height="9.55" fill="#696969" />
<rect x="1325.00" y="451.25" width="15.00" height="1.00" fill="#a0a0a0" />
<rect x="1339.00" y="444.70" width="1.00" height="7.55" fill="#a0a0a0" />
<rect x="1324.00" y="453.25" width="17.00" height="9.55" fill="#f0f0f0" />
<rect x="1324.00" y="453.25" width="17.00" height="1.00" fill="#e3e3e3" />
<rect x="1324.00" y="453.25" width="1.00" height="9.55" fill="#e3e3e3" />
<rect x="1325.00" y="454.25" width="15.00" height="1.00" fill="#ffffff" />
<rect x="1325.00" y="454.25" width="1.00" height="7.55" fill="#ffffff" />
<rect x="1324.00" y="461.80" width="17.00" height="1.00" fill="#696969" />
<rect x="1340.00" y="453.25" width="1.00" height="9.55" fill="#696969" />
<rect x="1325.00" y="460.80" width="15.00" height="1.00" fill="#a0a0a0" />
<rect x="1339.00" y="454.25" width="1.00" height="7.55" fill="#a0a0a0" />
<path d="M1330.7 449.375 L1334.3 449.375 L1332.5 447.07500000000005Z" fill="#000"/>
<path d="M1330.7 457.125 L1334.3 457.125 L1332.5 459.42499999999995Z" fill="#000"/>
<text x="1263.20" y="459.80" font-size="11" fill="#000" textLength="47" lengthAdjust="spacingAndGlyphs" >18:29:59</text>
<rect x="1130.40" y="471.30" width="12.00" height="12.00" fill="#fff" />
<rect x="1130.40" y="471.30" width="12.00" height="1.00" fill="#a0a0a0" />
<rect x="1130.40" y="471.30" width="1.00" height="12.00" fill="#a0a0a0" />
<rect x="1131.40" y="472.30" width="10.00" height="1.00" fill="#696969" />
<rect x="1131.40" y="472.30" width="1.00" height="10.00" fill="#696969" />
<rect x="1130.40" y="482.30" width="12.00" height="1.00" fill="#fff" />
<rect x="1141.40" y="471.30" width="1.00" height="12.00" fill="#fff" />
<rect x="1131.40" y="481.30" width="10.00" height="1.00" fill="#e3e3e3" />
<rect x="1140.40" y="472.30" width="1.00" height="10.00" fill="#e3e3e3" />
<path d="M1133.4 476.8 L1135.4 479.3 L1139.9 474.3" stroke="#000" stroke-width="1.8" fill="none"/>
<text x="1148.00" y="483.00" font-size="11" fill="#000" textLength="145.9" lengthAdjust="spacingAndGlyphs" >Evening Session (optional)</text>
<text x="1151.20" y="505.40" font-size="11" fill="#000" textLength="74.4" lengthAdjust="spacingAndGlyphs" >Evening Start:</text>
<rect x="1259.70" y="489.90" width="82.30" height="21.10" fill="#fff" />
<rect x="1259.70" y="489.90" width="82.30" height="1.00" fill="#a0a0a0" />
<rect x="1259.70" y="489.90" width="1.00" height="21.10" fill="#a0a0a0" />
<rect x="1260.70" y="490.90" width="80.30" height="1.00" fill="#696969" />
<rect x="1260.70" y="490.90" width="1.00" height="19.10" fill="#696969" />
<rect x="1259.70" y="510.00" width="82.30" height="1.00" fill="#ffffff" />
<rect x="1341.00" y="489.90" width="1.00" height="21.10" fill="#ffffff" />
<rect x="1260.70" y="509.00" width="80.30" height="1.00" fill="#e3e3e3" />
<rect x="1340.00" y="490.90" width="1.00" height="19.10" fill="#e3e3e3" />
<rect x="1324.00" y="490.90" width="17.00" height="9.55" fill="#f0f0f0" />
<rect x="1324.00" y="490.90" width="17.00" height="1.00" fill="#e3e3e3" />
<rect x="1324.00" y="490.90" width="1.00" height="9.55" fill="#e3e3e3" />
<rect x="1325.00" y="491.90" width="15.00" height="1.00" fill="#ffffff" />
<rect x="1325.00" y="491.90" width="1.00" height="7.55" fill="#ffffff" />
<rect x="1324.00" y="499.45" width="17.00" height="1.00" fill="#696969" />
<rect x="1340.00" y="490.90" width="1.00" height="9.55" fill="#696969" />
<rect x="1325.00" y="498.45" width="15.00" height="1.00" fill="#a0a0a0" />
<rect x="1339.00" y="491.90" width="1.00" height="7.55" fill="#a0a0a0" />
<rect x="1324.00" y="500.45" width="17.00" height="9.55" fill="#f0f0f0" />
<rect x="1324.00" y="500.45" width="17.00" height="1.00" fill="#e3e3e3" />
<rect x="1324.00" y="500.45" width="1.00" height="9.55" fill="#e3e3e3" />
<rect x="1325.00" y="501.45" width="15.00" height="1.00" fill="#ffffff" />
<rect x="1325.00" y="501.45" width="1.00" height="7.55" fill="#ffffff" />
<rect x="1324.00" y="509.00" width="17.00" height="1.00" fill="#696969" />
<rect x="1340.00" y="500.45" width="1.00" height="9.55" fill="#696969" />
<rect x="1325.00" y="508.00" width="15.00" height="1.00" fill="#a0a0a0" />
<rect x="1339.00" y="501.45" width="1.00" height="7.55" fill="#a0a0a0" />
<path d="M1330.7 496.57499999999993 L1334.3 496.57499999999993 L1332.5 494.275Z" fill="#000"/>
<path d="M1330.7 504.32500000000005 L1334.3 504.32500000000005 L1332.5 506.625Z" fill="#000"/>
<text x="1263.20" y="506.30" font-size="11" fill="#000" textLength="47" lengthAdjust="spacingAndGlyphs" >18:30:00</text>
<text x="1151.20" y="531.10" font-size="11" fill="#000" textLength="71.3" lengthAdjust="spacingAndGlyphs" >Evening End:</text>
<rect x="1259.70" y="515.60" width="82.30" height="20.80" fill="#fff" />
<rect x="1259.70" y="515.60" width="82.30" height="1.00" fill="#a0a0a0" />
<rect x="1259.70" y="515.60" width="1.00" height="20.80" fill="#a0a0a0" />
<rect x="1260.70" y="516.60" width="80.30" height="1.00" fill="#696969" />
<rect x="1260.70" y="516.60" width="1.00" height="18.80" fill="#696969" />
<rect x="1259.70" y="535.40" width="82.30" height="1.00" fill="#ffffff" />
<rect x="1341.00" y="515.60" width="1.00" height="20.80" fill="#ffffff" />
<rect x="1260.70" y="534.40" width="80.30" height="1.00" fill="#e3e3e3" />
<rect x="1340.00" y="516.60" width="1.00" height="18.80" fill="#e3e3e3" />
<rect x="1324.00" y="516.60" width="17.00" height="9.40" fill="#f0f0f0" />
<rect x="1324.00" y="516.60" width="17.00" height="1.00" fill="#e3e3e3" />
<rect x="1324.00" y="516.60" width="1.00" height="9.40" fill="#e3e3e3" />
<rect x="1325.00" y="517.60" width="15.00" height="1.00" fill="#ffffff" />
<rect x="1325.00" y="517.60" width="1.00" height="7.40" fill="#ffffff" />
<rect x="1324.00" y="525.00" width="17.00" height="1.00" fill="#696969" />
<rect x="1340.00" y="516.60" width="1.00" height="9.40" fill="#696969" />
<rect x="1325.00" y="524.00" width="15.00" height="1.00" fill="#a0a0a0" />
<rect x="1339.00" y="517.60" width="1.00" height="7.40" fill="#a0a0a0" />
<rect x="1324.00" y="526.00" width="17.00" height="9.40" fill="#f0f0f0" />
<rect x="1324.00" y="526.00" width="17.00" height="1.00" fill="#e3e3e3" />
<rect x="1324.00" y="526.00" width="1.00" height="9.40" fill="#e3e3e3" />
<rect x="1325.00" y="527.00" width="15.00" height="1.00" fill="#ffffff" />
<rect x="1325.00" y="527.00" width="1.00" height="7.40" fill="#ffffff" />
<rect x="1324.00" y="534.40" width="17.00" height="1.00" fill="#696969" />
<rect x="1340.00" y="526.00" width="1.00" height="9.40" fill="#696969" />
<rect x="1325.00" y="533.40" width="15.00" height="1.00" fill="#a0a0a0" />
<rect x="1339.00" y="527.00" width="1.00" height="7.40" fill="#a0a0a0" />
<path d="M1330.7 522.1999999999999 L1334.3 522.1999999999999 L1332.5 519.9Z" fill="#000"/>
<path d="M1330.7 529.8000000000001 L1334.3 529.8000000000001 L1332.5 532.1Z" fill="#000"/>
<text x="1263.20" y="532.10" font-size="11" fill="#000" textLength="47" lengthAdjust="spacingAndGlyphs" >13:19:59</text>
<rect x="1130.40" y="544.80" width="12.00" height="12.00" fill="#fff" />
<rect x="1130.40" y="544.80" width="12.00" height="1.00" fill="#a0a0a0" />
<rect x="1130.40" y="544.80" width="1.00" height="12.00" fill="#a0a0a0" />
<rect x="1131.40" y="545.80" width="10.00" height="1.00" fill="#696969" />
<rect x="1131.40" y="545.80" width="1.00" height="10.00" fill="#696969" />
<rect x="1130.40" y="555.80" width="12.00" height="1.00" fill="#fff" />
<rect x="1141.40" y="544.80" width="1.00" height="12.00" fill="#fff" />
<rect x="1131.40" y="554.80" width="10.00" height="1.00" fill="#e3e3e3" />
<rect x="1140.40" y="545.80" width="1.00" height="10.00" fill="#e3e3e3" />
<path d="M1133.4 550.3 L1135.4 552.8 L1139.9 547.8" stroke="#000" stroke-width="1.8" fill="none"/>
<text x="1148.00" y="556.00" font-size="11" fill="#000" textLength="135" lengthAdjust="spacingAndGlyphs" >New Bar At Session Start</text>
<rect x="1130.40" y="566.00" width="12.00" height="12.00" fill="#fff" />
<rect x="1130.40" y="566.00" width="12.00" height="1.00" fill="#a0a0a0" />
<rect x="1130.40" y="566.00" width="1.00" height="12.00" fill="#a0a0a0" />
<rect x="1131.40" y="567.00" width="10.00" height="1.00" fill="#696969" />
<rect x="1131.40" y="567.00" width="1.00" height="10.00" fill="#696969" />
<rect x="1130.40" y="577.00" width="12.00" height="1.00" fill="#fff" />
<rect x="1141.40" y="566.00" width="1.00" height="12.00" fill="#fff" />
<rect x="1131.40" y="576.00" width="10.00" height="1.00" fill="#e3e3e3" />
<rect x="1140.40" y="567.00" width="1.00" height="10.00" fill="#e3e3e3" />
<path d="M1133.4 571.5 L1135.4 574 L1139.9 569" stroke="#000" stroke-width="1.8" fill="none"/>
<text x="1148.00" y="577.00" font-size="11" fill="#000" textLength="111.7" lengthAdjust="spacingAndGlyphs" >Load Weekend Data</text>
<rect x="1142.80" y="602.30" width="12.00" height="12.00" fill="#fff" />
<rect x="1142.80" y="602.30" width="12.00" height="1.00" fill="#a0a0a0" />
<rect x="1142.80" y="602.30" width="1.00" height="12.00" fill="#a0a0a0" />
<rect x="1143.80" y="603.30" width="10.00" height="1.00" fill="#696969" />
<rect x="1143.80" y="603.30" width="1.00" height="10.00" fill="#696969" />
<rect x="1142.80" y="613.30" width="12.00" height="1.00" fill="#fff" />
<rect x="1153.80" y="602.30" width="1.00" height="12.00" fill="#fff" />
<rect x="1143.80" y="612.30" width="10.00" height="1.00" fill="#e3e3e3" />
<rect x="1152.80" y="603.30" width="1.00" height="10.00" fill="#e3e3e3" />
<text x="1159.90" y="612.70" font-size="11" fill="#000" textLength="370.3" lengthAdjust="spacingAndGlyphs" >Save Days to Load, Intraday Bar Period, Graph Draw Type as Default</text>
<rect x="1364.30" y="243.20" width="4.70" height="1.00" fill="#a0a0a0" />
<rect x="1365.30" y="244.20" width="3.70" height="1.00" fill="#fff" />
<rect x="1522.00" y="243.20" width="33.30" height="1.00" fill="#a0a0a0" />
<rect x="1522.00" y="244.20" width="33.30" height="1.00" fill="#fff" />
<rect x="1364.30" y="243.20" width="1.00" height="115.70" fill="#a0a0a0" />
<rect x="1365.30" y="244.20" width="1.00" height="113.70" fill="#fff" />
<rect x="1554.30" y="243.20" width="1.00" height="115.70" fill="#a0a0a0" />
<rect x="1555.30" y="243.20" width="1.00" height="116.70" fill="#fff" />
<rect x="1364.30" y="357.90" width="191.00" height="1.00" fill="#a0a0a0" />
<rect x="1364.30" y="358.90" width="192.00" height="1.00" fill="#fff" />
<text x="1373.00" y="249.40" font-size="11" fill="#000" textLength="146.4" lengthAdjust="spacingAndGlyphs" >Historical Chart Bar Period:</text>
<circle cx="1388.5" cy="264.9" r="5.5" fill="#f4f4f4" stroke="#c0c0c0" stroke-width="1"/>
<path d="M1383.5 266.9 A5.2 5.2 0 0 1 1390.5 259.9" stroke="#b8b8b8" stroke-width="1.2" fill="none"/>
<circle cx="1388.5" cy="264.9" r="2.2" fill="#a0a0a0"/>
<text x="1400.20" y="270.50" font-size="11" fill="#a0a0a0" textLength="29.2" lengthAdjust="spacingAndGlyphs" >Days:</text>
<circle cx="1388.5" cy="283.8" r="5.5" fill="#f4f4f4" stroke="#c0c0c0" stroke-width="1"/>
<path d="M1383.5 285.8 A5.2 5.2 0 0 1 1390.5 278.8" stroke="#b8b8b8" stroke-width="1.2" fill="none"/>
<text x="1400.20" y="289.40" font-size="11" fill="#a0a0a0" textLength="38.8" lengthAdjust="spacingAndGlyphs" >Weekly</text>
<circle cx="1388.5" cy="303" r="5.5" fill="#f4f4f4" stroke="#c0c0c0" stroke-width="1"/>
<path d="M1383.5 305 A5.2 5.2 0 0 1 1390.5 298" stroke="#b8b8b8" stroke-width="1.2" fill="none"/>
<text x="1400.20" y="308.60" font-size="11" fill="#a0a0a0" textLength="42.5" lengthAdjust="spacingAndGlyphs" >Monthly</text>
<circle cx="1388.5" cy="321.6" r="5.5" fill="#f4f4f4" stroke="#c0c0c0" stroke-width="1"/>
<path d="M1383.5 323.6 A5.2 5.2 0 0 1 1390.5 316.6" stroke="#b8b8b8" stroke-width="1.2" fill="none"/>
<text x="1400.20" y="327.20" font-size="11" fill="#a0a0a0" textLength="48.8" lengthAdjust="spacingAndGlyphs" >Quarterly</text>
<circle cx="1388.5" cy="340.2" r="5.5" fill="#f4f4f4" stroke="#c0c0c0" stroke-width="1"/>
<path d="M1383.5 342.2 A5.2 5.2 0 0 1 1390.5 335.2" stroke="#b8b8b8" stroke-width="1.2" fill="none"/>
<text x="1400.20" y="345.80" font-size="11" fill="#a0a0a0" textLength="32.6" lengthAdjust="spacingAndGlyphs" >Yearly</text>
<rect x="1455.10" y="256.50" width="83.20" height="21.70" fill="#f0f0f0" />
<rect x="1455.10" y="256.50" width="83.20" height="1.00" fill="#a0a0a0" />
<rect x="1455.10" y="256.50" width="1.00" height="21.70" fill="#a0a0a0" />
<rect x="1456.10" y="257.50" width="81.20" height="1.00" fill="#696969" />
<rect x="1456.10" y="257.50" width="1.00" height="19.70" fill="#696969" />
<rect x="1455.10" y="277.20" width="83.20" height="1.00" fill="#ffffff" />
<rect x="1537.30" y="256.50" width="1.00" height="21.70" fill="#ffffff" />
<rect x="1456.10" y="276.20" width="81.20" height="1.00" fill="#e3e3e3" />
<rect x="1536.30" y="257.50" width="1.00" height="19.70" fill="#e3e3e3" />
<text x="1459.20" y="272.50" font-size="11" fill="#a0a0a0" >1</text>
<text x="1364.30" y="382.10" font-size="11" fill="#000" textLength="65" lengthAdjust="spacingAndGlyphs" >Graph Type:</text>
<rect x="1364.30" y="388.30" width="191.70" height="94.10" fill="#fff" />
<rect x="1364.30" y="388.30" width="191.70" height="1.00" fill="#a0a0a0" />
<rect x="1364.30" y="388.30" width="1.00" height="94.10" fill="#a0a0a0" />
<rect x="1365.30" y="389.30" width="189.70" height="1.00" fill="#696969" />
<rect x="1365.30" y="389.30" width="1.00" height="92.10" fill="#696969" />
<rect x="1364.30" y="481.40" width="191.70" height="1.00" fill="#ffffff" />
<rect x="1555.00" y="388.30" width="1.00" height="94.10" fill="#ffffff" />
<rect x="1365.30" y="480.40" width="189.70" height="1.00" fill="#e3e3e3" />
<rect x="1554.00" y="389.30" width="1.00" height="92.10" fill="#e3e3e3" />
<rect x="1365.80" y="390.50" width="171.50" height="14.10" fill="#3399ff" />
<text x="1368.30" y="402.80" font-size="11" fill="#fff" textLength="60.5" lengthAdjust="spacingAndGlyphs" >OHLC Bars</text>
<text x="1368.30" y="417.82" font-size="11" fill="#000" textLength="90.6" lengthAdjust="spacingAndGlyphs" >Candlestick Bars</text>
<text x="1368.30" y="432.84" font-size="11" fill="#000" textLength="119.4" lengthAdjust="spacingAndGlyphs" >Candlestick Body Only</text>
<text x="1368.30" y="447.86" font-size="11" fill="#000" textLength="74.4" lengthAdjust="spacingAndGlyphs" >Line on Close</text>
<text x="1368.30" y="462.88" font-size="11" fill="#000" textLength="51.2" lengthAdjust="spacingAndGlyphs" >Mountain</text>
<text x="1368.30" y="477.90" font-size="11" fill="#000" textLength="51.2" lengthAdjust="spacingAndGlyphs" >HLC Bars</text>
<rect x="1538.30" y="390.30" width="16.00" height="90.00" fill="#f0f0f0" />
<path d="M1543.3 399.0 L1549.3 399.0 L1546.3 395.5Z" fill="#000"/>
<rect x="1539.50" y="408.60" width="14.00" height="18.60" fill="#eaeaea" />
<rect x="1539.50" y="408.60" width="14.00" height="1.00" fill="#e3e3e3" />
<rect x="1539.50" y="408.60" width="1.00" height="18.60" fill="#e3e3e3" />
<rect x="1540.50" y="409.60" width="12.00" height="1.00" fill="#ffffff" />
<rect x="1540.50" y="409.60" width="1.00" height="16.60" fill="#ffffff" />
<rect x="1539.50" y="426.20" width="14.00" height="1.00" fill="#696969" />
<rect x="1552.50" y="408.60" width="1.00" height="18.60" fill="#696969" />
<rect x="1540.50" y="425.20" width="12.00" height="1.00" fill="#a0a0a0" />
<rect x="1551.50" y="409.60" width="1.00" height="16.60" fill="#a0a0a0" />
<rect x="1543.00" y="414.00" width="7.00" height="1.00" fill="#707070" />
<rect x="1543.00" y="417.00" width="7.00" height="1.00" fill="#707070" />
<rect x="1543.00" y="420.00" width="7.00" height="1.00" fill="#707070" />
<path d="M1543.3 472.0 L1549.3 472.0 L1546.3 475.5Z" fill="#000"/>
<rect x="1364.30" y="490.80" width="80.00" height="25.80" fill="#f0f0f0" />
<rect x="1364.30" y="490.80" width="80.00" height="1.00" fill="#e3e3e3" />
<rect x="1364.30" y="490.80" width="1.00" height="25.80" fill="#e3e3e3" />
<rect x="1365.30" y="491.80" width="78.00" height="1.00" fill="#ffffff" />
<rect x="1365.30" y="491.80" width="1.00" height="23.80" fill="#ffffff" />
<rect x="1364.30" y="515.60" width="80.00" height="1.00" fill="#696969" />
<rect x="1443.30" y="490.80" width="1.00" height="25.80" fill="#696969" />
<rect x="1365.30" y="514.60" width="78.00" height="1.00" fill="#a0a0a0" />
<rect x="1442.30" y="491.80" width="1.00" height="23.80" fill="#a0a0a0" />
<text x="1404.30" y="509.40" font-size="11" fill="#000" text-anchor="middle" textLength="29" lengthAdjust="spacingAndGlyphs" >Scale</text>
<rect x="1366.00" y="528.00" width="181.60" height="25.50" fill="#f0f0f0" />
<rect x="1366.00" y="528.00" width="181.60" height="1.00" fill="#e3e3e3" />
<rect x="1366.00" y="528.00" width="1.00" height="25.50" fill="#e3e3e3" />
<rect x="1367.00" y="529.00" width="179.60" height="1.00" fill="#ffffff" />
<rect x="1367.00" y="529.00" width="1.00" height="23.50" fill="#ffffff" />
<rect x="1366.00" y="552.50" width="181.60" height="1.00" fill="#696969" />
<rect x="1546.60" y="528.00" width="1.00" height="25.50" fill="#696969" />
<rect x="1367.00" y="551.50" width="179.60" height="1.00" fill="#a0a0a0" />
<rect x="1545.60" y="529.00" width="1.00" height="23.50" fill="#a0a0a0" />
<text x="1456.80" y="546.60" font-size="11" fill="#000" text-anchor="middle" textLength="158.8" lengthAdjust="spacingAndGlyphs" >Apply Global Symbol Settings</text>
<rect x="1366.00" y="560.00" width="181.60" height="25.40" fill="#f0f0f0" />
<rect x="1366.00" y="560.00" width="181.60" height="1.00" fill="#e3e3e3" />
<rect x="1366.00" y="560.00" width="1.00" height="25.40" fill="#e3e3e3" />
<rect x="1367.00" y="561.00" width="179.60" height="1.00" fill="#ffffff" />
<rect x="1367.00" y="561.00" width="1.00" height="23.40" fill="#ffffff" />
<rect x="1366.00" y="584.40" width="181.60" height="1.00" fill="#696969" />
<rect x="1546.60" y="560.00" width="1.00" height="25.40" fill="#696969" />
<rect x="1367.00" y="583.40" width="179.60" height="1.00" fill="#a0a0a0" />
<rect x="1545.60" y="561.00" width="1.00" height="23.40" fill="#a0a0a0" />
<text x="1456.80" y="578.60" font-size="11" fill="#000" text-anchor="middle" textLength="150.5" lengthAdjust="spacingAndGlyphs" >Edit Global Symbol Settings</text>
<rect x="823.00" y="640.20" width="86.00" height="25.60" fill="#f0f0f0" />
<rect x="823.00" y="640.20" width="86.00" height="1.00" fill="#e3e3e3" />
<rect x="823.00" y="640.20" width="1.00" height="25.60" fill="#e3e3e3" />
<rect x="824.00" y="641.20" width="84.00" height="1.00" fill="#ffffff" />
<rect x="824.00" y="641.20" width="1.00" height="23.60" fill="#ffffff" />
<rect x="823.00" y="664.80" width="86.00" height="1.00" fill="#696969" />
<rect x="908.00" y="640.20" width="1.00" height="25.60" fill="#696969" />
<rect x="824.00" y="663.80" width="84.00" height="1.00" fill="#a0a0a0" />
<rect x="907.00" y="641.20" width="1.00" height="23.60" fill="#a0a0a0" />
<text x="866.00" y="658.00" font-size="11" fill="#000" text-anchor="middle" textLength="16.5" lengthAdjust="spacingAndGlyphs" >OK</text>
<rect x="915.80" y="640.20" width="86.20" height="25.60" fill="#f0f0f0" />
<rect x="915.80" y="640.20" width="86.20" height="1.00" fill="#e3e3e3" />
<rect x="915.80" y="640.20" width="1.00" height="25.60" fill="#e3e3e3" />
<rect x="916.80" y="641.20" width="84.20" height="1.00" fill="#ffffff" />
<rect x="916.80" y="641.20" width="1.00" height="23.60" fill="#ffffff" />
<rect x="915.80" y="664.80" width="86.20" height="1.00" fill="#696969" />
<rect x="1001.00" y="640.20" width="1.00" height="25.60" fill="#696969" />
<rect x="916.80" y="663.80" width="84.20" height="1.00" fill="#a0a0a0" />
<rect x="1000.00" y="641.20" width="1.00" height="23.60" fill="#a0a0a0" />
<text x="958.90" y="658.00" font-size="11" fill="#000" text-anchor="middle" textLength="37" lengthAdjust="spacingAndGlyphs" >Cancel</text>
<rect x="1009.00" y="640.20" width="86.00" height="25.60" fill="#f0f0f0" />
<rect x="1009.00" y="640.20" width="86.00" height="1.00" fill="#e3e3e3" />
<rect x="1009.00" y="640.20" width="1.00" height="25.60" fill="#e3e3e3" />
<rect x="1010.00" y="641.20" width="84.00" height="1.00" fill="#ffffff" />
<rect x="1010.00" y="641.20" width="1.00" height="23.60" fill="#ffffff" />
<rect x="1009.00" y="664.80" width="86.00" height="1.00" fill="#696969" />
<rect x="1094.00" y="640.20" width="1.00" height="25.60" fill="#696969" />
<rect x="1010.00" y="663.80" width="84.00" height="1.00" fill="#a0a0a0" />
<rect x="1093.00" y="641.20" width="1.00" height="23.60" fill="#a0a0a0" />
<text x="1052.00" y="658.00" font-size="11" fill="#000" text-anchor="middle" textLength="29.5" lengthAdjust="spacingAndGlyphs" >Apply</text>
<rect x="1102.40" y="640.60" width="85.40" height="24.80" fill="#f0f0f0" />
<rect x="1102.40" y="640.60" width="85.40" height="1.00" fill="#e3e3e3" />
<rect x="1102.40" y="640.60" width="1.00" height="24.80" fill="#e3e3e3" />
<rect x="1103.40" y="641.60" width="83.40" height="1.00" fill="#ffffff" />
<rect x="1103.40" y="641.60" width="1.00" height="22.80" fill="#ffffff" />
<rect x="1102.40" y="664.40" width="85.40" height="1.00" fill="#696969" />
<rect x="1186.80" y="640.60" width="1.00" height="24.80" fill="#696969" />
<rect x="1103.40" y="663.40" width="83.40" height="1.00" fill="#a0a0a0" />
<rect x="1185.80" y="641.60" width="1.00" height="22.80" fill="#a0a0a0" />
<text x="1145.10" y="658.30" font-size="11" fill="#000" text-anchor="middle" textLength="24" lengthAdjust="spacingAndGlyphs" >Help</text>
</svg></body></html>
